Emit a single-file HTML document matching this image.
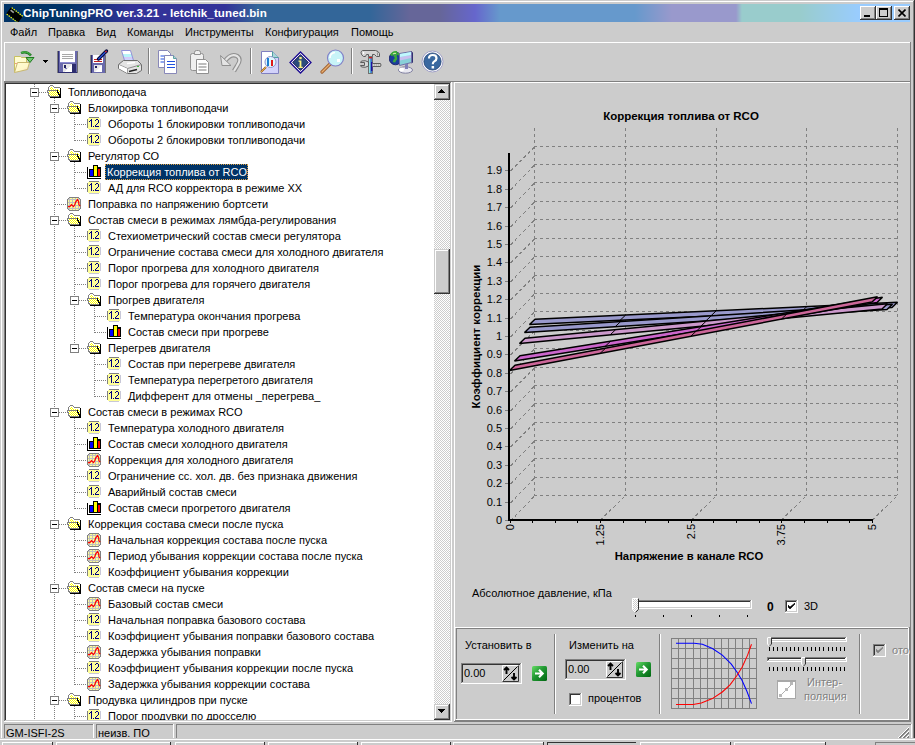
<!DOCTYPE html>
<html><head><meta charset="utf-8">
<style>
html,body{margin:0;padding:0;}
body{width:915px;height:745px;overflow:hidden;position:relative;background:#cccccc;font-family:"Liberation Sans",sans-serif;font-size:11px;color:#000;}
.a{position:absolute;}
.ic{position:absolute;}
.t{position:absolute;white-space:nowrap;line-height:16px;height:16px;}
.hl{position:absolute;height:1px;}
.vl{position:absolute;width:1px;}
.dh{position:absolute;height:1px;background:repeating-linear-gradient(90deg,#808080 0 1px,transparent 1px 2px);}
.dv{position:absolute;width:1px;background:repeating-linear-gradient(180deg,#808080 0 1px,transparent 1px 2px);}
</style></head><body>

<div class="a" style="left:1px;top:1px;width:913px;height:1px;background:#fff;"></div>
<div class="a" style="left:1px;top:1px;width:1px;height:737px;background:#fff;"></div>
<div class="a" style="left:913px;top:1px;width:1px;height:737px;background:#808080;"></div>
<div class="a" style="left:914px;top:0px;width:1px;height:738px;background:#333333;"></div>
<div class="a" style="left:4px;top:4px;width:906px;height:18px;background:linear-gradient(90deg,#003366 0px,#003366 62px,#333399 126px,#333399 221px,#336699 254px,#336699 366px,#666699 406px,#666699 436px,#6666cc 471px,#6699cc 496px,#6699cc 631px,#9999cc 668px,#9999cc 732px,#99cccc 738px,#99cccc 796px,#99ccff 856px,#99ccff 906px);"></div>
<svg class="a" style="left:4px;top:4px" width="20" height="18" viewBox="0 0 20 18">
<g transform="rotate(38 10.5 11)"><rect x="3" y="7.5" width="15" height="7" fill="#000"/>
<rect x="4.5" y="8.8" width="4" height="1.6" fill="#a0a0a0"/>
<path d="M4.5 6.3v1.2M7 6.3v1.2M9.5 6.3v1.2M12 6.3v1.2M14.5 6.3v1.2M17 6.3v1.2M4.5 14.5v1.2M7 14.5v1.2M9.5 14.5v1.2M12 14.5v1.2M14.5 14.5v1.2M17 14.5v1.2" stroke="#ffff00" stroke-width="1.4"/></g>
</svg>
<div class="t" style="left:23px;top:5px;color:#fff;font-weight:bold;font-size:11.6px;letter-spacing:0.09px;">ChipTuningPRO ver.3.21 - letchik_tuned.bin</div>
<div class="a" style="left:860px;top:6px;width:16px;height:1px;background:#fff;"></div>
<div class="a" style="left:860px;top:6px;width:1px;height:14px;background:#fff;"></div>
<div class="a" style="left:860px;top:19px;width:16px;height:1px;background:#333333;"></div>
<div class="a" style="left:875px;top:6px;width:1px;height:14px;background:#333333;"></div>
<div class="a" style="left:861px;top:18px;width:14px;height:1px;background:#808080;"></div>
<div class="a" style="left:874px;top:7px;width:1px;height:12px;background:#808080;"></div>
<div class="a" style="left:861px;top:7px;width:14px;height:12px;background:#cccccc;"></div>
<div class="a" style="left:860px;top:6px;width:16px;height:1px;background:#fff;"></div>
<div class="a" style="left:860px;top:6px;width:1px;height:14px;background:#fff;"></div>
<div class="a" style="left:861px;top:18px;width:14px;height:1px;background:#808080;"></div>
<div class="a" style="left:874px;top:7px;width:1px;height:12px;background:#808080;"></div>
<div class="a" style="left:860px;top:19px;width:16px;height:1px;background:#333333;"></div>
<div class="a" style="left:875px;top:6px;width:1px;height:14px;background:#333333;"></div>
<div class="a" style="left:864px;top:15px;width:6px;height:2px;background:#000;"></div>
<div class="a" style="left:876px;top:6px;width:16px;height:1px;background:#fff;"></div>
<div class="a" style="left:876px;top:6px;width:1px;height:14px;background:#fff;"></div>
<div class="a" style="left:876px;top:19px;width:16px;height:1px;background:#333333;"></div>
<div class="a" style="left:891px;top:6px;width:1px;height:14px;background:#333333;"></div>
<div class="a" style="left:877px;top:18px;width:14px;height:1px;background:#808080;"></div>
<div class="a" style="left:890px;top:7px;width:1px;height:12px;background:#808080;"></div>
<div class="a" style="left:877px;top:7px;width:14px;height:12px;background:#cccccc;"></div>
<div class="a" style="left:876px;top:6px;width:16px;height:1px;background:#fff;"></div>
<div class="a" style="left:876px;top:6px;width:1px;height:14px;background:#fff;"></div>
<div class="a" style="left:877px;top:18px;width:14px;height:1px;background:#808080;"></div>
<div class="a" style="left:890px;top:7px;width:1px;height:12px;background:#808080;"></div>
<div class="a" style="left:876px;top:19px;width:16px;height:1px;background:#333333;"></div>
<div class="a" style="left:891px;top:6px;width:1px;height:14px;background:#333333;"></div>
<div class="a" style="left:879px;top:8px;width:9px;height:9px;background:#000;"></div>
<div class="a" style="left:880px;top:10px;width:7px;height:6px;background:#cccccc;"></div>
<div class="a" style="left:894px;top:6px;width:16px;height:1px;background:#fff;"></div>
<div class="a" style="left:894px;top:6px;width:1px;height:14px;background:#fff;"></div>
<div class="a" style="left:894px;top:19px;width:16px;height:1px;background:#333333;"></div>
<div class="a" style="left:909px;top:6px;width:1px;height:14px;background:#333333;"></div>
<div class="a" style="left:895px;top:18px;width:14px;height:1px;background:#808080;"></div>
<div class="a" style="left:908px;top:7px;width:1px;height:12px;background:#808080;"></div>
<div class="a" style="left:895px;top:7px;width:14px;height:12px;background:#cccccc;"></div>
<div class="a" style="left:894px;top:6px;width:16px;height:1px;background:#fff;"></div>
<div class="a" style="left:894px;top:6px;width:1px;height:14px;background:#fff;"></div>
<div class="a" style="left:895px;top:18px;width:14px;height:1px;background:#808080;"></div>
<div class="a" style="left:908px;top:7px;width:1px;height:12px;background:#808080;"></div>
<div class="a" style="left:894px;top:19px;width:16px;height:1px;background:#333333;"></div>
<div class="a" style="left:909px;top:6px;width:1px;height:14px;background:#333333;"></div>
<svg class="a" style="left:898px;top:9px" width="8" height="8" viewBox="0 0 8 8"><path d="M0.5 0.5L7.5 7.5M7.5 0.5L0.5 7.5" stroke="#000" stroke-width="1.6"/></svg>
<div class="t" style="left:10px;top:24px;">Файл</div>
<div class="t" style="left:48px;top:24px;">Правка</div>
<div class="t" style="left:96px;top:24px;">Вид</div>
<div class="t" style="left:127px;top:24px;">Команды</div>
<div class="t" style="left:185px;top:24px;">Инструменты</div>
<div class="t" style="left:265px;top:24px;">Конфигурация</div>
<div class="t" style="left:351px;top:24px;">Помощь</div>
<div class="a" style="left:4px;top:42px;width:907px;height:1px;background:#fff;"></div>
<div class="a" style="left:4px;top:42px;width:1px;height:39px;background:#fff;"></div>
<div class="a" style="left:4px;top:81px;width:907px;height:1px;background:#808080;"></div>
<div class="a" style="left:910px;top:42px;width:1px;height:40px;background:#808080;"></div>
<div class="a" style="left:148px;top:48px;width:1px;height:26px;background:#808080;"></div>
<div class="a" style="left:149px;top:48px;width:1px;height:26px;background:#fff;"></div>
<div class="a" style="left:250px;top:48px;width:1px;height:26px;background:#808080;"></div>
<div class="a" style="left:251px;top:48px;width:1px;height:26px;background:#fff;"></div>
<div class="a" style="left:351px;top:48px;width:1px;height:26px;background:#808080;"></div>
<div class="a" style="left:352px;top:48px;width:1px;height:26px;background:#fff;"></div>
<svg class="a" style="left:12px;top:49px" width="24" height="26" viewBox="0 0 24 26">
<defs><linearGradient id="fo" x1="0" y1="0" x2="1" y2="1"><stop offset="0" stop-color="#fffcd8"/><stop offset="0.6" stop-color="#fff8c8"/><stop offset="1" stop-color="#f8c0c8"/></linearGradient></defs>
<path d="M2.5 23.5V7.5H8.5L9.5 8.5H14.5V13.5" fill="#fffcd0" stroke="#c8c060" stroke-width="1"/>
<path d="M2.5 23.5L5.5 13.5H17.5L15.5 20.5Z" fill="url(#fo)" stroke="#c8b870" stroke-width="1"/>
<path d="M3 14.5H5" stroke="#f0a080" stroke-width="1"/>
<path d="M9 4q6-2.5 10 2.5" stroke="#207820" stroke-width="2.4" fill="none"/>
<path d="M9.5 3.5q5.5-1.8 9 2.5" stroke="#50c050" stroke-width="1" fill="none"/>
<path d="M14 8.5L22 8.5L18 13.5Z" fill="#70c870" stroke="#207820" stroke-width="1"/>
</svg>
<svg class="a" style="left:43px;top:60px" width="7" height="5" viewBox="0 0 7 5" shape-rendering="crispEdges"><rect x="0" y="0" width="5" height="1" fill="#000"/><rect x="1" y="1" width="3" height="1" fill="#000"/><rect x="2" y="2" width="1" height="1" fill="#000"/></svg>
<svg class="a" style="left:56px;top:50px" width="23" height="24" viewBox="0 0 23 24" shape-rendering="crispEdges">
<rect x="1" y="1" width="21" height="22" fill="#6a6aac"/>
<rect x="1" y="1" width="1" height="22" fill="#808080"/>
<rect x="2" y="1" width="1" height="22" fill="#2e2e70"/>
<rect x="21" y="2" width="1" height="21" fill="#707070"/>
<rect x="3" y="22" width="18" height="1" fill="#2e2e70"/>
<rect x="4" y="1" width="15" height="11" fill="#fff"/>
<rect x="6" y="4" width="11" height="1" fill="#a8a8a8"/>
<rect x="6" y="6" width="11" height="1" fill="#a8a8a8"/>
<rect x="6" y="8" width="11" height="1" fill="#a8a8a8"/>
<rect x="4" y="12" width="15" height="1" fill="#8c8cd0"/>
<rect x="16" y="14" width="4" height="8" fill="#2e2e6e"/>
<rect x="7" y="14" width="9" height="8" fill="#e8e8e8"/>
<path d="M8 22L16 14V22Z" fill="#ffffff"/>
<rect x="8" y="15" width="2" height="3" fill="#202060"/>
<rect x="9" y="18" width="2" height="1" fill="#8080c0"/>
</svg>
<svg class="a" style="left:89px;top:49px" width="20" height="25" viewBox="0 0 20 25">
<rect x="1" y="6" width="16" height="18" fill="#6a6aac"/>
<rect x="1" y="6" width="1" height="18" fill="#808080"/><rect x="2" y="6" width="1" height="18" fill="#2e2e70"/>
<rect x="16" y="7" width="1" height="17" fill="#707070"/>
<rect x="4" y="6" width="10" height="8" fill="#fff"/>
<path d="M5 10.5h8M5 12.5h8" stroke="#c02020" stroke-width="1"/>
<rect x="5" y="16" width="8" height="7" fill="#e8e8e8"/>
<path d="M6 23L13 16V23Z" fill="#fff"/>
<rect x="6" y="17" width="2" height="2" fill="#202060"/>
<path d="M9.5 10l8-8" stroke="#000030" stroke-width="3.2" stroke-linecap="round"/>
<path d="M9.8 9.7l7.5-7.5" stroke="#2850d0" stroke-width="1.5" stroke-linecap="round"/>
<path d="M16.3 3.2l1.2-1.2" stroke="#d02020" stroke-width="1.6"/>
</svg>
<svg class="a" style="left:117px;top:49px" width="26" height="26" viewBox="0 0 26 26">
<defs><linearGradient id="pp" x1="0" y1="0" x2="0" y2="1"><stop offset="0" stop-color="#fff"/><stop offset="0.35" stop-color="#fff"/><stop offset="0.4" stop-color="#b8f4f8"/><stop offset="0.6" stop-color="#b8f4f8"/><stop offset="0.65" stop-color="#d8c8f8"/><stop offset="1" stop-color="#c8d8ff"/></linearGradient></defs>
<path d="M4.5 1.5H13.5L16.5 11.5H7.5Z" fill="url(#pp)" stroke="#9090d8" stroke-width="1"/>
<path d="M1.5 15.5L6.5 11.5H20.5L24.5 15.5V21.5L19.5 24.5H10.5L1.5 19.5Z" fill="#e4e4e4" stroke="#6c6c6c" stroke-width="1"/>
<path d="M1.5 15.5L10.5 19.5L24.5 15.5" stroke="#8c8c8c" stroke-width="1" fill="none"/>
<path d="M2 16L10 19.5V24L2 19.5Z" fill="#fff"/>
<path d="M10 14.5L18 13.5" stroke="#fff" stroke-width="1.6"/>
<path d="M10.5 19.5V24.5" stroke="#a0a0a0" stroke-width="1"/>
<path d="M12 22.5L20 20.5" stroke="#202020" stroke-width="1.6"/>
<rect x="20" y="17" width="2" height="1" fill="#40c040"/>
</svg>
<svg class="a" style="left:157px;top:50px" width="23" height="25" viewBox="0 0 23 25">
<path d="M1.5 0.5h9l3 3v14h-12z" fill="#fff" stroke="#8888b8" stroke-width="1"/>
<path d="M3.5 6h7M3.5 9h7M3.5 12h7" stroke="#2050e0" stroke-width="1.2"/>
<path d="M7.5 5.5h9l3 3v15h-12z" fill="#fff" stroke="#8888b8" stroke-width="1"/>
<path d="M16.5 5.5v3h3" fill="#a8d8d8" stroke="#60a0a0" stroke-width="1"/>
<path d="M10 11.5h8M10 14.5h8M10 17.5h8" stroke="#2050e0" stroke-width="1.2"/>
</svg>
<svg class="a" style="left:189px;top:49px" width="23" height="26" viewBox="0 0 23 26">
<rect x="1.5" y="4.5" width="13" height="17" rx="2" fill="#f0f0f0" stroke="#909090" stroke-width="1"/>
<path d="M5.5 5.5v-2q0-2 2-2h2q2 0 2 2v2z" fill="#f0f0f0" stroke="#909090" stroke-width="1"/>
<path d="M7.5 10.5h9l3 3v11h-12z" fill="#fff" stroke="#909090" stroke-width="1"/>
<path d="M9.5 15h8M9.5 18h8M9.5 21h8" stroke="#a8a8a8" stroke-width="1.4"/>
</svg>
<svg class="a" style="left:219px;top:52px" width="24" height="22" viewBox="0 0 24 22">
<path d="M6 9q6-8 12-5q5 3 0 10l-3 5" stroke="#909090" stroke-width="4.4" fill="none"/>
<path d="M6 9q6-8 12-5q5 3 0 10l-3 5" stroke="#e4e4e4" stroke-width="2.2" fill="none"/>
<path d="M1.5 3.5l1.5 10h9z" fill="#e4e4e4" stroke="#909090" stroke-width="1"/>
</svg>
<svg class="a" style="left:259px;top:50px" width="22" height="25" viewBox="0 0 22 25">
<defs><linearGradient id="pv" x1="0" y1="0" x2="1" y2="1"><stop offset="0" stop-color="#fff"/><stop offset="0.45" stop-color="#fff"/><stop offset="0.55" stop-color="#d4d4fc"/><stop offset="1" stop-color="#d0d0f8"/></linearGradient></defs>
<path d="M2.5 1.5h11l6 6v16h-17z" fill="url(#pv)" stroke="#8080c0" stroke-width="1"/>
<path d="M13.5 1.5v6h6" fill="#a8d8d8" stroke="#50a0a0" stroke-width="1"/>
<circle cx="11.5" cy="12" r="5.5" fill="#e0f8ff" stroke="#9090c8" stroke-width="1"/>
<rect x="8" y="8" width="2" height="8" fill="#2080d0"/><rect x="12" y="10" width="2" height="6" fill="#e01818"/>
<path d="M2 22l5-5" stroke="#a06030" stroke-width="2.2"/>
<path d="M2 22l5-5" stroke="#e8c040" stroke-width="0.9"/>
</svg>
<svg class="a" style="left:289px;top:51px" width="23" height="23" viewBox="0 0 23 23">
<path d="M11.5 1l10.5 10.5-10.5 10.5-10.5-10.5z" fill="#fff" stroke="#180890" stroke-width="1.3"/>
<path d="M11.5 3.6l7.9 7.9-7.9 7.9-7.9-7.9z" fill="#2c4c7c" stroke="#100050" stroke-width="0.8"/>
<rect x="10.3" y="6" width="2.4" height="2.2" fill="#f8f080"/>
<path d="M9.5 9.6h2.9v6.2h1.4v1.2h-4.3v-1.2h1.1v-5h-1.1z" fill="#f8f080"/>
</svg>
<svg class="a" style="left:320px;top:49px" width="26" height="25" viewBox="0 0 26 25">
<path d="M2 23l8-8" stroke="#a06030" stroke-width="3.2" stroke-linecap="round"/>
<path d="M2 23l8-8" stroke="#e8b070" stroke-width="1.3" stroke-linecap="round"/>
<circle cx="15.5" cy="9" r="8" fill="#c8f4f8" stroke="#8080c8" stroke-width="1.2"/>
<path d="M10 9q0-5 5-5.5" stroke="#fff" stroke-width="1.6" fill="none"/>
<rect x="17" y="10" width="3" height="3" fill="#fff"/>
</svg>
<svg class="a" style="left:359px;top:49px" width="24" height="26" viewBox="0 0 24 26">
<path d="M3.5 1.5H16.5Q19.5 2 20.5 4.5V7.5H17.5L15.5 5.5H13.5V7.5H9.5V5.5H7.5L6.5 7.5H4.5Q2 6 2 3.5Q2.3 2 3.5 1.5Z" fill="#d4d4d4" stroke="#5c5c5c" stroke-width="1"/>
<path d="M4.5 3v2" stroke="#fff" stroke-width="1.4"/>
<path d="M18.5 3.5v3" stroke="#909090" stroke-width="1"/>
<rect x="9.5" y="7.5" width="4" height="17" fill="#3a78c8" stroke="#707070" stroke-width="1"/>
<rect x="10" y="8" width="1.3" height="16" fill="#90e0e8"/>
<rect x="12" y="13" width="1.5" height="9" fill="#2010a0"/>
<rect x="10" y="8" width="3" height="1.4" fill="#d02020"/>
<path d="M13.5 14.5h8q1 1.5 0 3h-8" fill="#d0d0d0" stroke="#5c5c5c" stroke-width="1"/>
<path d="M15 16h5" stroke="#a0a0a0" stroke-width="1" stroke-dasharray="1 1"/>
<path d="M9.5 13q-3-2-7-1l-1 1.5h4v3h-4l1 1.5q4 1 7-1z" fill="#d8d8d8" stroke="#5c5c5c" stroke-width="1"/>
</svg>
<svg class="a" style="left:389px;top:50px" width="26" height="25" viewBox="0 0 26 25">
<circle cx="6.5" cy="8.5" r="6.3" fill="#1a3c9c" stroke="#101860" stroke-width="0.8"/>
<path d="M2 5.5q2-3.5 5-3.2q1 2-1 3.5q1.5 1.5 1 3q-1.5 1-2 3.5" stroke="#3aa83a" stroke-width="2.6" fill="none"/>
<path d="M8.5 3.5q3 1 3.3 4" stroke="#3aa83a" stroke-width="2" fill="none"/>
<path d="M4 4q1.5-1 3-0.5" stroke="#c8f0a0" stroke-width="1.3" fill="none"/>
<path d="M10.5 3.5L22.5 1.5V12.5L10.5 15.5Z" fill="#88d0d8" stroke="#7070a8" stroke-width="1"/>
<path d="M11 7L22 5V8L11 10.5Z" fill="#c8c0f0"/>
<path d="M11 4L22 2V5L11 7Z" fill="#c0f8ff"/>
<path d="M22.5 1.5L23.5 2.5V12.5L22.5 13" stroke="#303070" stroke-width="1" fill="none"/>
<ellipse cx="16.5" cy="20" rx="7" ry="3.2" fill="#e8e8f0" stroke="#8080a0" stroke-width="1"/>
<ellipse cx="12.5" cy="19.5" rx="2.5" ry="2" fill="#fff"/>
<rect x="16" y="14" width="3" height="5" fill="#8080b8"/>
</svg>
<svg class="a" style="left:421px;top:50px" width="24" height="24" viewBox="0 0 24 24">
<circle cx="11.5" cy="11.5" r="10.5" fill="#fff" stroke="#a0a0c8" stroke-width="1"/>
<circle cx="11.5" cy="11.5" r="8.6" fill="#3a68a0" stroke="#203c70" stroke-width="0.8"/>
<path d="M8 8.5q0-3.5 3.7-3.5q3.8 0 3.8 3.2q0 2-2.2 3.2q-1.5 0.8-1.5 2.8" stroke="#fff" stroke-width="2.2" fill="none"/>
<rect x="10.6" y="16" width="2.5" height="2.5" fill="#fff"/>
</svg>
<div class="a" style="left:4px;top:82px;width:448px;height:640px;background:#fff;"></div>
<div class="a" style="left:4px;top:82px;width:447px;height:1px;background:#808080;"></div>
<div class="a" style="left:4px;top:82px;width:1px;height:639px;background:#808080;"></div>
<div class="a" style="left:5px;top:83px;width:445px;height:1px;background:#333333;"></div>
<div class="a" style="left:5px;top:83px;width:1px;height:637px;background:#333333;"></div>
<div class="a" style="left:4px;top:721px;width:448px;height:1px;background:#fff;"></div>
<div class="a" style="left:451px;top:82px;width:1px;height:640px;background:#fff;"></div>
<div class="a" style="left:5px;top:720px;width:446px;height:1px;background:#cccccc;"></div>
<div class="a" style="left:450px;top:83px;width:1px;height:638px;background:#cccccc;"></div>
<div class="a" style="left:6px;top:84px;width:428px;height:636px;overflow:hidden;">
<div class="dv" style="left:28px;top:0px;height:636px;"></div>
<div class="dv" style="left:48px;top:14px;height:636px;"></div>
<div class="dv" style="left:68px;top:30px;height:27px;"></div>
<div class="dv" style="left:68px;top:78px;height:27px;"></div>
<div class="dv" style="left:68px;top:142px;height:123px;"></div>
<div class="dv" style="left:88px;top:222px;height:27px;"></div>
<div class="dv" style="left:88px;top:270px;height:43px;"></div>
<div class="dv" style="left:68px;top:334px;height:91px;"></div>
<div class="dv" style="left:68px;top:446px;height:43px;"></div>
<div class="dv" style="left:68px;top:510px;height:91px;"></div>
<div class="dv" style="left:68px;top:622px;height:15px;"></div>
<div class="dh" style="left:33px;top:8px;width:7px;"></div>
<div class="a" style="left:24px;top:4px;width:9px;height:9px;background:#808080;"></div>
<div class="a" style="left:25px;top:5px;width:7px;height:7px;background:#fff;"></div>
<div class="a" style="left:26px;top:8px;width:5px;height:1px;background:#000;"></div>
<svg class="ic" style="left:40px;top:0px;" width="16" height="16" viewBox="0 0 16 16" shape-rendering="crispEdges"><rect x="4" y="1" width="3" height="1" fill="#808080"/><rect x="3" y="2" width="1" height="1" fill="#808080"/><rect x="4" y="2" width="3" height="1" fill="#fff"/><rect x="7" y="2" width="1" height="1" fill="#808080"/><rect x="2" y="3" width="1" height="1" fill="#808080"/><rect x="3" y="3" width="2" height="1" fill="#fff"/><rect x="5" y="3" width="1" height="1" fill="#ffff00"/><rect x="6" y="3" width="2" height="1" fill="#fff"/><rect x="8" y="3" width="6" height="1" fill="#808080"/><rect x="2" y="4" width="1" height="1" fill="#808080"/><rect x="3" y="4" width="1" height="1" fill="#fff"/><rect x="4" y="4" width="1" height="1" fill="#ffff00"/><rect x="5" y="4" width="1" height="1" fill="#fff"/><rect x="6" y="4" width="1" height="1" fill="#ffff00"/><rect x="7" y="4" width="7" height="1" fill="#fff"/><rect x="14" y="4" width="1" height="1" fill="#000"/><rect x="2" y="5" width="1" height="1" fill="#808080"/><rect x="3" y="5" width="2" height="1" fill="#fff"/><rect x="5" y="5" width="1" height="1" fill="#ffff00"/><rect x="6" y="5" width="1" height="1" fill="#fff"/><rect x="7" y="5" width="1" height="1" fill="#ffff00"/><rect x="8" y="5" width="1" height="1" fill="#fff"/><rect x="9" y="5" width="1" height="1" fill="#ffff00"/><rect x="10" y="5" width="1" height="1" fill="#fff"/><rect x="11" y="5" width="1" height="1" fill="#ffff00"/><rect x="12" y="5" width="2" height="1" fill="#fff"/><rect x="14" y="5" width="1" height="1" fill="#000"/><rect x="1" y="6" width="10" height="1" fill="#808080"/><rect x="11" y="6" width="1" height="1" fill="#000"/><rect x="12" y="6" width="1" height="1" fill="#ffff00"/><rect x="13" y="6" width="1" height="1" fill="#fff"/><rect x="14" y="6" width="1" height="1" fill="#000"/><rect x="1" y="7" width="1" height="1" fill="#808080"/><rect x="2" y="7" width="1" height="1" fill="#fff"/><rect x="3" y="7" width="1" height="1" fill="#ffff00"/><rect x="4" y="7" width="1" height="1" fill="#fff"/><rect x="5" y="7" width="1" height="1" fill="#ffff00"/><rect x="6" y="7" width="1" height="1" fill="#fff"/><rect x="7" y="7" width="1" height="1" fill="#ffff00"/><rect x="8" y="7" width="1" height="1" fill="#fff"/><rect x="9" y="7" width="1" height="1" fill="#ffff00"/><rect x="10" y="7" width="1" height="1" fill="#fff"/><rect x="11" y="7" width="1" height="1" fill="#000"/><rect x="12" y="7" width="1" height="1" fill="#fff"/><rect x="13" y="7" width="1" height="1" fill="#ffff00"/><rect x="14" y="7" width="1" height="1" fill="#000"/><rect x="1" y="8" width="2" height="1" fill="#808080"/><rect x="3" y="8" width="1" height="1" fill="#fff"/><rect x="4" y="8" width="1" height="1" fill="#ffff00"/><rect x="5" y="8" width="1" height="1" fill="#fff"/><rect x="6" y="8" width="1" height="1" fill="#ffff00"/><rect x="7" y="8" width="1" height="1" fill="#fff"/><rect x="8" y="8" width="1" height="1" fill="#ffff00"/><rect x="9" y="8" width="1" height="1" fill="#fff"/><rect x="10" y="8" width="1" height="1" fill="#ffff00"/><rect x="11" y="8" width="2" height="1" fill="#000"/><rect x="13" y="8" width="1" height="1" fill="#fff"/><rect x="14" y="8" width="1" height="1" fill="#000"/><rect x="2" y="9" width="1" height="1" fill="#808080"/><rect x="3" y="9" width="1" height="1" fill="#ffff00"/><rect x="4" y="9" width="1" height="1" fill="#fff"/><rect x="5" y="9" width="1" height="1" fill="#ffff00"/><rect x="6" y="9" width="1" height="1" fill="#fff"/><rect x="7" y="9" width="1" height="1" fill="#ffff00"/><rect x="8" y="9" width="1" height="1" fill="#fff"/><rect x="9" y="9" width="1" height="1" fill="#ffff00"/><rect x="10" y="9" width="1" height="1" fill="#fff"/><rect x="11" y="9" width="1" height="1" fill="#ffff00"/><rect x="12" y="9" width="1" height="1" fill="#000"/><rect x="13" y="9" width="1" height="1" fill="#ffff00"/><rect x="14" y="9" width="1" height="1" fill="#000"/><rect x="2" y="10" width="1" height="1" fill="#808080"/><rect x="3" y="10" width="1" height="1" fill="#fff"/><rect x="4" y="10" width="1" height="1" fill="#ffff00"/><rect x="5" y="10" width="1" height="1" fill="#fff"/><rect x="6" y="10" width="1" height="1" fill="#ffff00"/><rect x="7" y="10" width="1" height="1" fill="#fff"/><rect x="8" y="10" width="1" height="1" fill="#ffff00"/><rect x="9" y="10" width="1" height="1" fill="#fff"/><rect x="10" y="10" width="1" height="1" fill="#ffff00"/><rect x="11" y="10" width="1" height="1" fill="#fff"/><rect x="12" y="10" width="3" height="1" fill="#000"/><rect x="2" y="11" width="2" height="1" fill="#808080"/><rect x="4" y="11" width="1" height="1" fill="#fff"/><rect x="5" y="11" width="1" height="1" fill="#ffff00"/><rect x="6" y="11" width="1" height="1" fill="#fff"/><rect x="7" y="11" width="1" height="1" fill="#ffff00"/><rect x="8" y="11" width="1" height="1" fill="#fff"/><rect x="9" y="11" width="1" height="1" fill="#ffff00"/><rect x="10" y="11" width="1" height="1" fill="#fff"/><rect x="11" y="11" width="1" height="1" fill="#ffff00"/><rect x="12" y="11" width="1" height="1" fill="#fff"/><rect x="13" y="11" width="2" height="1" fill="#000"/><rect x="3" y="12" width="10" height="1" fill="#808080"/><rect x="13" y="12" width="2" height="1" fill="#000"/><rect x="4" y="13" width="11" height="1" fill="#000"/></svg>
<div class="t" style="left:62px;top:0px;">Топливоподача</div>
<div class="dh" style="left:53px;top:24px;width:7px;"></div>
<div class="a" style="left:44px;top:20px;width:9px;height:9px;background:#808080;"></div>
<div class="a" style="left:45px;top:21px;width:7px;height:7px;background:#fff;"></div>
<div class="a" style="left:46px;top:24px;width:5px;height:1px;background:#000;"></div>
<svg class="ic" style="left:60px;top:16px;" width="16" height="16" viewBox="0 0 16 16" shape-rendering="crispEdges"><rect x="4" y="1" width="3" height="1" fill="#808080"/><rect x="3" y="2" width="1" height="1" fill="#808080"/><rect x="4" y="2" width="3" height="1" fill="#fff"/><rect x="7" y="2" width="1" height="1" fill="#808080"/><rect x="2" y="3" width="1" height="1" fill="#808080"/><rect x="3" y="3" width="2" height="1" fill="#fff"/><rect x="5" y="3" width="1" height="1" fill="#ffff00"/><rect x="6" y="3" width="2" height="1" fill="#fff"/><rect x="8" y="3" width="6" height="1" fill="#808080"/><rect x="2" y="4" width="1" height="1" fill="#808080"/><rect x="3" y="4" width="1" height="1" fill="#fff"/><rect x="4" y="4" width="1" height="1" fill="#ffff00"/><rect x="5" y="4" width="1" height="1" fill="#fff"/><rect x="6" y="4" width="1" height="1" fill="#ffff00"/><rect x="7" y="4" width="7" height="1" fill="#fff"/><rect x="14" y="4" width="1" height="1" fill="#000"/><rect x="2" y="5" width="1" height="1" fill="#808080"/><rect x="3" y="5" width="2" height="1" fill="#fff"/><rect x="5" y="5" width="1" height="1" fill="#ffff00"/><rect x="6" y="5" width="1" height="1" fill="#fff"/><rect x="7" y="5" width="1" height="1" fill="#ffff00"/><rect x="8" y="5" width="1" height="1" fill="#fff"/><rect x="9" y="5" width="1" height="1" fill="#ffff00"/><rect x="10" y="5" width="1" height="1" fill="#fff"/><rect x="11" y="5" width="1" height="1" fill="#ffff00"/><rect x="12" y="5" width="2" height="1" fill="#fff"/><rect x="14" y="5" width="1" height="1" fill="#000"/><rect x="1" y="6" width="10" height="1" fill="#808080"/><rect x="11" y="6" width="1" height="1" fill="#000"/><rect x="12" y="6" width="1" height="1" fill="#ffff00"/><rect x="13" y="6" width="1" height="1" fill="#fff"/><rect x="14" y="6" width="1" height="1" fill="#000"/><rect x="1" y="7" width="1" height="1" fill="#808080"/><rect x="2" y="7" width="1" height="1" fill="#fff"/><rect x="3" y="7" width="1" height="1" fill="#ffff00"/><rect x="4" y="7" width="1" height="1" fill="#fff"/><rect x="5" y="7" width="1" height="1" fill="#ffff00"/><rect x="6" y="7" width="1" height="1" fill="#fff"/><rect x="7" y="7" width="1" height="1" fill="#ffff00"/><rect x="8" y="7" width="1" height="1" fill="#fff"/><rect x="9" y="7" width="1" height="1" fill="#ffff00"/><rect x="10" y="7" width="1" height="1" fill="#fff"/><rect x="11" y="7" width="1" height="1" fill="#000"/><rect x="12" y="7" width="1" height="1" fill="#fff"/><rect x="13" y="7" width="1" height="1" fill="#ffff00"/><rect x="14" y="7" width="1" height="1" fill="#000"/><rect x="1" y="8" width="2" height="1" fill="#808080"/><rect x="3" y="8" width="1" height="1" fill="#fff"/><rect x="4" y="8" width="1" height="1" fill="#ffff00"/><rect x="5" y="8" width="1" height="1" fill="#fff"/><rect x="6" y="8" width="1" height="1" fill="#ffff00"/><rect x="7" y="8" width="1" height="1" fill="#fff"/><rect x="8" y="8" width="1" height="1" fill="#ffff00"/><rect x="9" y="8" width="1" height="1" fill="#fff"/><rect x="10" y="8" width="1" height="1" fill="#ffff00"/><rect x="11" y="8" width="2" height="1" fill="#000"/><rect x="13" y="8" width="1" height="1" fill="#fff"/><rect x="14" y="8" width="1" height="1" fill="#000"/><rect x="2" y="9" width="1" height="1" fill="#808080"/><rect x="3" y="9" width="1" height="1" fill="#ffff00"/><rect x="4" y="9" width="1" height="1" fill="#fff"/><rect x="5" y="9" width="1" height="1" fill="#ffff00"/><rect x="6" y="9" width="1" height="1" fill="#fff"/><rect x="7" y="9" width="1" height="1" fill="#ffff00"/><rect x="8" y="9" width="1" height="1" fill="#fff"/><rect x="9" y="9" width="1" height="1" fill="#ffff00"/><rect x="10" y="9" width="1" height="1" fill="#fff"/><rect x="11" y="9" width="1" height="1" fill="#ffff00"/><rect x="12" y="9" width="1" height="1" fill="#000"/><rect x="13" y="9" width="1" height="1" fill="#ffff00"/><rect x="14" y="9" width="1" height="1" fill="#000"/><rect x="2" y="10" width="1" height="1" fill="#808080"/><rect x="3" y="10" width="1" height="1" fill="#fff"/><rect x="4" y="10" width="1" height="1" fill="#ffff00"/><rect x="5" y="10" width="1" height="1" fill="#fff"/><rect x="6" y="10" width="1" height="1" fill="#ffff00"/><rect x="7" y="10" width="1" height="1" fill="#fff"/><rect x="8" y="10" width="1" height="1" fill="#ffff00"/><rect x="9" y="10" width="1" height="1" fill="#fff"/><rect x="10" y="10" width="1" height="1" fill="#ffff00"/><rect x="11" y="10" width="1" height="1" fill="#fff"/><rect x="12" y="10" width="3" height="1" fill="#000"/><rect x="2" y="11" width="2" height="1" fill="#808080"/><rect x="4" y="11" width="1" height="1" fill="#fff"/><rect x="5" y="11" width="1" height="1" fill="#ffff00"/><rect x="6" y="11" width="1" height="1" fill="#fff"/><rect x="7" y="11" width="1" height="1" fill="#ffff00"/><rect x="8" y="11" width="1" height="1" fill="#fff"/><rect x="9" y="11" width="1" height="1" fill="#ffff00"/><rect x="10" y="11" width="1" height="1" fill="#fff"/><rect x="11" y="11" width="1" height="1" fill="#ffff00"/><rect x="12" y="11" width="1" height="1" fill="#fff"/><rect x="13" y="11" width="2" height="1" fill="#000"/><rect x="3" y="12" width="10" height="1" fill="#808080"/><rect x="13" y="12" width="2" height="1" fill="#000"/><rect x="4" y="13" width="11" height="1" fill="#000"/></svg>
<div class="t" style="left:82px;top:16px;">Блокировка топливоподачи</div>
<div class="dh" style="left:69px;top:40px;width:11px;"></div>
<svg class="ic" style="left:80px;top:32px;" width="16" height="16" viewBox="0 0 16 16" shape-rendering="crispEdges"><rect x="3" y="1" width="10" height="1" fill="#808080"/><rect x="2" y="2" width="12" height="1" fill="#ffff99"/><rect x="1" y="3" width="1" height="1" fill="#808080"/><rect x="2" y="3" width="3" height="1" fill="#ffff99"/><rect x="5" y="3" width="1" height="1" fill="#000080"/><rect x="6" y="3" width="4" height="1" fill="#ffff99"/><rect x="10" y="3" width="2" height="1" fill="#000080"/><rect x="12" y="3" width="2" height="1" fill="#ffff99"/><rect x="14" y="3" width="1" height="1" fill="#c8c8d8"/><rect x="1" y="4" width="1" height="1" fill="#808080"/><rect x="2" y="4" width="2" height="1" fill="#ffff99"/><rect x="4" y="4" width="2" height="1" fill="#000080"/><rect x="6" y="4" width="3" height="1" fill="#ffff99"/><rect x="9" y="4" width="1" height="1" fill="#000080"/><rect x="10" y="4" width="2" height="1" fill="#ffff99"/><rect x="12" y="4" width="1" height="1" fill="#000080"/><rect x="13" y="4" width="1" height="1" fill="#ffff99"/><rect x="14" y="4" width="1" height="1" fill="#c8c8d8"/><rect x="1" y="5" width="1" height="1" fill="#808080"/><rect x="2" y="5" width="1" height="1" fill="#ffff99"/><rect x="3" y="5" width="1" height="1" fill="#000080"/><rect x="4" y="5" width="1" height="1" fill="#ffff99"/><rect x="5" y="5" width="1" height="1" fill="#000080"/><rect x="6" y="5" width="6" height="1" fill="#ffff99"/><rect x="12" y="5" width="1" height="1" fill="#000080"/><rect x="13" y="5" width="1" height="1" fill="#ffff99"/><rect x="14" y="5" width="1" height="1" fill="#c8c8d8"/><rect x="1" y="6" width="1" height="1" fill="#808080"/><rect x="2" y="6" width="3" height="1" fill="#ffff99"/><rect x="5" y="6" width="1" height="1" fill="#000080"/><rect x="6" y="6" width="6" height="1" fill="#ffff99"/><rect x="12" y="6" width="1" height="1" fill="#000080"/><rect x="13" y="6" width="1" height="1" fill="#ffff99"/><rect x="14" y="6" width="1" height="1" fill="#c8c8d8"/><rect x="1" y="7" width="1" height="1" fill="#808080"/><rect x="2" y="7" width="3" height="1" fill="#ffff99"/><rect x="5" y="7" width="1" height="1" fill="#000080"/><rect x="6" y="7" width="5" height="1" fill="#ffff99"/><rect x="11" y="7" width="1" height="1" fill="#000080"/><rect x="12" y="7" width="2" height="1" fill="#ffff99"/><rect x="14" y="7" width="1" height="1" fill="#c8c8d8"/><rect x="1" y="8" width="1" height="1" fill="#808080"/><rect x="2" y="8" width="3" height="1" fill="#ffff99"/><rect x="5" y="8" width="1" height="1" fill="#000080"/><rect x="6" y="8" width="4" height="1" fill="#ffff99"/><rect x="10" y="8" width="1" height="1" fill="#000080"/><rect x="11" y="8" width="3" height="1" fill="#ffff99"/><rect x="14" y="8" width="1" height="1" fill="#c8c8d8"/><rect x="1" y="9" width="1" height="1" fill="#808080"/><rect x="2" y="9" width="3" height="1" fill="#ffff99"/><rect x="5" y="9" width="1" height="1" fill="#000080"/><rect x="6" y="9" width="3" height="1" fill="#ffff99"/><rect x="9" y="9" width="1" height="1" fill="#000080"/><rect x="10" y="9" width="4" height="1" fill="#ffff99"/><rect x="14" y="9" width="1" height="1" fill="#c8c8d8"/><rect x="1" y="10" width="1" height="1" fill="#808080"/><rect x="2" y="10" width="3" height="1" fill="#ffff99"/><rect x="5" y="10" width="1" height="1" fill="#000080"/><rect x="6" y="10" width="1" height="1" fill="#ffff99"/><rect x="7" y="10" width="1" height="1" fill="#000080"/><rect x="8" y="10" width="1" height="1" fill="#ffff99"/><rect x="9" y="10" width="4" height="1" fill="#000080"/><rect x="13" y="10" width="1" height="1" fill="#ffff99"/><rect x="14" y="10" width="1" height="1" fill="#c8c8d8"/><rect x="1" y="11" width="1" height="1" fill="#808080"/><rect x="2" y="11" width="12" height="1" fill="#ffff99"/><rect x="2" y="12" width="12" height="1" fill="#ffff99"/><rect x="3" y="13" width="10" height="1" fill="#c8c8d8"/></svg>
<div class="t" style="left:102px;top:32px;">Обороты 1 блокировки топливоподачи</div>
<div class="dh" style="left:69px;top:56px;width:11px;"></div>
<svg class="ic" style="left:80px;top:48px;" width="16" height="16" viewBox="0 0 16 16" shape-rendering="crispEdges"><rect x="3" y="1" width="10" height="1" fill="#808080"/><rect x="2" y="2" width="12" height="1" fill="#ffff99"/><rect x="1" y="3" width="1" height="1" fill="#808080"/><rect x="2" y="3" width="3" height="1" fill="#ffff99"/><rect x="5" y="3" width="1" height="1" fill="#000080"/><rect x="6" y="3" width="4" height="1" fill="#ffff99"/><rect x="10" y="3" width="2" height="1" fill="#000080"/><rect x="12" y="3" width="2" height="1" fill="#ffff99"/><rect x="14" y="3" width="1" height="1" fill="#c8c8d8"/><rect x="1" y="4" width="1" height="1" fill="#808080"/><rect x="2" y="4" width="2" height="1" fill="#ffff99"/><rect x="4" y="4" width="2" height="1" fill="#000080"/><rect x="6" y="4" width="3" height="1" fill="#ffff99"/><rect x="9" y="4" width="1" height="1" fill="#000080"/><rect x="10" y="4" width="2" height="1" fill="#ffff99"/><rect x="12" y="4" width="1" height="1" fill="#000080"/><rect x="13" y="4" width="1" height="1" fill="#ffff99"/><rect x="14" y="4" width="1" height="1" fill="#c8c8d8"/><rect x="1" y="5" width="1" height="1" fill="#808080"/><rect x="2" y="5" width="1" height="1" fill="#ffff99"/><rect x="3" y="5" width="1" height="1" fill="#000080"/><rect x="4" y="5" width="1" height="1" fill="#ffff99"/><rect x="5" y="5" width="1" height="1" fill="#000080"/><rect x="6" y="5" width="6" height="1" fill="#ffff99"/><rect x="12" y="5" width="1" height="1" fill="#000080"/><rect x="13" y="5" width="1" height="1" fill="#ffff99"/><rect x="14" y="5" width="1" height="1" fill="#c8c8d8"/><rect x="1" y="6" width="1" height="1" fill="#808080"/><rect x="2" y="6" width="3" height="1" fill="#ffff99"/><rect x="5" y="6" width="1" height="1" fill="#000080"/><rect x="6" y="6" width="6" height="1" fill="#ffff99"/><rect x="12" y="6" width="1" height="1" fill="#000080"/><rect x="13" y="6" width="1" height="1" fill="#ffff99"/><rect x="14" y="6" width="1" height="1" fill="#c8c8d8"/><rect x="1" y="7" width="1" height="1" fill="#808080"/><rect x="2" y="7" width="3" height="1" fill="#ffff99"/><rect x="5" y="7" width="1" height="1" fill="#000080"/><rect x="6" y="7" width="5" height="1" fill="#ffff99"/><rect x="11" y="7" width="1" height="1" fill="#000080"/><rect x="12" y="7" width="2" height="1" fill="#ffff99"/><rect x="14" y="7" width="1" height="1" fill="#c8c8d8"/><rect x="1" y="8" width="1" height="1" fill="#808080"/><rect x="2" y="8" width="3" height="1" fill="#ffff99"/><rect x="5" y="8" width="1" height="1" fill="#000080"/><rect x="6" y="8" width="4" height="1" fill="#ffff99"/><rect x="10" y="8" width="1" height="1" fill="#000080"/><rect x="11" y="8" width="3" height="1" fill="#ffff99"/><rect x="14" y="8" width="1" height="1" fill="#c8c8d8"/><rect x="1" y="9" width="1" height="1" fill="#808080"/><rect x="2" y="9" width="3" height="1" fill="#ffff99"/><rect x="5" y="9" width="1" height="1" fill="#000080"/><rect x="6" y="9" width="3" height="1" fill="#ffff99"/><rect x="9" y="9" width="1" height="1" fill="#000080"/><rect x="10" y="9" width="4" height="1" fill="#ffff99"/><rect x="14" y="9" width="1" height="1" fill="#c8c8d8"/><rect x="1" y="10" width="1" height="1" fill="#808080"/><rect x="2" y="10" width="3" height="1" fill="#ffff99"/><rect x="5" y="10" width="1" height="1" fill="#000080"/><rect x="6" y="10" width="1" height="1" fill="#ffff99"/><rect x="7" y="10" width="1" height="1" fill="#000080"/><rect x="8" y="10" width="1" height="1" fill="#ffff99"/><rect x="9" y="10" width="4" height="1" fill="#000080"/><rect x="13" y="10" width="1" height="1" fill="#ffff99"/><rect x="14" y="10" width="1" height="1" fill="#c8c8d8"/><rect x="1" y="11" width="1" height="1" fill="#808080"/><rect x="2" y="11" width="12" height="1" fill="#ffff99"/><rect x="2" y="12" width="12" height="1" fill="#ffff99"/><rect x="3" y="13" width="10" height="1" fill="#c8c8d8"/></svg>
<div class="t" style="left:102px;top:48px;">Обороты 2 блокировки топливоподачи</div>
<div class="dh" style="left:53px;top:72px;width:7px;"></div>
<div class="a" style="left:44px;top:68px;width:9px;height:9px;background:#808080;"></div>
<div class="a" style="left:45px;top:69px;width:7px;height:7px;background:#fff;"></div>
<div class="a" style="left:46px;top:72px;width:5px;height:1px;background:#000;"></div>
<svg class="ic" style="left:60px;top:64px;" width="16" height="16" viewBox="0 0 16 16" shape-rendering="crispEdges"><rect x="4" y="1" width="3" height="1" fill="#808080"/><rect x="3" y="2" width="1" height="1" fill="#808080"/><rect x="4" y="2" width="3" height="1" fill="#fff"/><rect x="7" y="2" width="1" height="1" fill="#808080"/><rect x="2" y="3" width="1" height="1" fill="#808080"/><rect x="3" y="3" width="2" height="1" fill="#fff"/><rect x="5" y="3" width="1" height="1" fill="#ffff00"/><rect x="6" y="3" width="2" height="1" fill="#fff"/><rect x="8" y="3" width="6" height="1" fill="#808080"/><rect x="2" y="4" width="1" height="1" fill="#808080"/><rect x="3" y="4" width="1" height="1" fill="#fff"/><rect x="4" y="4" width="1" height="1" fill="#ffff00"/><rect x="5" y="4" width="1" height="1" fill="#fff"/><rect x="6" y="4" width="1" height="1" fill="#ffff00"/><rect x="7" y="4" width="7" height="1" fill="#fff"/><rect x="14" y="4" width="1" height="1" fill="#000"/><rect x="2" y="5" width="1" height="1" fill="#808080"/><rect x="3" y="5" width="2" height="1" fill="#fff"/><rect x="5" y="5" width="1" height="1" fill="#ffff00"/><rect x="6" y="5" width="1" height="1" fill="#fff"/><rect x="7" y="5" width="1" height="1" fill="#ffff00"/><rect x="8" y="5" width="1" height="1" fill="#fff"/><rect x="9" y="5" width="1" height="1" fill="#ffff00"/><rect x="10" y="5" width="1" height="1" fill="#fff"/><rect x="11" y="5" width="1" height="1" fill="#ffff00"/><rect x="12" y="5" width="2" height="1" fill="#fff"/><rect x="14" y="5" width="1" height="1" fill="#000"/><rect x="1" y="6" width="10" height="1" fill="#808080"/><rect x="11" y="6" width="1" height="1" fill="#000"/><rect x="12" y="6" width="1" height="1" fill="#ffff00"/><rect x="13" y="6" width="1" height="1" fill="#fff"/><rect x="14" y="6" width="1" height="1" fill="#000"/><rect x="1" y="7" width="1" height="1" fill="#808080"/><rect x="2" y="7" width="1" height="1" fill="#fff"/><rect x="3" y="7" width="1" height="1" fill="#ffff00"/><rect x="4" y="7" width="1" height="1" fill="#fff"/><rect x="5" y="7" width="1" height="1" fill="#ffff00"/><rect x="6" y="7" width="1" height="1" fill="#fff"/><rect x="7" y="7" width="1" height="1" fill="#ffff00"/><rect x="8" y="7" width="1" height="1" fill="#fff"/><rect x="9" y="7" width="1" height="1" fill="#ffff00"/><rect x="10" y="7" width="1" height="1" fill="#fff"/><rect x="11" y="7" width="1" height="1" fill="#000"/><rect x="12" y="7" width="1" height="1" fill="#fff"/><rect x="13" y="7" width="1" height="1" fill="#ffff00"/><rect x="14" y="7" width="1" height="1" fill="#000"/><rect x="1" y="8" width="2" height="1" fill="#808080"/><rect x="3" y="8" width="1" height="1" fill="#fff"/><rect x="4" y="8" width="1" height="1" fill="#ffff00"/><rect x="5" y="8" width="1" height="1" fill="#fff"/><rect x="6" y="8" width="1" height="1" fill="#ffff00"/><rect x="7" y="8" width="1" height="1" fill="#fff"/><rect x="8" y="8" width="1" height="1" fill="#ffff00"/><rect x="9" y="8" width="1" height="1" fill="#fff"/><rect x="10" y="8" width="1" height="1" fill="#ffff00"/><rect x="11" y="8" width="2" height="1" fill="#000"/><rect x="13" y="8" width="1" height="1" fill="#fff"/><rect x="14" y="8" width="1" height="1" fill="#000"/><rect x="2" y="9" width="1" height="1" fill="#808080"/><rect x="3" y="9" width="1" height="1" fill="#ffff00"/><rect x="4" y="9" width="1" height="1" fill="#fff"/><rect x="5" y="9" width="1" height="1" fill="#ffff00"/><rect x="6" y="9" width="1" height="1" fill="#fff"/><rect x="7" y="9" width="1" height="1" fill="#ffff00"/><rect x="8" y="9" width="1" height="1" fill="#fff"/><rect x="9" y="9" width="1" height="1" fill="#ffff00"/><rect x="10" y="9" width="1" height="1" fill="#fff"/><rect x="11" y="9" width="1" height="1" fill="#ffff00"/><rect x="12" y="9" width="1" height="1" fill="#000"/><rect x="13" y="9" width="1" height="1" fill="#ffff00"/><rect x="14" y="9" width="1" height="1" fill="#000"/><rect x="2" y="10" width="1" height="1" fill="#808080"/><rect x="3" y="10" width="1" height="1" fill="#fff"/><rect x="4" y="10" width="1" height="1" fill="#ffff00"/><rect x="5" y="10" width="1" height="1" fill="#fff"/><rect x="6" y="10" width="1" height="1" fill="#ffff00"/><rect x="7" y="10" width="1" height="1" fill="#fff"/><rect x="8" y="10" width="1" height="1" fill="#ffff00"/><rect x="9" y="10" width="1" height="1" fill="#fff"/><rect x="10" y="10" width="1" height="1" fill="#ffff00"/><rect x="11" y="10" width="1" height="1" fill="#fff"/><rect x="12" y="10" width="3" height="1" fill="#000"/><rect x="2" y="11" width="2" height="1" fill="#808080"/><rect x="4" y="11" width="1" height="1" fill="#fff"/><rect x="5" y="11" width="1" height="1" fill="#ffff00"/><rect x="6" y="11" width="1" height="1" fill="#fff"/><rect x="7" y="11" width="1" height="1" fill="#ffff00"/><rect x="8" y="11" width="1" height="1" fill="#fff"/><rect x="9" y="11" width="1" height="1" fill="#ffff00"/><rect x="10" y="11" width="1" height="1" fill="#fff"/><rect x="11" y="11" width="1" height="1" fill="#ffff00"/><rect x="12" y="11" width="1" height="1" fill="#fff"/><rect x="13" y="11" width="2" height="1" fill="#000"/><rect x="3" y="12" width="10" height="1" fill="#808080"/><rect x="13" y="12" width="2" height="1" fill="#000"/><rect x="4" y="13" width="11" height="1" fill="#000"/></svg>
<div class="t" style="left:82px;top:64px;">Регулятор СО</div>
<div class="dh" style="left:69px;top:88px;width:11px;"></div>
<svg class="ic" style="left:80px;top:80px;" width="16" height="16" viewBox="0 0 16 16" shape-rendering="crispEdges"><rect x="7" y="1" width="5" height="1" fill="#000"/><rect x="2" y="2" width="1" height="1" fill="#fff"/><rect x="7" y="2" width="1" height="1" fill="#000"/><rect x="8" y="2" width="3" height="1" fill="#ffff00"/><rect x="11" y="2" width="1" height="1" fill="#000"/><rect x="1" y="3" width="1" height="1" fill="#000"/><rect x="2" y="3" width="1" height="1" fill="#fff"/><rect x="7" y="3" width="1" height="1" fill="#000"/><rect x="8" y="3" width="3" height="1" fill="#ffff00"/><rect x="11" y="3" width="4" height="1" fill="#000"/><rect x="1" y="4" width="1" height="1" fill="#000"/><rect x="2" y="4" width="1" height="1" fill="#fff"/><rect x="7" y="4" width="1" height="1" fill="#000"/><rect x="8" y="4" width="3" height="1" fill="#ffff00"/><rect x="11" y="4" width="4" height="1" fill="#000"/><rect x="1" y="5" width="1" height="1" fill="#000"/><rect x="2" y="5" width="1" height="1" fill="#fff"/><rect x="3" y="5" width="5" height="1" fill="#000"/><rect x="8" y="5" width="3" height="1" fill="#ffff00"/><rect x="11" y="5" width="1" height="1" fill="#000"/><rect x="12" y="5" width="2" height="1" fill="#ff0000"/><rect x="14" y="5" width="1" height="1" fill="#000"/><rect x="1" y="6" width="1" height="1" fill="#000"/><rect x="2" y="6" width="1" height="1" fill="#fff"/><rect x="3" y="6" width="1" height="1" fill="#000"/><rect x="4" y="6" width="3" height="1" fill="#0000ff"/><rect x="7" y="6" width="1" height="1" fill="#000"/><rect x="8" y="6" width="3" height="1" fill="#ffff00"/><rect x="11" y="6" width="1" height="1" fill="#000"/><rect x="12" y="6" width="2" height="1" fill="#ff0000"/><rect x="14" y="6" width="1" height="1" fill="#000"/><rect x="1" y="7" width="1" height="1" fill="#000"/><rect x="2" y="7" width="1" height="1" fill="#fff"/><rect x="3" y="7" width="1" height="1" fill="#000"/><rect x="4" y="7" width="3" height="1" fill="#0000ff"/><rect x="7" y="7" width="1" height="1" fill="#000"/><rect x="8" y="7" width="3" height="1" fill="#ffff00"/><rect x="11" y="7" width="1" height="1" fill="#000"/><rect x="12" y="7" width="2" height="1" fill="#ff0000"/><rect x="14" y="7" width="1" height="1" fill="#000"/><rect x="1" y="8" width="1" height="1" fill="#000"/><rect x="2" y="8" width="1" height="1" fill="#fff"/><rect x="3" y="8" width="1" height="1" fill="#000"/><rect x="4" y="8" width="3" height="1" fill="#0000ff"/><rect x="7" y="8" width="1" height="1" fill="#000"/><rect x="8" y="8" width="3" height="1" fill="#ffff00"/><rect x="11" y="8" width="1" height="1" fill="#000"/><rect x="12" y="8" width="2" height="1" fill="#ff0000"/><rect x="14" y="8" width="1" height="1" fill="#000"/><rect x="1" y="9" width="1" height="1" fill="#000"/><rect x="2" y="9" width="1" height="1" fill="#fff"/><rect x="3" y="9" width="1" height="1" fill="#000"/><rect x="4" y="9" width="3" height="1" fill="#0000ff"/><rect x="7" y="9" width="1" height="1" fill="#000"/><rect x="8" y="9" width="3" height="1" fill="#ffff00"/><rect x="11" y="9" width="1" height="1" fill="#000"/><rect x="12" y="9" width="2" height="1" fill="#ff0000"/><rect x="14" y="9" width="1" height="1" fill="#000"/><rect x="1" y="10" width="1" height="1" fill="#000"/><rect x="2" y="10" width="1" height="1" fill="#fff"/><rect x="3" y="10" width="1" height="1" fill="#000"/><rect x="4" y="10" width="3" height="1" fill="#0000ff"/><rect x="7" y="10" width="1" height="1" fill="#000"/><rect x="8" y="10" width="3" height="1" fill="#ffff00"/><rect x="11" y="10" width="1" height="1" fill="#000"/><rect x="12" y="10" width="2" height="1" fill="#ff0000"/><rect x="14" y="10" width="1" height="1" fill="#000"/><rect x="1" y="11" width="1" height="1" fill="#000"/><rect x="2" y="11" width="1" height="1" fill="#fff"/><rect x="3" y="11" width="1" height="1" fill="#000"/><rect x="4" y="11" width="3" height="1" fill="#0000ff"/><rect x="7" y="11" width="1" height="1" fill="#000"/><rect x="8" y="11" width="3" height="1" fill="#ffff00"/><rect x="11" y="11" width="1" height="1" fill="#000"/><rect x="12" y="11" width="2" height="1" fill="#ff0000"/><rect x="14" y="11" width="1" height="1" fill="#000"/><rect x="1" y="12" width="1" height="1" fill="#000"/><rect x="2" y="12" width="1" height="1" fill="#fff"/><rect x="3" y="12" width="12" height="1" fill="#000"/><rect x="1" y="13" width="1" height="1" fill="#000"/><rect x="2" y="13" width="12" height="1" fill="#fff"/><rect x="1" y="14" width="14" height="1" fill="#000"/></svg>
<div class="a" style="left:99px;top:80px;width:143px;height:16px;background:#003366;"></div>
<div class="a" style="left:99px;top:80px;width:141px;height:14px;border:1px dotted #e0a040;"></div>
<div class="t" style="left:101px;top:80px;color:#fff">Коррекция топлива от RCO</div>
<div class="dh" style="left:69px;top:104px;width:11px;"></div>
<svg class="ic" style="left:80px;top:96px;" width="16" height="16" viewBox="0 0 16 16" shape-rendering="crispEdges"><rect x="3" y="1" width="10" height="1" fill="#808080"/><rect x="2" y="2" width="12" height="1" fill="#ffff99"/><rect x="1" y="3" width="1" height="1" fill="#808080"/><rect x="2" y="3" width="3" height="1" fill="#ffff99"/><rect x="5" y="3" width="1" height="1" fill="#000080"/><rect x="6" y="3" width="4" height="1" fill="#ffff99"/><rect x="10" y="3" width="2" height="1" fill="#000080"/><rect x="12" y="3" width="2" height="1" fill="#ffff99"/><rect x="14" y="3" width="1" height="1" fill="#c8c8d8"/><rect x="1" y="4" width="1" height="1" fill="#808080"/><rect x="2" y="4" width="2" height="1" fill="#ffff99"/><rect x="4" y="4" width="2" height="1" fill="#000080"/><rect x="6" y="4" width="3" height="1" fill="#ffff99"/><rect x="9" y="4" width="1" height="1" fill="#000080"/><rect x="10" y="4" width="2" height="1" fill="#ffff99"/><rect x="12" y="4" width="1" height="1" fill="#000080"/><rect x="13" y="4" width="1" height="1" fill="#ffff99"/><rect x="14" y="4" width="1" height="1" fill="#c8c8d8"/><rect x="1" y="5" width="1" height="1" fill="#808080"/><rect x="2" y="5" width="1" height="1" fill="#ffff99"/><rect x="3" y="5" width="1" height="1" fill="#000080"/><rect x="4" y="5" width="1" height="1" fill="#ffff99"/><rect x="5" y="5" width="1" height="1" fill="#000080"/><rect x="6" y="5" width="6" height="1" fill="#ffff99"/><rect x="12" y="5" width="1" height="1" fill="#000080"/><rect x="13" y="5" width="1" height="1" fill="#ffff99"/><rect x="14" y="5" width="1" height="1" fill="#c8c8d8"/><rect x="1" y="6" width="1" height="1" fill="#808080"/><rect x="2" y="6" width="3" height="1" fill="#ffff99"/><rect x="5" y="6" width="1" height="1" fill="#000080"/><rect x="6" y="6" width="6" height="1" fill="#ffff99"/><rect x="12" y="6" width="1" height="1" fill="#000080"/><rect x="13" y="6" width="1" height="1" fill="#ffff99"/><rect x="14" y="6" width="1" height="1" fill="#c8c8d8"/><rect x="1" y="7" width="1" height="1" fill="#808080"/><rect x="2" y="7" width="3" height="1" fill="#ffff99"/><rect x="5" y="7" width="1" height="1" fill="#000080"/><rect x="6" y="7" width="5" height="1" fill="#ffff99"/><rect x="11" y="7" width="1" height="1" fill="#000080"/><rect x="12" y="7" width="2" height="1" fill="#ffff99"/><rect x="14" y="7" width="1" height="1" fill="#c8c8d8"/><rect x="1" y="8" width="1" height="1" fill="#808080"/><rect x="2" y="8" width="3" height="1" fill="#ffff99"/><rect x="5" y="8" width="1" height="1" fill="#000080"/><rect x="6" y="8" width="4" height="1" fill="#ffff99"/><rect x="10" y="8" width="1" height="1" fill="#000080"/><rect x="11" y="8" width="3" height="1" fill="#ffff99"/><rect x="14" y="8" width="1" height="1" fill="#c8c8d8"/><rect x="1" y="9" width="1" height="1" fill="#808080"/><rect x="2" y="9" width="3" height="1" fill="#ffff99"/><rect x="5" y="9" width="1" height="1" fill="#000080"/><rect x="6" y="9" width="3" height="1" fill="#ffff99"/><rect x="9" y="9" width="1" height="1" fill="#000080"/><rect x="10" y="9" width="4" height="1" fill="#ffff99"/><rect x="14" y="9" width="1" height="1" fill="#c8c8d8"/><rect x="1" y="10" width="1" height="1" fill="#808080"/><rect x="2" y="10" width="3" height="1" fill="#ffff99"/><rect x="5" y="10" width="1" height="1" fill="#000080"/><rect x="6" y="10" width="1" height="1" fill="#ffff99"/><rect x="7" y="10" width="1" height="1" fill="#000080"/><rect x="8" y="10" width="1" height="1" fill="#ffff99"/><rect x="9" y="10" width="4" height="1" fill="#000080"/><rect x="13" y="10" width="1" height="1" fill="#ffff99"/><rect x="14" y="10" width="1" height="1" fill="#c8c8d8"/><rect x="1" y="11" width="1" height="1" fill="#808080"/><rect x="2" y="11" width="12" height="1" fill="#ffff99"/><rect x="2" y="12" width="12" height="1" fill="#ffff99"/><rect x="3" y="13" width="10" height="1" fill="#c8c8d8"/></svg>
<div class="t" style="left:102px;top:96px;">АД для RCO корректора в режиме XX</div>
<div class="dh" style="left:49px;top:120px;width:11px;"></div>
<svg class="ic" style="left:60px;top:112px;" width="16" height="16" viewBox="0 0 16 16" shape-rendering="crispEdges"><rect x="3" y="1" width="10" height="1" fill="#808080"/><rect x="2" y="2" width="1" height="1" fill="#808080"/><rect x="3" y="2" width="1" height="1" fill="#c0c0c0"/><rect x="4" y="2" width="2" height="1" fill="#ffff99"/><rect x="6" y="2" width="1" height="1" fill="#c0c0c0"/><rect x="7" y="2" width="2" height="1" fill="#ffff99"/><rect x="9" y="2" width="1" height="1" fill="#c0c0c0"/><rect x="10" y="2" width="2" height="1" fill="#ffff99"/><rect x="12" y="2" width="1" height="1" fill="#c0c0c0"/><rect x="13" y="2" width="1" height="1" fill="#808080"/><rect x="1" y="3" width="1" height="1" fill="#808080"/><rect x="2" y="3" width="12" height="1" fill="#c0c0c0"/><rect x="14" y="3" width="1" height="1" fill="#808080"/><rect x="1" y="4" width="1" height="1" fill="#808080"/><rect x="2" y="4" width="1" height="1" fill="#ffff99"/><rect x="3" y="4" width="1" height="1" fill="#c0c0c0"/><rect x="4" y="4" width="2" height="1" fill="#ffff99"/><rect x="6" y="4" width="1" height="1" fill="#c0c0c0"/><rect x="7" y="4" width="2" height="1" fill="#ffff99"/><rect x="9" y="4" width="1" height="1" fill="#c0c0c0"/><rect x="10" y="4" width="2" height="1" fill="#ffff99"/><rect x="12" y="4" width="1" height="1" fill="#c0c0c0"/><rect x="13" y="4" width="1" height="1" fill="#ffff99"/><rect x="14" y="4" width="1" height="1" fill="#808080"/><rect x="1" y="5" width="1" height="1" fill="#808080"/><rect x="2" y="5" width="1" height="1" fill="#ffff99"/><rect x="3" y="5" width="1" height="1" fill="#c0c0c0"/><rect x="4" y="5" width="2" height="1" fill="#ffff99"/><rect x="6" y="5" width="1" height="1" fill="#c0c0c0"/><rect x="7" y="5" width="2" height="1" fill="#ffff99"/><rect x="9" y="5" width="1" height="1" fill="#c0c0c0"/><rect x="10" y="5" width="2" height="1" fill="#ffff99"/><rect x="12" y="5" width="1" height="1" fill="#c0c0c0"/><rect x="13" y="5" width="1" height="1" fill="#ffff99"/><rect x="14" y="5" width="1" height="1" fill="#808080"/><rect x="1" y="6" width="1" height="1" fill="#808080"/><rect x="2" y="6" width="12" height="1" fill="#c0c0c0"/><rect x="14" y="6" width="1" height="1" fill="#808080"/><rect x="1" y="7" width="1" height="1" fill="#808080"/><rect x="2" y="7" width="1" height="1" fill="#ffff99"/><rect x="3" y="7" width="1" height="1" fill="#c0c0c0"/><rect x="4" y="7" width="2" height="1" fill="#ffff99"/><rect x="6" y="7" width="1" height="1" fill="#c0c0c0"/><rect x="7" y="7" width="2" height="1" fill="#ffff99"/><rect x="9" y="7" width="1" height="1" fill="#c0c0c0"/><rect x="10" y="7" width="2" height="1" fill="#ffff99"/><rect x="12" y="7" width="1" height="1" fill="#c0c0c0"/><rect x="13" y="7" width="1" height="1" fill="#ffff99"/><rect x="14" y="7" width="1" height="1" fill="#808080"/><rect x="1" y="8" width="1" height="1" fill="#808080"/><rect x="2" y="8" width="1" height="1" fill="#ffff99"/><rect x="3" y="8" width="1" height="1" fill="#c0c0c0"/><rect x="4" y="8" width="2" height="1" fill="#ffff99"/><rect x="6" y="8" width="1" height="1" fill="#c0c0c0"/><rect x="7" y="8" width="2" height="1" fill="#ffff99"/><rect x="9" y="8" width="1" height="1" fill="#c0c0c0"/><rect x="10" y="8" width="2" height="1" fill="#ffff99"/><rect x="12" y="8" width="1" height="1" fill="#c0c0c0"/><rect x="13" y="8" width="1" height="1" fill="#ffff99"/><rect x="14" y="8" width="1" height="1" fill="#808080"/><rect x="1" y="9" width="1" height="1" fill="#808080"/><rect x="2" y="9" width="12" height="1" fill="#c0c0c0"/><rect x="14" y="9" width="1" height="1" fill="#808080"/><rect x="1" y="10" width="1" height="1" fill="#808080"/><rect x="2" y="10" width="1" height="1" fill="#ffff99"/><rect x="3" y="10" width="1" height="1" fill="#c0c0c0"/><rect x="4" y="10" width="2" height="1" fill="#ffff99"/><rect x="6" y="10" width="1" height="1" fill="#c0c0c0"/><rect x="7" y="10" width="2" height="1" fill="#ffff99"/><rect x="9" y="10" width="1" height="1" fill="#c0c0c0"/><rect x="10" y="10" width="2" height="1" fill="#ffff99"/><rect x="12" y="10" width="1" height="1" fill="#c0c0c0"/><rect x="13" y="10" width="1" height="1" fill="#ffff99"/><rect x="14" y="10" width="1" height="1" fill="#808080"/><rect x="1" y="11" width="1" height="1" fill="#808080"/><rect x="2" y="11" width="1" height="1" fill="#ffff99"/><rect x="3" y="11" width="1" height="1" fill="#c0c0c0"/><rect x="4" y="11" width="2" height="1" fill="#ffff99"/><rect x="6" y="11" width="1" height="1" fill="#c0c0c0"/><rect x="7" y="11" width="2" height="1" fill="#ffff99"/><rect x="9" y="11" width="1" height="1" fill="#c0c0c0"/><rect x="10" y="11" width="2" height="1" fill="#ffff99"/><rect x="12" y="11" width="1" height="1" fill="#c0c0c0"/><rect x="13" y="11" width="1" height="1" fill="#ffff99"/><rect x="14" y="11" width="1" height="1" fill="#808080"/><rect x="1" y="12" width="1" height="1" fill="#808080"/><rect x="2" y="12" width="12" height="1" fill="#c0c0c0"/><rect x="14" y="12" width="1" height="1" fill="#808080"/><rect x="2" y="13" width="1" height="1" fill="#808080"/><rect x="3" y="13" width="1" height="1" fill="#c0c0c0"/><rect x="4" y="13" width="2" height="1" fill="#ffff99"/><rect x="6" y="13" width="1" height="1" fill="#c0c0c0"/><rect x="7" y="13" width="2" height="1" fill="#ffff99"/><rect x="9" y="13" width="1" height="1" fill="#c0c0c0"/><rect x="10" y="13" width="2" height="1" fill="#ffff99"/><rect x="12" y="13" width="1" height="1" fill="#c0c0c0"/><rect x="13" y="13" width="1" height="1" fill="#808080"/><rect x="3" y="14" width="10" height="1" fill="#808080"/><polyline points="2,10.5 3.8,10.5 5.5,8.6 7.5,10.6 8.6,9 9.8,5.8 11.5,3.6 12.6,5.5 13,8.8 14.2,10.2" stroke="#ff0000" stroke-width="1.25" fill="none" shape-rendering="auto"/></svg>
<div class="t" style="left:82px;top:112px;">Поправка по напряжению бортсети</div>
<div class="dh" style="left:53px;top:136px;width:7px;"></div>
<div class="a" style="left:44px;top:132px;width:9px;height:9px;background:#808080;"></div>
<div class="a" style="left:45px;top:133px;width:7px;height:7px;background:#fff;"></div>
<div class="a" style="left:46px;top:136px;width:5px;height:1px;background:#000;"></div>
<svg class="ic" style="left:60px;top:128px;" width="16" height="16" viewBox="0 0 16 16" shape-rendering="crispEdges"><rect x="4" y="1" width="3" height="1" fill="#808080"/><rect x="3" y="2" width="1" height="1" fill="#808080"/><rect x="4" y="2" width="3" height="1" fill="#fff"/><rect x="7" y="2" width="1" height="1" fill="#808080"/><rect x="2" y="3" width="1" height="1" fill="#808080"/><rect x="3" y="3" width="2" height="1" fill="#fff"/><rect x="5" y="3" width="1" height="1" fill="#ffff00"/><rect x="6" y="3" width="2" height="1" fill="#fff"/><rect x="8" y="3" width="6" height="1" fill="#808080"/><rect x="2" y="4" width="1" height="1" fill="#808080"/><rect x="3" y="4" width="1" height="1" fill="#fff"/><rect x="4" y="4" width="1" height="1" fill="#ffff00"/><rect x="5" y="4" width="1" height="1" fill="#fff"/><rect x="6" y="4" width="1" height="1" fill="#ffff00"/><rect x="7" y="4" width="7" height="1" fill="#fff"/><rect x="14" y="4" width="1" height="1" fill="#000"/><rect x="2" y="5" width="1" height="1" fill="#808080"/><rect x="3" y="5" width="2" height="1" fill="#fff"/><rect x="5" y="5" width="1" height="1" fill="#ffff00"/><rect x="6" y="5" width="1" height="1" fill="#fff"/><rect x="7" y="5" width="1" height="1" fill="#ffff00"/><rect x="8" y="5" width="1" height="1" fill="#fff"/><rect x="9" y="5" width="1" height="1" fill="#ffff00"/><rect x="10" y="5" width="1" height="1" fill="#fff"/><rect x="11" y="5" width="1" height="1" fill="#ffff00"/><rect x="12" y="5" width="2" height="1" fill="#fff"/><rect x="14" y="5" width="1" height="1" fill="#000"/><rect x="1" y="6" width="10" height="1" fill="#808080"/><rect x="11" y="6" width="1" height="1" fill="#000"/><rect x="12" y="6" width="1" height="1" fill="#ffff00"/><rect x="13" y="6" width="1" height="1" fill="#fff"/><rect x="14" y="6" width="1" height="1" fill="#000"/><rect x="1" y="7" width="1" height="1" fill="#808080"/><rect x="2" y="7" width="1" height="1" fill="#fff"/><rect x="3" y="7" width="1" height="1" fill="#ffff00"/><rect x="4" y="7" width="1" height="1" fill="#fff"/><rect x="5" y="7" width="1" height="1" fill="#ffff00"/><rect x="6" y="7" width="1" height="1" fill="#fff"/><rect x="7" y="7" width="1" height="1" fill="#ffff00"/><rect x="8" y="7" width="1" height="1" fill="#fff"/><rect x="9" y="7" width="1" height="1" fill="#ffff00"/><rect x="10" y="7" width="1" height="1" fill="#fff"/><rect x="11" y="7" width="1" height="1" fill="#000"/><rect x="12" y="7" width="1" height="1" fill="#fff"/><rect x="13" y="7" width="1" height="1" fill="#ffff00"/><rect x="14" y="7" width="1" height="1" fill="#000"/><rect x="1" y="8" width="2" height="1" fill="#808080"/><rect x="3" y="8" width="1" height="1" fill="#fff"/><rect x="4" y="8" width="1" height="1" fill="#ffff00"/><rect x="5" y="8" width="1" height="1" fill="#fff"/><rect x="6" y="8" width="1" height="1" fill="#ffff00"/><rect x="7" y="8" width="1" height="1" fill="#fff"/><rect x="8" y="8" width="1" height="1" fill="#ffff00"/><rect x="9" y="8" width="1" height="1" fill="#fff"/><rect x="10" y="8" width="1" height="1" fill="#ffff00"/><rect x="11" y="8" width="2" height="1" fill="#000"/><rect x="13" y="8" width="1" height="1" fill="#fff"/><rect x="14" y="8" width="1" height="1" fill="#000"/><rect x="2" y="9" width="1" height="1" fill="#808080"/><rect x="3" y="9" width="1" height="1" fill="#ffff00"/><rect x="4" y="9" width="1" height="1" fill="#fff"/><rect x="5" y="9" width="1" height="1" fill="#ffff00"/><rect x="6" y="9" width="1" height="1" fill="#fff"/><rect x="7" y="9" width="1" height="1" fill="#ffff00"/><rect x="8" y="9" width="1" height="1" fill="#fff"/><rect x="9" y="9" width="1" height="1" fill="#ffff00"/><rect x="10" y="9" width="1" height="1" fill="#fff"/><rect x="11" y="9" width="1" height="1" fill="#ffff00"/><rect x="12" y="9" width="1" height="1" fill="#000"/><rect x="13" y="9" width="1" height="1" fill="#ffff00"/><rect x="14" y="9" width="1" height="1" fill="#000"/><rect x="2" y="10" width="1" height="1" fill="#808080"/><rect x="3" y="10" width="1" height="1" fill="#fff"/><rect x="4" y="10" width="1" height="1" fill="#ffff00"/><rect x="5" y="10" width="1" height="1" fill="#fff"/><rect x="6" y="10" width="1" height="1" fill="#ffff00"/><rect x="7" y="10" width="1" height="1" fill="#fff"/><rect x="8" y="10" width="1" height="1" fill="#ffff00"/><rect x="9" y="10" width="1" height="1" fill="#fff"/><rect x="10" y="10" width="1" height="1" fill="#ffff00"/><rect x="11" y="10" width="1" height="1" fill="#fff"/><rect x="12" y="10" width="3" height="1" fill="#000"/><rect x="2" y="11" width="2" height="1" fill="#808080"/><rect x="4" y="11" width="1" height="1" fill="#fff"/><rect x="5" y="11" width="1" height="1" fill="#ffff00"/><rect x="6" y="11" width="1" height="1" fill="#fff"/><rect x="7" y="11" width="1" height="1" fill="#ffff00"/><rect x="8" y="11" width="1" height="1" fill="#fff"/><rect x="9" y="11" width="1" height="1" fill="#ffff00"/><rect x="10" y="11" width="1" height="1" fill="#fff"/><rect x="11" y="11" width="1" height="1" fill="#ffff00"/><rect x="12" y="11" width="1" height="1" fill="#fff"/><rect x="13" y="11" width="2" height="1" fill="#000"/><rect x="3" y="12" width="10" height="1" fill="#808080"/><rect x="13" y="12" width="2" height="1" fill="#000"/><rect x="4" y="13" width="11" height="1" fill="#000"/></svg>
<div class="t" style="left:82px;top:128px;">Состав смеси в режимах лямбда-регулирования</div>
<div class="dh" style="left:69px;top:152px;width:11px;"></div>
<svg class="ic" style="left:80px;top:144px;" width="16" height="16" viewBox="0 0 16 16" shape-rendering="crispEdges"><rect x="3" y="1" width="10" height="1" fill="#808080"/><rect x="2" y="2" width="12" height="1" fill="#ffff99"/><rect x="1" y="3" width="1" height="1" fill="#808080"/><rect x="2" y="3" width="3" height="1" fill="#ffff99"/><rect x="5" y="3" width="1" height="1" fill="#000080"/><rect x="6" y="3" width="4" height="1" fill="#ffff99"/><rect x="10" y="3" width="2" height="1" fill="#000080"/><rect x="12" y="3" width="2" height="1" fill="#ffff99"/><rect x="14" y="3" width="1" height="1" fill="#c8c8d8"/><rect x="1" y="4" width="1" height="1" fill="#808080"/><rect x="2" y="4" width="2" height="1" fill="#ffff99"/><rect x="4" y="4" width="2" height="1" fill="#000080"/><rect x="6" y="4" width="3" height="1" fill="#ffff99"/><rect x="9" y="4" width="1" height="1" fill="#000080"/><rect x="10" y="4" width="2" height="1" fill="#ffff99"/><rect x="12" y="4" width="1" height="1" fill="#000080"/><rect x="13" y="4" width="1" height="1" fill="#ffff99"/><rect x="14" y="4" width="1" height="1" fill="#c8c8d8"/><rect x="1" y="5" width="1" height="1" fill="#808080"/><rect x="2" y="5" width="1" height="1" fill="#ffff99"/><rect x="3" y="5" width="1" height="1" fill="#000080"/><rect x="4" y="5" width="1" height="1" fill="#ffff99"/><rect x="5" y="5" width="1" height="1" fill="#000080"/><rect x="6" y="5" width="6" height="1" fill="#ffff99"/><rect x="12" y="5" width="1" height="1" fill="#000080"/><rect x="13" y="5" width="1" height="1" fill="#ffff99"/><rect x="14" y="5" width="1" height="1" fill="#c8c8d8"/><rect x="1" y="6" width="1" height="1" fill="#808080"/><rect x="2" y="6" width="3" height="1" fill="#ffff99"/><rect x="5" y="6" width="1" height="1" fill="#000080"/><rect x="6" y="6" width="6" height="1" fill="#ffff99"/><rect x="12" y="6" width="1" height="1" fill="#000080"/><rect x="13" y="6" width="1" height="1" fill="#ffff99"/><rect x="14" y="6" width="1" height="1" fill="#c8c8d8"/><rect x="1" y="7" width="1" height="1" fill="#808080"/><rect x="2" y="7" width="3" height="1" fill="#ffff99"/><rect x="5" y="7" width="1" height="1" fill="#000080"/><rect x="6" y="7" width="5" height="1" fill="#ffff99"/><rect x="11" y="7" width="1" height="1" fill="#000080"/><rect x="12" y="7" width="2" height="1" fill="#ffff99"/><rect x="14" y="7" width="1" height="1" fill="#c8c8d8"/><rect x="1" y="8" width="1" height="1" fill="#808080"/><rect x="2" y="8" width="3" height="1" fill="#ffff99"/><rect x="5" y="8" width="1" height="1" fill="#000080"/><rect x="6" y="8" width="4" height="1" fill="#ffff99"/><rect x="10" y="8" width="1" height="1" fill="#000080"/><rect x="11" y="8" width="3" height="1" fill="#ffff99"/><rect x="14" y="8" width="1" height="1" fill="#c8c8d8"/><rect x="1" y="9" width="1" height="1" fill="#808080"/><rect x="2" y="9" width="3" height="1" fill="#ffff99"/><rect x="5" y="9" width="1" height="1" fill="#000080"/><rect x="6" y="9" width="3" height="1" fill="#ffff99"/><rect x="9" y="9" width="1" height="1" fill="#000080"/><rect x="10" y="9" width="4" height="1" fill="#ffff99"/><rect x="14" y="9" width="1" height="1" fill="#c8c8d8"/><rect x="1" y="10" width="1" height="1" fill="#808080"/><rect x="2" y="10" width="3" height="1" fill="#ffff99"/><rect x="5" y="10" width="1" height="1" fill="#000080"/><rect x="6" y="10" width="1" height="1" fill="#ffff99"/><rect x="7" y="10" width="1" height="1" fill="#000080"/><rect x="8" y="10" width="1" height="1" fill="#ffff99"/><rect x="9" y="10" width="4" height="1" fill="#000080"/><rect x="13" y="10" width="1" height="1" fill="#ffff99"/><rect x="14" y="10" width="1" height="1" fill="#c8c8d8"/><rect x="1" y="11" width="1" height="1" fill="#808080"/><rect x="2" y="11" width="12" height="1" fill="#ffff99"/><rect x="2" y="12" width="12" height="1" fill="#ffff99"/><rect x="3" y="13" width="10" height="1" fill="#c8c8d8"/></svg>
<div class="t" style="left:102px;top:144px;">Стехиометрический состав смеси регулятора</div>
<div class="dh" style="left:69px;top:168px;width:11px;"></div>
<svg class="ic" style="left:80px;top:160px;" width="16" height="16" viewBox="0 0 16 16" shape-rendering="crispEdges"><rect x="3" y="1" width="10" height="1" fill="#808080"/><rect x="2" y="2" width="12" height="1" fill="#ffff99"/><rect x="1" y="3" width="1" height="1" fill="#808080"/><rect x="2" y="3" width="3" height="1" fill="#ffff99"/><rect x="5" y="3" width="1" height="1" fill="#000080"/><rect x="6" y="3" width="4" height="1" fill="#ffff99"/><rect x="10" y="3" width="2" height="1" fill="#000080"/><rect x="12" y="3" width="2" height="1" fill="#ffff99"/><rect x="14" y="3" width="1" height="1" fill="#c8c8d8"/><rect x="1" y="4" width="1" height="1" fill="#808080"/><rect x="2" y="4" width="2" height="1" fill="#ffff99"/><rect x="4" y="4" width="2" height="1" fill="#000080"/><rect x="6" y="4" width="3" height="1" fill="#ffff99"/><rect x="9" y="4" width="1" height="1" fill="#000080"/><rect x="10" y="4" width="2" height="1" fill="#ffff99"/><rect x="12" y="4" width="1" height="1" fill="#000080"/><rect x="13" y="4" width="1" height="1" fill="#ffff99"/><rect x="14" y="4" width="1" height="1" fill="#c8c8d8"/><rect x="1" y="5" width="1" height="1" fill="#808080"/><rect x="2" y="5" width="1" height="1" fill="#ffff99"/><rect x="3" y="5" width="1" height="1" fill="#000080"/><rect x="4" y="5" width="1" height="1" fill="#ffff99"/><rect x="5" y="5" width="1" height="1" fill="#000080"/><rect x="6" y="5" width="6" height="1" fill="#ffff99"/><rect x="12" y="5" width="1" height="1" fill="#000080"/><rect x="13" y="5" width="1" height="1" fill="#ffff99"/><rect x="14" y="5" width="1" height="1" fill="#c8c8d8"/><rect x="1" y="6" width="1" height="1" fill="#808080"/><rect x="2" y="6" width="3" height="1" fill="#ffff99"/><rect x="5" y="6" width="1" height="1" fill="#000080"/><rect x="6" y="6" width="6" height="1" fill="#ffff99"/><rect x="12" y="6" width="1" height="1" fill="#000080"/><rect x="13" y="6" width="1" height="1" fill="#ffff99"/><rect x="14" y="6" width="1" height="1" fill="#c8c8d8"/><rect x="1" y="7" width="1" height="1" fill="#808080"/><rect x="2" y="7" width="3" height="1" fill="#ffff99"/><rect x="5" y="7" width="1" height="1" fill="#000080"/><rect x="6" y="7" width="5" height="1" fill="#ffff99"/><rect x="11" y="7" width="1" height="1" fill="#000080"/><rect x="12" y="7" width="2" height="1" fill="#ffff99"/><rect x="14" y="7" width="1" height="1" fill="#c8c8d8"/><rect x="1" y="8" width="1" height="1" fill="#808080"/><rect x="2" y="8" width="3" height="1" fill="#ffff99"/><rect x="5" y="8" width="1" height="1" fill="#000080"/><rect x="6" y="8" width="4" height="1" fill="#ffff99"/><rect x="10" y="8" width="1" height="1" fill="#000080"/><rect x="11" y="8" width="3" height="1" fill="#ffff99"/><rect x="14" y="8" width="1" height="1" fill="#c8c8d8"/><rect x="1" y="9" width="1" height="1" fill="#808080"/><rect x="2" y="9" width="3" height="1" fill="#ffff99"/><rect x="5" y="9" width="1" height="1" fill="#000080"/><rect x="6" y="9" width="3" height="1" fill="#ffff99"/><rect x="9" y="9" width="1" height="1" fill="#000080"/><rect x="10" y="9" width="4" height="1" fill="#ffff99"/><rect x="14" y="9" width="1" height="1" fill="#c8c8d8"/><rect x="1" y="10" width="1" height="1" fill="#808080"/><rect x="2" y="10" width="3" height="1" fill="#ffff99"/><rect x="5" y="10" width="1" height="1" fill="#000080"/><rect x="6" y="10" width="1" height="1" fill="#ffff99"/><rect x="7" y="10" width="1" height="1" fill="#000080"/><rect x="8" y="10" width="1" height="1" fill="#ffff99"/><rect x="9" y="10" width="4" height="1" fill="#000080"/><rect x="13" y="10" width="1" height="1" fill="#ffff99"/><rect x="14" y="10" width="1" height="1" fill="#c8c8d8"/><rect x="1" y="11" width="1" height="1" fill="#808080"/><rect x="2" y="11" width="12" height="1" fill="#ffff99"/><rect x="2" y="12" width="12" height="1" fill="#ffff99"/><rect x="3" y="13" width="10" height="1" fill="#c8c8d8"/></svg>
<div class="t" style="left:102px;top:160px;">Ограничение состава смеси для холодного двигателя</div>
<div class="dh" style="left:69px;top:184px;width:11px;"></div>
<svg class="ic" style="left:80px;top:176px;" width="16" height="16" viewBox="0 0 16 16" shape-rendering="crispEdges"><rect x="3" y="1" width="10" height="1" fill="#808080"/><rect x="2" y="2" width="12" height="1" fill="#ffff99"/><rect x="1" y="3" width="1" height="1" fill="#808080"/><rect x="2" y="3" width="3" height="1" fill="#ffff99"/><rect x="5" y="3" width="1" height="1" fill="#000080"/><rect x="6" y="3" width="4" height="1" fill="#ffff99"/><rect x="10" y="3" width="2" height="1" fill="#000080"/><rect x="12" y="3" width="2" height="1" fill="#ffff99"/><rect x="14" y="3" width="1" height="1" fill="#c8c8d8"/><rect x="1" y="4" width="1" height="1" fill="#808080"/><rect x="2" y="4" width="2" height="1" fill="#ffff99"/><rect x="4" y="4" width="2" height="1" fill="#000080"/><rect x="6" y="4" width="3" height="1" fill="#ffff99"/><rect x="9" y="4" width="1" height="1" fill="#000080"/><rect x="10" y="4" width="2" height="1" fill="#ffff99"/><rect x="12" y="4" width="1" height="1" fill="#000080"/><rect x="13" y="4" width="1" height="1" fill="#ffff99"/><rect x="14" y="4" width="1" height="1" fill="#c8c8d8"/><rect x="1" y="5" width="1" height="1" fill="#808080"/><rect x="2" y="5" width="1" height="1" fill="#ffff99"/><rect x="3" y="5" width="1" height="1" fill="#000080"/><rect x="4" y="5" width="1" height="1" fill="#ffff99"/><rect x="5" y="5" width="1" height="1" fill="#000080"/><rect x="6" y="5" width="6" height="1" fill="#ffff99"/><rect x="12" y="5" width="1" height="1" fill="#000080"/><rect x="13" y="5" width="1" height="1" fill="#ffff99"/><rect x="14" y="5" width="1" height="1" fill="#c8c8d8"/><rect x="1" y="6" width="1" height="1" fill="#808080"/><rect x="2" y="6" width="3" height="1" fill="#ffff99"/><rect x="5" y="6" width="1" height="1" fill="#000080"/><rect x="6" y="6" width="6" height="1" fill="#ffff99"/><rect x="12" y="6" width="1" height="1" fill="#000080"/><rect x="13" y="6" width="1" height="1" fill="#ffff99"/><rect x="14" y="6" width="1" height="1" fill="#c8c8d8"/><rect x="1" y="7" width="1" height="1" fill="#808080"/><rect x="2" y="7" width="3" height="1" fill="#ffff99"/><rect x="5" y="7" width="1" height="1" fill="#000080"/><rect x="6" y="7" width="5" height="1" fill="#ffff99"/><rect x="11" y="7" width="1" height="1" fill="#000080"/><rect x="12" y="7" width="2" height="1" fill="#ffff99"/><rect x="14" y="7" width="1" height="1" fill="#c8c8d8"/><rect x="1" y="8" width="1" height="1" fill="#808080"/><rect x="2" y="8" width="3" height="1" fill="#ffff99"/><rect x="5" y="8" width="1" height="1" fill="#000080"/><rect x="6" y="8" width="4" height="1" fill="#ffff99"/><rect x="10" y="8" width="1" height="1" fill="#000080"/><rect x="11" y="8" width="3" height="1" fill="#ffff99"/><rect x="14" y="8" width="1" height="1" fill="#c8c8d8"/><rect x="1" y="9" width="1" height="1" fill="#808080"/><rect x="2" y="9" width="3" height="1" fill="#ffff99"/><rect x="5" y="9" width="1" height="1" fill="#000080"/><rect x="6" y="9" width="3" height="1" fill="#ffff99"/><rect x="9" y="9" width="1" height="1" fill="#000080"/><rect x="10" y="9" width="4" height="1" fill="#ffff99"/><rect x="14" y="9" width="1" height="1" fill="#c8c8d8"/><rect x="1" y="10" width="1" height="1" fill="#808080"/><rect x="2" y="10" width="3" height="1" fill="#ffff99"/><rect x="5" y="10" width="1" height="1" fill="#000080"/><rect x="6" y="10" width="1" height="1" fill="#ffff99"/><rect x="7" y="10" width="1" height="1" fill="#000080"/><rect x="8" y="10" width="1" height="1" fill="#ffff99"/><rect x="9" y="10" width="4" height="1" fill="#000080"/><rect x="13" y="10" width="1" height="1" fill="#ffff99"/><rect x="14" y="10" width="1" height="1" fill="#c8c8d8"/><rect x="1" y="11" width="1" height="1" fill="#808080"/><rect x="2" y="11" width="12" height="1" fill="#ffff99"/><rect x="2" y="12" width="12" height="1" fill="#ffff99"/><rect x="3" y="13" width="10" height="1" fill="#c8c8d8"/></svg>
<div class="t" style="left:102px;top:176px;">Порог прогрева для холодного двигателя</div>
<div class="dh" style="left:69px;top:200px;width:11px;"></div>
<svg class="ic" style="left:80px;top:192px;" width="16" height="16" viewBox="0 0 16 16" shape-rendering="crispEdges"><rect x="3" y="1" width="10" height="1" fill="#808080"/><rect x="2" y="2" width="12" height="1" fill="#ffff99"/><rect x="1" y="3" width="1" height="1" fill="#808080"/><rect x="2" y="3" width="3" height="1" fill="#ffff99"/><rect x="5" y="3" width="1" height="1" fill="#000080"/><rect x="6" y="3" width="4" height="1" fill="#ffff99"/><rect x="10" y="3" width="2" height="1" fill="#000080"/><rect x="12" y="3" width="2" height="1" fill="#ffff99"/><rect x="14" y="3" width="1" height="1" fill="#c8c8d8"/><rect x="1" y="4" width="1" height="1" fill="#808080"/><rect x="2" y="4" width="2" height="1" fill="#ffff99"/><rect x="4" y="4" width="2" height="1" fill="#000080"/><rect x="6" y="4" width="3" height="1" fill="#ffff99"/><rect x="9" y="4" width="1" height="1" fill="#000080"/><rect x="10" y="4" width="2" height="1" fill="#ffff99"/><rect x="12" y="4" width="1" height="1" fill="#000080"/><rect x="13" y="4" width="1" height="1" fill="#ffff99"/><rect x="14" y="4" width="1" height="1" fill="#c8c8d8"/><rect x="1" y="5" width="1" height="1" fill="#808080"/><rect x="2" y="5" width="1" height="1" fill="#ffff99"/><rect x="3" y="5" width="1" height="1" fill="#000080"/><rect x="4" y="5" width="1" height="1" fill="#ffff99"/><rect x="5" y="5" width="1" height="1" fill="#000080"/><rect x="6" y="5" width="6" height="1" fill="#ffff99"/><rect x="12" y="5" width="1" height="1" fill="#000080"/><rect x="13" y="5" width="1" height="1" fill="#ffff99"/><rect x="14" y="5" width="1" height="1" fill="#c8c8d8"/><rect x="1" y="6" width="1" height="1" fill="#808080"/><rect x="2" y="6" width="3" height="1" fill="#ffff99"/><rect x="5" y="6" width="1" height="1" fill="#000080"/><rect x="6" y="6" width="6" height="1" fill="#ffff99"/><rect x="12" y="6" width="1" height="1" fill="#000080"/><rect x="13" y="6" width="1" height="1" fill="#ffff99"/><rect x="14" y="6" width="1" height="1" fill="#c8c8d8"/><rect x="1" y="7" width="1" height="1" fill="#808080"/><rect x="2" y="7" width="3" height="1" fill="#ffff99"/><rect x="5" y="7" width="1" height="1" fill="#000080"/><rect x="6" y="7" width="5" height="1" fill="#ffff99"/><rect x="11" y="7" width="1" height="1" fill="#000080"/><rect x="12" y="7" width="2" height="1" fill="#ffff99"/><rect x="14" y="7" width="1" height="1" fill="#c8c8d8"/><rect x="1" y="8" width="1" height="1" fill="#808080"/><rect x="2" y="8" width="3" height="1" fill="#ffff99"/><rect x="5" y="8" width="1" height="1" fill="#000080"/><rect x="6" y="8" width="4" height="1" fill="#ffff99"/><rect x="10" y="8" width="1" height="1" fill="#000080"/><rect x="11" y="8" width="3" height="1" fill="#ffff99"/><rect x="14" y="8" width="1" height="1" fill="#c8c8d8"/><rect x="1" y="9" width="1" height="1" fill="#808080"/><rect x="2" y="9" width="3" height="1" fill="#ffff99"/><rect x="5" y="9" width="1" height="1" fill="#000080"/><rect x="6" y="9" width="3" height="1" fill="#ffff99"/><rect x="9" y="9" width="1" height="1" fill="#000080"/><rect x="10" y="9" width="4" height="1" fill="#ffff99"/><rect x="14" y="9" width="1" height="1" fill="#c8c8d8"/><rect x="1" y="10" width="1" height="1" fill="#808080"/><rect x="2" y="10" width="3" height="1" fill="#ffff99"/><rect x="5" y="10" width="1" height="1" fill="#000080"/><rect x="6" y="10" width="1" height="1" fill="#ffff99"/><rect x="7" y="10" width="1" height="1" fill="#000080"/><rect x="8" y="10" width="1" height="1" fill="#ffff99"/><rect x="9" y="10" width="4" height="1" fill="#000080"/><rect x="13" y="10" width="1" height="1" fill="#ffff99"/><rect x="14" y="10" width="1" height="1" fill="#c8c8d8"/><rect x="1" y="11" width="1" height="1" fill="#808080"/><rect x="2" y="11" width="12" height="1" fill="#ffff99"/><rect x="2" y="12" width="12" height="1" fill="#ffff99"/><rect x="3" y="13" width="10" height="1" fill="#c8c8d8"/></svg>
<div class="t" style="left:102px;top:192px;">Порог прогрева для горячего двигателя</div>
<div class="dh" style="left:73px;top:216px;width:7px;"></div>
<div class="a" style="left:64px;top:212px;width:9px;height:9px;background:#808080;"></div>
<div class="a" style="left:65px;top:213px;width:7px;height:7px;background:#fff;"></div>
<div class="a" style="left:66px;top:216px;width:5px;height:1px;background:#000;"></div>
<svg class="ic" style="left:80px;top:208px;" width="16" height="16" viewBox="0 0 16 16" shape-rendering="crispEdges"><rect x="4" y="1" width="3" height="1" fill="#808080"/><rect x="3" y="2" width="1" height="1" fill="#808080"/><rect x="4" y="2" width="3" height="1" fill="#fff"/><rect x="7" y="2" width="1" height="1" fill="#808080"/><rect x="2" y="3" width="1" height="1" fill="#808080"/><rect x="3" y="3" width="2" height="1" fill="#fff"/><rect x="5" y="3" width="1" height="1" fill="#ffff00"/><rect x="6" y="3" width="2" height="1" fill="#fff"/><rect x="8" y="3" width="6" height="1" fill="#808080"/><rect x="2" y="4" width="1" height="1" fill="#808080"/><rect x="3" y="4" width="1" height="1" fill="#fff"/><rect x="4" y="4" width="1" height="1" fill="#ffff00"/><rect x="5" y="4" width="1" height="1" fill="#fff"/><rect x="6" y="4" width="1" height="1" fill="#ffff00"/><rect x="7" y="4" width="7" height="1" fill="#fff"/><rect x="14" y="4" width="1" height="1" fill="#000"/><rect x="2" y="5" width="1" height="1" fill="#808080"/><rect x="3" y="5" width="2" height="1" fill="#fff"/><rect x="5" y="5" width="1" height="1" fill="#ffff00"/><rect x="6" y="5" width="1" height="1" fill="#fff"/><rect x="7" y="5" width="1" height="1" fill="#ffff00"/><rect x="8" y="5" width="1" height="1" fill="#fff"/><rect x="9" y="5" width="1" height="1" fill="#ffff00"/><rect x="10" y="5" width="1" height="1" fill="#fff"/><rect x="11" y="5" width="1" height="1" fill="#ffff00"/><rect x="12" y="5" width="2" height="1" fill="#fff"/><rect x="14" y="5" width="1" height="1" fill="#000"/><rect x="1" y="6" width="10" height="1" fill="#808080"/><rect x="11" y="6" width="1" height="1" fill="#000"/><rect x="12" y="6" width="1" height="1" fill="#ffff00"/><rect x="13" y="6" width="1" height="1" fill="#fff"/><rect x="14" y="6" width="1" height="1" fill="#000"/><rect x="1" y="7" width="1" height="1" fill="#808080"/><rect x="2" y="7" width="1" height="1" fill="#fff"/><rect x="3" y="7" width="1" height="1" fill="#ffff00"/><rect x="4" y="7" width="1" height="1" fill="#fff"/><rect x="5" y="7" width="1" height="1" fill="#ffff00"/><rect x="6" y="7" width="1" height="1" fill="#fff"/><rect x="7" y="7" width="1" height="1" fill="#ffff00"/><rect x="8" y="7" width="1" height="1" fill="#fff"/><rect x="9" y="7" width="1" height="1" fill="#ffff00"/><rect x="10" y="7" width="1" height="1" fill="#fff"/><rect x="11" y="7" width="1" height="1" fill="#000"/><rect x="12" y="7" width="1" height="1" fill="#fff"/><rect x="13" y="7" width="1" height="1" fill="#ffff00"/><rect x="14" y="7" width="1" height="1" fill="#000"/><rect x="1" y="8" width="2" height="1" fill="#808080"/><rect x="3" y="8" width="1" height="1" fill="#fff"/><rect x="4" y="8" width="1" height="1" fill="#ffff00"/><rect x="5" y="8" width="1" height="1" fill="#fff"/><rect x="6" y="8" width="1" height="1" fill="#ffff00"/><rect x="7" y="8" width="1" height="1" fill="#fff"/><rect x="8" y="8" width="1" height="1" fill="#ffff00"/><rect x="9" y="8" width="1" height="1" fill="#fff"/><rect x="10" y="8" width="1" height="1" fill="#ffff00"/><rect x="11" y="8" width="2" height="1" fill="#000"/><rect x="13" y="8" width="1" height="1" fill="#fff"/><rect x="14" y="8" width="1" height="1" fill="#000"/><rect x="2" y="9" width="1" height="1" fill="#808080"/><rect x="3" y="9" width="1" height="1" fill="#ffff00"/><rect x="4" y="9" width="1" height="1" fill="#fff"/><rect x="5" y="9" width="1" height="1" fill="#ffff00"/><rect x="6" y="9" width="1" height="1" fill="#fff"/><rect x="7" y="9" width="1" height="1" fill="#ffff00"/><rect x="8" y="9" width="1" height="1" fill="#fff"/><rect x="9" y="9" width="1" height="1" fill="#ffff00"/><rect x="10" y="9" width="1" height="1" fill="#fff"/><rect x="11" y="9" width="1" height="1" fill="#ffff00"/><rect x="12" y="9" width="1" height="1" fill="#000"/><rect x="13" y="9" width="1" height="1" fill="#ffff00"/><rect x="14" y="9" width="1" height="1" fill="#000"/><rect x="2" y="10" width="1" height="1" fill="#808080"/><rect x="3" y="10" width="1" height="1" fill="#fff"/><rect x="4" y="10" width="1" height="1" fill="#ffff00"/><rect x="5" y="10" width="1" height="1" fill="#fff"/><rect x="6" y="10" width="1" height="1" fill="#ffff00"/><rect x="7" y="10" width="1" height="1" fill="#fff"/><rect x="8" y="10" width="1" height="1" fill="#ffff00"/><rect x="9" y="10" width="1" height="1" fill="#fff"/><rect x="10" y="10" width="1" height="1" fill="#ffff00"/><rect x="11" y="10" width="1" height="1" fill="#fff"/><rect x="12" y="10" width="3" height="1" fill="#000"/><rect x="2" y="11" width="2" height="1" fill="#808080"/><rect x="4" y="11" width="1" height="1" fill="#fff"/><rect x="5" y="11" width="1" height="1" fill="#ffff00"/><rect x="6" y="11" width="1" height="1" fill="#fff"/><rect x="7" y="11" width="1" height="1" fill="#ffff00"/><rect x="8" y="11" width="1" height="1" fill="#fff"/><rect x="9" y="11" width="1" height="1" fill="#ffff00"/><rect x="10" y="11" width="1" height="1" fill="#fff"/><rect x="11" y="11" width="1" height="1" fill="#ffff00"/><rect x="12" y="11" width="1" height="1" fill="#fff"/><rect x="13" y="11" width="2" height="1" fill="#000"/><rect x="3" y="12" width="10" height="1" fill="#808080"/><rect x="13" y="12" width="2" height="1" fill="#000"/><rect x="4" y="13" width="11" height="1" fill="#000"/></svg>
<div class="t" style="left:102px;top:208px;">Прогрев двигателя</div>
<div class="dh" style="left:89px;top:232px;width:11px;"></div>
<svg class="ic" style="left:100px;top:224px;" width="16" height="16" viewBox="0 0 16 16" shape-rendering="crispEdges"><rect x="3" y="1" width="10" height="1" fill="#808080"/><rect x="2" y="2" width="12" height="1" fill="#ffff99"/><rect x="1" y="3" width="1" height="1" fill="#808080"/><rect x="2" y="3" width="3" height="1" fill="#ffff99"/><rect x="5" y="3" width="1" height="1" fill="#000080"/><rect x="6" y="3" width="4" height="1" fill="#ffff99"/><rect x="10" y="3" width="2" height="1" fill="#000080"/><rect x="12" y="3" width="2" height="1" fill="#ffff99"/><rect x="14" y="3" width="1" height="1" fill="#c8c8d8"/><rect x="1" y="4" width="1" height="1" fill="#808080"/><rect x="2" y="4" width="2" height="1" fill="#ffff99"/><rect x="4" y="4" width="2" height="1" fill="#000080"/><rect x="6" y="4" width="3" height="1" fill="#ffff99"/><rect x="9" y="4" width="1" height="1" fill="#000080"/><rect x="10" y="4" width="2" height="1" fill="#ffff99"/><rect x="12" y="4" width="1" height="1" fill="#000080"/><rect x="13" y="4" width="1" height="1" fill="#ffff99"/><rect x="14" y="4" width="1" height="1" fill="#c8c8d8"/><rect x="1" y="5" width="1" height="1" fill="#808080"/><rect x="2" y="5" width="1" height="1" fill="#ffff99"/><rect x="3" y="5" width="1" height="1" fill="#000080"/><rect x="4" y="5" width="1" height="1" fill="#ffff99"/><rect x="5" y="5" width="1" height="1" fill="#000080"/><rect x="6" y="5" width="6" height="1" fill="#ffff99"/><rect x="12" y="5" width="1" height="1" fill="#000080"/><rect x="13" y="5" width="1" height="1" fill="#ffff99"/><rect x="14" y="5" width="1" height="1" fill="#c8c8d8"/><rect x="1" y="6" width="1" height="1" fill="#808080"/><rect x="2" y="6" width="3" height="1" fill="#ffff99"/><rect x="5" y="6" width="1" height="1" fill="#000080"/><rect x="6" y="6" width="6" height="1" fill="#ffff99"/><rect x="12" y="6" width="1" height="1" fill="#000080"/><rect x="13" y="6" width="1" height="1" fill="#ffff99"/><rect x="14" y="6" width="1" height="1" fill="#c8c8d8"/><rect x="1" y="7" width="1" height="1" fill="#808080"/><rect x="2" y="7" width="3" height="1" fill="#ffff99"/><rect x="5" y="7" width="1" height="1" fill="#000080"/><rect x="6" y="7" width="5" height="1" fill="#ffff99"/><rect x="11" y="7" width="1" height="1" fill="#000080"/><rect x="12" y="7" width="2" height="1" fill="#ffff99"/><rect x="14" y="7" width="1" height="1" fill="#c8c8d8"/><rect x="1" y="8" width="1" height="1" fill="#808080"/><rect x="2" y="8" width="3" height="1" fill="#ffff99"/><rect x="5" y="8" width="1" height="1" fill="#000080"/><rect x="6" y="8" width="4" height="1" fill="#ffff99"/><rect x="10" y="8" width="1" height="1" fill="#000080"/><rect x="11" y="8" width="3" height="1" fill="#ffff99"/><rect x="14" y="8" width="1" height="1" fill="#c8c8d8"/><rect x="1" y="9" width="1" height="1" fill="#808080"/><rect x="2" y="9" width="3" height="1" fill="#ffff99"/><rect x="5" y="9" width="1" height="1" fill="#000080"/><rect x="6" y="9" width="3" height="1" fill="#ffff99"/><rect x="9" y="9" width="1" height="1" fill="#000080"/><rect x="10" y="9" width="4" height="1" fill="#ffff99"/><rect x="14" y="9" width="1" height="1" fill="#c8c8d8"/><rect x="1" y="10" width="1" height="1" fill="#808080"/><rect x="2" y="10" width="3" height="1" fill="#ffff99"/><rect x="5" y="10" width="1" height="1" fill="#000080"/><rect x="6" y="10" width="1" height="1" fill="#ffff99"/><rect x="7" y="10" width="1" height="1" fill="#000080"/><rect x="8" y="10" width="1" height="1" fill="#ffff99"/><rect x="9" y="10" width="4" height="1" fill="#000080"/><rect x="13" y="10" width="1" height="1" fill="#ffff99"/><rect x="14" y="10" width="1" height="1" fill="#c8c8d8"/><rect x="1" y="11" width="1" height="1" fill="#808080"/><rect x="2" y="11" width="12" height="1" fill="#ffff99"/><rect x="2" y="12" width="12" height="1" fill="#ffff99"/><rect x="3" y="13" width="10" height="1" fill="#c8c8d8"/></svg>
<div class="t" style="left:122px;top:224px;">Температура окончания прогрева</div>
<div class="dh" style="left:89px;top:248px;width:11px;"></div>
<svg class="ic" style="left:100px;top:240px;" width="16" height="16" viewBox="0 0 16 16" shape-rendering="crispEdges"><rect x="7" y="1" width="5" height="1" fill="#000"/><rect x="2" y="2" width="1" height="1" fill="#fff"/><rect x="7" y="2" width="1" height="1" fill="#000"/><rect x="8" y="2" width="3" height="1" fill="#ffff00"/><rect x="11" y="2" width="1" height="1" fill="#000"/><rect x="1" y="3" width="1" height="1" fill="#000"/><rect x="2" y="3" width="1" height="1" fill="#fff"/><rect x="7" y="3" width="1" height="1" fill="#000"/><rect x="8" y="3" width="3" height="1" fill="#ffff00"/><rect x="11" y="3" width="4" height="1" fill="#000"/><rect x="1" y="4" width="1" height="1" fill="#000"/><rect x="2" y="4" width="1" height="1" fill="#fff"/><rect x="7" y="4" width="1" height="1" fill="#000"/><rect x="8" y="4" width="3" height="1" fill="#ffff00"/><rect x="11" y="4" width="4" height="1" fill="#000"/><rect x="1" y="5" width="1" height="1" fill="#000"/><rect x="2" y="5" width="1" height="1" fill="#fff"/><rect x="3" y="5" width="5" height="1" fill="#000"/><rect x="8" y="5" width="3" height="1" fill="#ffff00"/><rect x="11" y="5" width="1" height="1" fill="#000"/><rect x="12" y="5" width="2" height="1" fill="#ff0000"/><rect x="14" y="5" width="1" height="1" fill="#000"/><rect x="1" y="6" width="1" height="1" fill="#000"/><rect x="2" y="6" width="1" height="1" fill="#fff"/><rect x="3" y="6" width="1" height="1" fill="#000"/><rect x="4" y="6" width="3" height="1" fill="#0000ff"/><rect x="7" y="6" width="1" height="1" fill="#000"/><rect x="8" y="6" width="3" height="1" fill="#ffff00"/><rect x="11" y="6" width="1" height="1" fill="#000"/><rect x="12" y="6" width="2" height="1" fill="#ff0000"/><rect x="14" y="6" width="1" height="1" fill="#000"/><rect x="1" y="7" width="1" height="1" fill="#000"/><rect x="2" y="7" width="1" height="1" fill="#fff"/><rect x="3" y="7" width="1" height="1" fill="#000"/><rect x="4" y="7" width="3" height="1" fill="#0000ff"/><rect x="7" y="7" width="1" height="1" fill="#000"/><rect x="8" y="7" width="3" height="1" fill="#ffff00"/><rect x="11" y="7" width="1" height="1" fill="#000"/><rect x="12" y="7" width="2" height="1" fill="#ff0000"/><rect x="14" y="7" width="1" height="1" fill="#000"/><rect x="1" y="8" width="1" height="1" fill="#000"/><rect x="2" y="8" width="1" height="1" fill="#fff"/><rect x="3" y="8" width="1" height="1" fill="#000"/><rect x="4" y="8" width="3" height="1" fill="#0000ff"/><rect x="7" y="8" width="1" height="1" fill="#000"/><rect x="8" y="8" width="3" height="1" fill="#ffff00"/><rect x="11" y="8" width="1" height="1" fill="#000"/><rect x="12" y="8" width="2" height="1" fill="#ff0000"/><rect x="14" y="8" width="1" height="1" fill="#000"/><rect x="1" y="9" width="1" height="1" fill="#000"/><rect x="2" y="9" width="1" height="1" fill="#fff"/><rect x="3" y="9" width="1" height="1" fill="#000"/><rect x="4" y="9" width="3" height="1" fill="#0000ff"/><rect x="7" y="9" width="1" height="1" fill="#000"/><rect x="8" y="9" width="3" height="1" fill="#ffff00"/><rect x="11" y="9" width="1" height="1" fill="#000"/><rect x="12" y="9" width="2" height="1" fill="#ff0000"/><rect x="14" y="9" width="1" height="1" fill="#000"/><rect x="1" y="10" width="1" height="1" fill="#000"/><rect x="2" y="10" width="1" height="1" fill="#fff"/><rect x="3" y="10" width="1" height="1" fill="#000"/><rect x="4" y="10" width="3" height="1" fill="#0000ff"/><rect x="7" y="10" width="1" height="1" fill="#000"/><rect x="8" y="10" width="3" height="1" fill="#ffff00"/><rect x="11" y="10" width="1" height="1" fill="#000"/><rect x="12" y="10" width="2" height="1" fill="#ff0000"/><rect x="14" y="10" width="1" height="1" fill="#000"/><rect x="1" y="11" width="1" height="1" fill="#000"/><rect x="2" y="11" width="1" height="1" fill="#fff"/><rect x="3" y="11" width="1" height="1" fill="#000"/><rect x="4" y="11" width="3" height="1" fill="#0000ff"/><rect x="7" y="11" width="1" height="1" fill="#000"/><rect x="8" y="11" width="3" height="1" fill="#ffff00"/><rect x="11" y="11" width="1" height="1" fill="#000"/><rect x="12" y="11" width="2" height="1" fill="#ff0000"/><rect x="14" y="11" width="1" height="1" fill="#000"/><rect x="1" y="12" width="1" height="1" fill="#000"/><rect x="2" y="12" width="1" height="1" fill="#fff"/><rect x="3" y="12" width="12" height="1" fill="#000"/><rect x="1" y="13" width="1" height="1" fill="#000"/><rect x="2" y="13" width="12" height="1" fill="#fff"/><rect x="1" y="14" width="14" height="1" fill="#000"/></svg>
<div class="t" style="left:122px;top:240px;">Состав смеси при прогреве</div>
<div class="dh" style="left:73px;top:264px;width:7px;"></div>
<div class="a" style="left:64px;top:260px;width:9px;height:9px;background:#808080;"></div>
<div class="a" style="left:65px;top:261px;width:7px;height:7px;background:#fff;"></div>
<div class="a" style="left:66px;top:264px;width:5px;height:1px;background:#000;"></div>
<svg class="ic" style="left:80px;top:256px;" width="16" height="16" viewBox="0 0 16 16" shape-rendering="crispEdges"><rect x="4" y="1" width="3" height="1" fill="#808080"/><rect x="3" y="2" width="1" height="1" fill="#808080"/><rect x="4" y="2" width="3" height="1" fill="#fff"/><rect x="7" y="2" width="1" height="1" fill="#808080"/><rect x="2" y="3" width="1" height="1" fill="#808080"/><rect x="3" y="3" width="2" height="1" fill="#fff"/><rect x="5" y="3" width="1" height="1" fill="#ffff00"/><rect x="6" y="3" width="2" height="1" fill="#fff"/><rect x="8" y="3" width="6" height="1" fill="#808080"/><rect x="2" y="4" width="1" height="1" fill="#808080"/><rect x="3" y="4" width="1" height="1" fill="#fff"/><rect x="4" y="4" width="1" height="1" fill="#ffff00"/><rect x="5" y="4" width="1" height="1" fill="#fff"/><rect x="6" y="4" width="1" height="1" fill="#ffff00"/><rect x="7" y="4" width="7" height="1" fill="#fff"/><rect x="14" y="4" width="1" height="1" fill="#000"/><rect x="2" y="5" width="1" height="1" fill="#808080"/><rect x="3" y="5" width="2" height="1" fill="#fff"/><rect x="5" y="5" width="1" height="1" fill="#ffff00"/><rect x="6" y="5" width="1" height="1" fill="#fff"/><rect x="7" y="5" width="1" height="1" fill="#ffff00"/><rect x="8" y="5" width="1" height="1" fill="#fff"/><rect x="9" y="5" width="1" height="1" fill="#ffff00"/><rect x="10" y="5" width="1" height="1" fill="#fff"/><rect x="11" y="5" width="1" height="1" fill="#ffff00"/><rect x="12" y="5" width="2" height="1" fill="#fff"/><rect x="14" y="5" width="1" height="1" fill="#000"/><rect x="1" y="6" width="10" height="1" fill="#808080"/><rect x="11" y="6" width="1" height="1" fill="#000"/><rect x="12" y="6" width="1" height="1" fill="#ffff00"/><rect x="13" y="6" width="1" height="1" fill="#fff"/><rect x="14" y="6" width="1" height="1" fill="#000"/><rect x="1" y="7" width="1" height="1" fill="#808080"/><rect x="2" y="7" width="1" height="1" fill="#fff"/><rect x="3" y="7" width="1" height="1" fill="#ffff00"/><rect x="4" y="7" width="1" height="1" fill="#fff"/><rect x="5" y="7" width="1" height="1" fill="#ffff00"/><rect x="6" y="7" width="1" height="1" fill="#fff"/><rect x="7" y="7" width="1" height="1" fill="#ffff00"/><rect x="8" y="7" width="1" height="1" fill="#fff"/><rect x="9" y="7" width="1" height="1" fill="#ffff00"/><rect x="10" y="7" width="1" height="1" fill="#fff"/><rect x="11" y="7" width="1" height="1" fill="#000"/><rect x="12" y="7" width="1" height="1" fill="#fff"/><rect x="13" y="7" width="1" height="1" fill="#ffff00"/><rect x="14" y="7" width="1" height="1" fill="#000"/><rect x="1" y="8" width="2" height="1" fill="#808080"/><rect x="3" y="8" width="1" height="1" fill="#fff"/><rect x="4" y="8" width="1" height="1" fill="#ffff00"/><rect x="5" y="8" width="1" height="1" fill="#fff"/><rect x="6" y="8" width="1" height="1" fill="#ffff00"/><rect x="7" y="8" width="1" height="1" fill="#fff"/><rect x="8" y="8" width="1" height="1" fill="#ffff00"/><rect x="9" y="8" width="1" height="1" fill="#fff"/><rect x="10" y="8" width="1" height="1" fill="#ffff00"/><rect x="11" y="8" width="2" height="1" fill="#000"/><rect x="13" y="8" width="1" height="1" fill="#fff"/><rect x="14" y="8" width="1" height="1" fill="#000"/><rect x="2" y="9" width="1" height="1" fill="#808080"/><rect x="3" y="9" width="1" height="1" fill="#ffff00"/><rect x="4" y="9" width="1" height="1" fill="#fff"/><rect x="5" y="9" width="1" height="1" fill="#ffff00"/><rect x="6" y="9" width="1" height="1" fill="#fff"/><rect x="7" y="9" width="1" height="1" fill="#ffff00"/><rect x="8" y="9" width="1" height="1" fill="#fff"/><rect x="9" y="9" width="1" height="1" fill="#ffff00"/><rect x="10" y="9" width="1" height="1" fill="#fff"/><rect x="11" y="9" width="1" height="1" fill="#ffff00"/><rect x="12" y="9" width="1" height="1" fill="#000"/><rect x="13" y="9" width="1" height="1" fill="#ffff00"/><rect x="14" y="9" width="1" height="1" fill="#000"/><rect x="2" y="10" width="1" height="1" fill="#808080"/><rect x="3" y="10" width="1" height="1" fill="#fff"/><rect x="4" y="10" width="1" height="1" fill="#ffff00"/><rect x="5" y="10" width="1" height="1" fill="#fff"/><rect x="6" y="10" width="1" height="1" fill="#ffff00"/><rect x="7" y="10" width="1" height="1" fill="#fff"/><rect x="8" y="10" width="1" height="1" fill="#ffff00"/><rect x="9" y="10" width="1" height="1" fill="#fff"/><rect x="10" y="10" width="1" height="1" fill="#ffff00"/><rect x="11" y="10" width="1" height="1" fill="#fff"/><rect x="12" y="10" width="3" height="1" fill="#000"/><rect x="2" y="11" width="2" height="1" fill="#808080"/><rect x="4" y="11" width="1" height="1" fill="#fff"/><rect x="5" y="11" width="1" height="1" fill="#ffff00"/><rect x="6" y="11" width="1" height="1" fill="#fff"/><rect x="7" y="11" width="1" height="1" fill="#ffff00"/><rect x="8" y="11" width="1" height="1" fill="#fff"/><rect x="9" y="11" width="1" height="1" fill="#ffff00"/><rect x="10" y="11" width="1" height="1" fill="#fff"/><rect x="11" y="11" width="1" height="1" fill="#ffff00"/><rect x="12" y="11" width="1" height="1" fill="#fff"/><rect x="13" y="11" width="2" height="1" fill="#000"/><rect x="3" y="12" width="10" height="1" fill="#808080"/><rect x="13" y="12" width="2" height="1" fill="#000"/><rect x="4" y="13" width="11" height="1" fill="#000"/></svg>
<div class="t" style="left:102px;top:256px;">Перегрев двигателя</div>
<div class="dh" style="left:89px;top:280px;width:11px;"></div>
<svg class="ic" style="left:100px;top:272px;" width="16" height="16" viewBox="0 0 16 16" shape-rendering="crispEdges"><rect x="3" y="1" width="10" height="1" fill="#808080"/><rect x="2" y="2" width="12" height="1" fill="#ffff99"/><rect x="1" y="3" width="1" height="1" fill="#808080"/><rect x="2" y="3" width="3" height="1" fill="#ffff99"/><rect x="5" y="3" width="1" height="1" fill="#000080"/><rect x="6" y="3" width="4" height="1" fill="#ffff99"/><rect x="10" y="3" width="2" height="1" fill="#000080"/><rect x="12" y="3" width="2" height="1" fill="#ffff99"/><rect x="14" y="3" width="1" height="1" fill="#c8c8d8"/><rect x="1" y="4" width="1" height="1" fill="#808080"/><rect x="2" y="4" width="2" height="1" fill="#ffff99"/><rect x="4" y="4" width="2" height="1" fill="#000080"/><rect x="6" y="4" width="3" height="1" fill="#ffff99"/><rect x="9" y="4" width="1" height="1" fill="#000080"/><rect x="10" y="4" width="2" height="1" fill="#ffff99"/><rect x="12" y="4" width="1" height="1" fill="#000080"/><rect x="13" y="4" width="1" height="1" fill="#ffff99"/><rect x="14" y="4" width="1" height="1" fill="#c8c8d8"/><rect x="1" y="5" width="1" height="1" fill="#808080"/><rect x="2" y="5" width="1" height="1" fill="#ffff99"/><rect x="3" y="5" width="1" height="1" fill="#000080"/><rect x="4" y="5" width="1" height="1" fill="#ffff99"/><rect x="5" y="5" width="1" height="1" fill="#000080"/><rect x="6" y="5" width="6" height="1" fill="#ffff99"/><rect x="12" y="5" width="1" height="1" fill="#000080"/><rect x="13" y="5" width="1" height="1" fill="#ffff99"/><rect x="14" y="5" width="1" height="1" fill="#c8c8d8"/><rect x="1" y="6" width="1" height="1" fill="#808080"/><rect x="2" y="6" width="3" height="1" fill="#ffff99"/><rect x="5" y="6" width="1" height="1" fill="#000080"/><rect x="6" y="6" width="6" height="1" fill="#ffff99"/><rect x="12" y="6" width="1" height="1" fill="#000080"/><rect x="13" y="6" width="1" height="1" fill="#ffff99"/><rect x="14" y="6" width="1" height="1" fill="#c8c8d8"/><rect x="1" y="7" width="1" height="1" fill="#808080"/><rect x="2" y="7" width="3" height="1" fill="#ffff99"/><rect x="5" y="7" width="1" height="1" fill="#000080"/><rect x="6" y="7" width="5" height="1" fill="#ffff99"/><rect x="11" y="7" width="1" height="1" fill="#000080"/><rect x="12" y="7" width="2" height="1" fill="#ffff99"/><rect x="14" y="7" width="1" height="1" fill="#c8c8d8"/><rect x="1" y="8" width="1" height="1" fill="#808080"/><rect x="2" y="8" width="3" height="1" fill="#ffff99"/><rect x="5" y="8" width="1" height="1" fill="#000080"/><rect x="6" y="8" width="4" height="1" fill="#ffff99"/><rect x="10" y="8" width="1" height="1" fill="#000080"/><rect x="11" y="8" width="3" height="1" fill="#ffff99"/><rect x="14" y="8" width="1" height="1" fill="#c8c8d8"/><rect x="1" y="9" width="1" height="1" fill="#808080"/><rect x="2" y="9" width="3" height="1" fill="#ffff99"/><rect x="5" y="9" width="1" height="1" fill="#000080"/><rect x="6" y="9" width="3" height="1" fill="#ffff99"/><rect x="9" y="9" width="1" height="1" fill="#000080"/><rect x="10" y="9" width="4" height="1" fill="#ffff99"/><rect x="14" y="9" width="1" height="1" fill="#c8c8d8"/><rect x="1" y="10" width="1" height="1" fill="#808080"/><rect x="2" y="10" width="3" height="1" fill="#ffff99"/><rect x="5" y="10" width="1" height="1" fill="#000080"/><rect x="6" y="10" width="1" height="1" fill="#ffff99"/><rect x="7" y="10" width="1" height="1" fill="#000080"/><rect x="8" y="10" width="1" height="1" fill="#ffff99"/><rect x="9" y="10" width="4" height="1" fill="#000080"/><rect x="13" y="10" width="1" height="1" fill="#ffff99"/><rect x="14" y="10" width="1" height="1" fill="#c8c8d8"/><rect x="1" y="11" width="1" height="1" fill="#808080"/><rect x="2" y="11" width="12" height="1" fill="#ffff99"/><rect x="2" y="12" width="12" height="1" fill="#ffff99"/><rect x="3" y="13" width="10" height="1" fill="#c8c8d8"/></svg>
<div class="t" style="left:122px;top:272px;">Состав при перегреве двигателя</div>
<div class="dh" style="left:89px;top:296px;width:11px;"></div>
<svg class="ic" style="left:100px;top:288px;" width="16" height="16" viewBox="0 0 16 16" shape-rendering="crispEdges"><rect x="3" y="1" width="10" height="1" fill="#808080"/><rect x="2" y="2" width="12" height="1" fill="#ffff99"/><rect x="1" y="3" width="1" height="1" fill="#808080"/><rect x="2" y="3" width="3" height="1" fill="#ffff99"/><rect x="5" y="3" width="1" height="1" fill="#000080"/><rect x="6" y="3" width="4" height="1" fill="#ffff99"/><rect x="10" y="3" width="2" height="1" fill="#000080"/><rect x="12" y="3" width="2" height="1" fill="#ffff99"/><rect x="14" y="3" width="1" height="1" fill="#c8c8d8"/><rect x="1" y="4" width="1" height="1" fill="#808080"/><rect x="2" y="4" width="2" height="1" fill="#ffff99"/><rect x="4" y="4" width="2" height="1" fill="#000080"/><rect x="6" y="4" width="3" height="1" fill="#ffff99"/><rect x="9" y="4" width="1" height="1" fill="#000080"/><rect x="10" y="4" width="2" height="1" fill="#ffff99"/><rect x="12" y="4" width="1" height="1" fill="#000080"/><rect x="13" y="4" width="1" height="1" fill="#ffff99"/><rect x="14" y="4" width="1" height="1" fill="#c8c8d8"/><rect x="1" y="5" width="1" height="1" fill="#808080"/><rect x="2" y="5" width="1" height="1" fill="#ffff99"/><rect x="3" y="5" width="1" height="1" fill="#000080"/><rect x="4" y="5" width="1" height="1" fill="#ffff99"/><rect x="5" y="5" width="1" height="1" fill="#000080"/><rect x="6" y="5" width="6" height="1" fill="#ffff99"/><rect x="12" y="5" width="1" height="1" fill="#000080"/><rect x="13" y="5" width="1" height="1" fill="#ffff99"/><rect x="14" y="5" width="1" height="1" fill="#c8c8d8"/><rect x="1" y="6" width="1" height="1" fill="#808080"/><rect x="2" y="6" width="3" height="1" fill="#ffff99"/><rect x="5" y="6" width="1" height="1" fill="#000080"/><rect x="6" y="6" width="6" height="1" fill="#ffff99"/><rect x="12" y="6" width="1" height="1" fill="#000080"/><rect x="13" y="6" width="1" height="1" fill="#ffff99"/><rect x="14" y="6" width="1" height="1" fill="#c8c8d8"/><rect x="1" y="7" width="1" height="1" fill="#808080"/><rect x="2" y="7" width="3" height="1" fill="#ffff99"/><rect x="5" y="7" width="1" height="1" fill="#000080"/><rect x="6" y="7" width="5" height="1" fill="#ffff99"/><rect x="11" y="7" width="1" height="1" fill="#000080"/><rect x="12" y="7" width="2" height="1" fill="#ffff99"/><rect x="14" y="7" width="1" height="1" fill="#c8c8d8"/><rect x="1" y="8" width="1" height="1" fill="#808080"/><rect x="2" y="8" width="3" height="1" fill="#ffff99"/><rect x="5" y="8" width="1" height="1" fill="#000080"/><rect x="6" y="8" width="4" height="1" fill="#ffff99"/><rect x="10" y="8" width="1" height="1" fill="#000080"/><rect x="11" y="8" width="3" height="1" fill="#ffff99"/><rect x="14" y="8" width="1" height="1" fill="#c8c8d8"/><rect x="1" y="9" width="1" height="1" fill="#808080"/><rect x="2" y="9" width="3" height="1" fill="#ffff99"/><rect x="5" y="9" width="1" height="1" fill="#000080"/><rect x="6" y="9" width="3" height="1" fill="#ffff99"/><rect x="9" y="9" width="1" height="1" fill="#000080"/><rect x="10" y="9" width="4" height="1" fill="#ffff99"/><rect x="14" y="9" width="1" height="1" fill="#c8c8d8"/><rect x="1" y="10" width="1" height="1" fill="#808080"/><rect x="2" y="10" width="3" height="1" fill="#ffff99"/><rect x="5" y="10" width="1" height="1" fill="#000080"/><rect x="6" y="10" width="1" height="1" fill="#ffff99"/><rect x="7" y="10" width="1" height="1" fill="#000080"/><rect x="8" y="10" width="1" height="1" fill="#ffff99"/><rect x="9" y="10" width="4" height="1" fill="#000080"/><rect x="13" y="10" width="1" height="1" fill="#ffff99"/><rect x="14" y="10" width="1" height="1" fill="#c8c8d8"/><rect x="1" y="11" width="1" height="1" fill="#808080"/><rect x="2" y="11" width="12" height="1" fill="#ffff99"/><rect x="2" y="12" width="12" height="1" fill="#ffff99"/><rect x="3" y="13" width="10" height="1" fill="#c8c8d8"/></svg>
<div class="t" style="left:122px;top:288px;">Температура перегретого двигателя</div>
<div class="dh" style="left:89px;top:312px;width:11px;"></div>
<svg class="ic" style="left:100px;top:304px;" width="16" height="16" viewBox="0 0 16 16" shape-rendering="crispEdges"><rect x="3" y="1" width="10" height="1" fill="#808080"/><rect x="2" y="2" width="12" height="1" fill="#ffff99"/><rect x="1" y="3" width="1" height="1" fill="#808080"/><rect x="2" y="3" width="3" height="1" fill="#ffff99"/><rect x="5" y="3" width="1" height="1" fill="#000080"/><rect x="6" y="3" width="4" height="1" fill="#ffff99"/><rect x="10" y="3" width="2" height="1" fill="#000080"/><rect x="12" y="3" width="2" height="1" fill="#ffff99"/><rect x="14" y="3" width="1" height="1" fill="#c8c8d8"/><rect x="1" y="4" width="1" height="1" fill="#808080"/><rect x="2" y="4" width="2" height="1" fill="#ffff99"/><rect x="4" y="4" width="2" height="1" fill="#000080"/><rect x="6" y="4" width="3" height="1" fill="#ffff99"/><rect x="9" y="4" width="1" height="1" fill="#000080"/><rect x="10" y="4" width="2" height="1" fill="#ffff99"/><rect x="12" y="4" width="1" height="1" fill="#000080"/><rect x="13" y="4" width="1" height="1" fill="#ffff99"/><rect x="14" y="4" width="1" height="1" fill="#c8c8d8"/><rect x="1" y="5" width="1" height="1" fill="#808080"/><rect x="2" y="5" width="1" height="1" fill="#ffff99"/><rect x="3" y="5" width="1" height="1" fill="#000080"/><rect x="4" y="5" width="1" height="1" fill="#ffff99"/><rect x="5" y="5" width="1" height="1" fill="#000080"/><rect x="6" y="5" width="6" height="1" fill="#ffff99"/><rect x="12" y="5" width="1" height="1" fill="#000080"/><rect x="13" y="5" width="1" height="1" fill="#ffff99"/><rect x="14" y="5" width="1" height="1" fill="#c8c8d8"/><rect x="1" y="6" width="1" height="1" fill="#808080"/><rect x="2" y="6" width="3" height="1" fill="#ffff99"/><rect x="5" y="6" width="1" height="1" fill="#000080"/><rect x="6" y="6" width="6" height="1" fill="#ffff99"/><rect x="12" y="6" width="1" height="1" fill="#000080"/><rect x="13" y="6" width="1" height="1" fill="#ffff99"/><rect x="14" y="6" width="1" height="1" fill="#c8c8d8"/><rect x="1" y="7" width="1" height="1" fill="#808080"/><rect x="2" y="7" width="3" height="1" fill="#ffff99"/><rect x="5" y="7" width="1" height="1" fill="#000080"/><rect x="6" y="7" width="5" height="1" fill="#ffff99"/><rect x="11" y="7" width="1" height="1" fill="#000080"/><rect x="12" y="7" width="2" height="1" fill="#ffff99"/><rect x="14" y="7" width="1" height="1" fill="#c8c8d8"/><rect x="1" y="8" width="1" height="1" fill="#808080"/><rect x="2" y="8" width="3" height="1" fill="#ffff99"/><rect x="5" y="8" width="1" height="1" fill="#000080"/><rect x="6" y="8" width="4" height="1" fill="#ffff99"/><rect x="10" y="8" width="1" height="1" fill="#000080"/><rect x="11" y="8" width="3" height="1" fill="#ffff99"/><rect x="14" y="8" width="1" height="1" fill="#c8c8d8"/><rect x="1" y="9" width="1" height="1" fill="#808080"/><rect x="2" y="9" width="3" height="1" fill="#ffff99"/><rect x="5" y="9" width="1" height="1" fill="#000080"/><rect x="6" y="9" width="3" height="1" fill="#ffff99"/><rect x="9" y="9" width="1" height="1" fill="#000080"/><rect x="10" y="9" width="4" height="1" fill="#ffff99"/><rect x="14" y="9" width="1" height="1" fill="#c8c8d8"/><rect x="1" y="10" width="1" height="1" fill="#808080"/><rect x="2" y="10" width="3" height="1" fill="#ffff99"/><rect x="5" y="10" width="1" height="1" fill="#000080"/><rect x="6" y="10" width="1" height="1" fill="#ffff99"/><rect x="7" y="10" width="1" height="1" fill="#000080"/><rect x="8" y="10" width="1" height="1" fill="#ffff99"/><rect x="9" y="10" width="4" height="1" fill="#000080"/><rect x="13" y="10" width="1" height="1" fill="#ffff99"/><rect x="14" y="10" width="1" height="1" fill="#c8c8d8"/><rect x="1" y="11" width="1" height="1" fill="#808080"/><rect x="2" y="11" width="12" height="1" fill="#ffff99"/><rect x="2" y="12" width="12" height="1" fill="#ffff99"/><rect x="3" y="13" width="10" height="1" fill="#c8c8d8"/></svg>
<div class="t" style="left:122px;top:304px;">Дифферент для отмены _перегрева_</div>
<div class="dh" style="left:53px;top:328px;width:7px;"></div>
<div class="a" style="left:44px;top:324px;width:9px;height:9px;background:#808080;"></div>
<div class="a" style="left:45px;top:325px;width:7px;height:7px;background:#fff;"></div>
<div class="a" style="left:46px;top:328px;width:5px;height:1px;background:#000;"></div>
<svg class="ic" style="left:60px;top:320px;" width="16" height="16" viewBox="0 0 16 16" shape-rendering="crispEdges"><rect x="4" y="1" width="3" height="1" fill="#808080"/><rect x="3" y="2" width="1" height="1" fill="#808080"/><rect x="4" y="2" width="3" height="1" fill="#fff"/><rect x="7" y="2" width="1" height="1" fill="#808080"/><rect x="2" y="3" width="1" height="1" fill="#808080"/><rect x="3" y="3" width="2" height="1" fill="#fff"/><rect x="5" y="3" width="1" height="1" fill="#ffff00"/><rect x="6" y="3" width="2" height="1" fill="#fff"/><rect x="8" y="3" width="6" height="1" fill="#808080"/><rect x="2" y="4" width="1" height="1" fill="#808080"/><rect x="3" y="4" width="1" height="1" fill="#fff"/><rect x="4" y="4" width="1" height="1" fill="#ffff00"/><rect x="5" y="4" width="1" height="1" fill="#fff"/><rect x="6" y="4" width="1" height="1" fill="#ffff00"/><rect x="7" y="4" width="7" height="1" fill="#fff"/><rect x="14" y="4" width="1" height="1" fill="#000"/><rect x="2" y="5" width="1" height="1" fill="#808080"/><rect x="3" y="5" width="2" height="1" fill="#fff"/><rect x="5" y="5" width="1" height="1" fill="#ffff00"/><rect x="6" y="5" width="1" height="1" fill="#fff"/><rect x="7" y="5" width="1" height="1" fill="#ffff00"/><rect x="8" y="5" width="1" height="1" fill="#fff"/><rect x="9" y="5" width="1" height="1" fill="#ffff00"/><rect x="10" y="5" width="1" height="1" fill="#fff"/><rect x="11" y="5" width="1" height="1" fill="#ffff00"/><rect x="12" y="5" width="2" height="1" fill="#fff"/><rect x="14" y="5" width="1" height="1" fill="#000"/><rect x="1" y="6" width="10" height="1" fill="#808080"/><rect x="11" y="6" width="1" height="1" fill="#000"/><rect x="12" y="6" width="1" height="1" fill="#ffff00"/><rect x="13" y="6" width="1" height="1" fill="#fff"/><rect x="14" y="6" width="1" height="1" fill="#000"/><rect x="1" y="7" width="1" height="1" fill="#808080"/><rect x="2" y="7" width="1" height="1" fill="#fff"/><rect x="3" y="7" width="1" height="1" fill="#ffff00"/><rect x="4" y="7" width="1" height="1" fill="#fff"/><rect x="5" y="7" width="1" height="1" fill="#ffff00"/><rect x="6" y="7" width="1" height="1" fill="#fff"/><rect x="7" y="7" width="1" height="1" fill="#ffff00"/><rect x="8" y="7" width="1" height="1" fill="#fff"/><rect x="9" y="7" width="1" height="1" fill="#ffff00"/><rect x="10" y="7" width="1" height="1" fill="#fff"/><rect x="11" y="7" width="1" height="1" fill="#000"/><rect x="12" y="7" width="1" height="1" fill="#fff"/><rect x="13" y="7" width="1" height="1" fill="#ffff00"/><rect x="14" y="7" width="1" height="1" fill="#000"/><rect x="1" y="8" width="2" height="1" fill="#808080"/><rect x="3" y="8" width="1" height="1" fill="#fff"/><rect x="4" y="8" width="1" height="1" fill="#ffff00"/><rect x="5" y="8" width="1" height="1" fill="#fff"/><rect x="6" y="8" width="1" height="1" fill="#ffff00"/><rect x="7" y="8" width="1" height="1" fill="#fff"/><rect x="8" y="8" width="1" height="1" fill="#ffff00"/><rect x="9" y="8" width="1" height="1" fill="#fff"/><rect x="10" y="8" width="1" height="1" fill="#ffff00"/><rect x="11" y="8" width="2" height="1" fill="#000"/><rect x="13" y="8" width="1" height="1" fill="#fff"/><rect x="14" y="8" width="1" height="1" fill="#000"/><rect x="2" y="9" width="1" height="1" fill="#808080"/><rect x="3" y="9" width="1" height="1" fill="#ffff00"/><rect x="4" y="9" width="1" height="1" fill="#fff"/><rect x="5" y="9" width="1" height="1" fill="#ffff00"/><rect x="6" y="9" width="1" height="1" fill="#fff"/><rect x="7" y="9" width="1" height="1" fill="#ffff00"/><rect x="8" y="9" width="1" height="1" fill="#fff"/><rect x="9" y="9" width="1" height="1" fill="#ffff00"/><rect x="10" y="9" width="1" height="1" fill="#fff"/><rect x="11" y="9" width="1" height="1" fill="#ffff00"/><rect x="12" y="9" width="1" height="1" fill="#000"/><rect x="13" y="9" width="1" height="1" fill="#ffff00"/><rect x="14" y="9" width="1" height="1" fill="#000"/><rect x="2" y="10" width="1" height="1" fill="#808080"/><rect x="3" y="10" width="1" height="1" fill="#fff"/><rect x="4" y="10" width="1" height="1" fill="#ffff00"/><rect x="5" y="10" width="1" height="1" fill="#fff"/><rect x="6" y="10" width="1" height="1" fill="#ffff00"/><rect x="7" y="10" width="1" height="1" fill="#fff"/><rect x="8" y="10" width="1" height="1" fill="#ffff00"/><rect x="9" y="10" width="1" height="1" fill="#fff"/><rect x="10" y="10" width="1" height="1" fill="#ffff00"/><rect x="11" y="10" width="1" height="1" fill="#fff"/><rect x="12" y="10" width="3" height="1" fill="#000"/><rect x="2" y="11" width="2" height="1" fill="#808080"/><rect x="4" y="11" width="1" height="1" fill="#fff"/><rect x="5" y="11" width="1" height="1" fill="#ffff00"/><rect x="6" y="11" width="1" height="1" fill="#fff"/><rect x="7" y="11" width="1" height="1" fill="#ffff00"/><rect x="8" y="11" width="1" height="1" fill="#fff"/><rect x="9" y="11" width="1" height="1" fill="#ffff00"/><rect x="10" y="11" width="1" height="1" fill="#fff"/><rect x="11" y="11" width="1" height="1" fill="#ffff00"/><rect x="12" y="11" width="1" height="1" fill="#fff"/><rect x="13" y="11" width="2" height="1" fill="#000"/><rect x="3" y="12" width="10" height="1" fill="#808080"/><rect x="13" y="12" width="2" height="1" fill="#000"/><rect x="4" y="13" width="11" height="1" fill="#000"/></svg>
<div class="t" style="left:82px;top:320px;">Состав смеси в режимах RCO</div>
<div class="dh" style="left:69px;top:344px;width:11px;"></div>
<svg class="ic" style="left:80px;top:336px;" width="16" height="16" viewBox="0 0 16 16" shape-rendering="crispEdges"><rect x="3" y="1" width="10" height="1" fill="#808080"/><rect x="2" y="2" width="12" height="1" fill="#ffff99"/><rect x="1" y="3" width="1" height="1" fill="#808080"/><rect x="2" y="3" width="3" height="1" fill="#ffff99"/><rect x="5" y="3" width="1" height="1" fill="#000080"/><rect x="6" y="3" width="4" height="1" fill="#ffff99"/><rect x="10" y="3" width="2" height="1" fill="#000080"/><rect x="12" y="3" width="2" height="1" fill="#ffff99"/><rect x="14" y="3" width="1" height="1" fill="#c8c8d8"/><rect x="1" y="4" width="1" height="1" fill="#808080"/><rect x="2" y="4" width="2" height="1" fill="#ffff99"/><rect x="4" y="4" width="2" height="1" fill="#000080"/><rect x="6" y="4" width="3" height="1" fill="#ffff99"/><rect x="9" y="4" width="1" height="1" fill="#000080"/><rect x="10" y="4" width="2" height="1" fill="#ffff99"/><rect x="12" y="4" width="1" height="1" fill="#000080"/><rect x="13" y="4" width="1" height="1" fill="#ffff99"/><rect x="14" y="4" width="1" height="1" fill="#c8c8d8"/><rect x="1" y="5" width="1" height="1" fill="#808080"/><rect x="2" y="5" width="1" height="1" fill="#ffff99"/><rect x="3" y="5" width="1" height="1" fill="#000080"/><rect x="4" y="5" width="1" height="1" fill="#ffff99"/><rect x="5" y="5" width="1" height="1" fill="#000080"/><rect x="6" y="5" width="6" height="1" fill="#ffff99"/><rect x="12" y="5" width="1" height="1" fill="#000080"/><rect x="13" y="5" width="1" height="1" fill="#ffff99"/><rect x="14" y="5" width="1" height="1" fill="#c8c8d8"/><rect x="1" y="6" width="1" height="1" fill="#808080"/><rect x="2" y="6" width="3" height="1" fill="#ffff99"/><rect x="5" y="6" width="1" height="1" fill="#000080"/><rect x="6" y="6" width="6" height="1" fill="#ffff99"/><rect x="12" y="6" width="1" height="1" fill="#000080"/><rect x="13" y="6" width="1" height="1" fill="#ffff99"/><rect x="14" y="6" width="1" height="1" fill="#c8c8d8"/><rect x="1" y="7" width="1" height="1" fill="#808080"/><rect x="2" y="7" width="3" height="1" fill="#ffff99"/><rect x="5" y="7" width="1" height="1" fill="#000080"/><rect x="6" y="7" width="5" height="1" fill="#ffff99"/><rect x="11" y="7" width="1" height="1" fill="#000080"/><rect x="12" y="7" width="2" height="1" fill="#ffff99"/><rect x="14" y="7" width="1" height="1" fill="#c8c8d8"/><rect x="1" y="8" width="1" height="1" fill="#808080"/><rect x="2" y="8" width="3" height="1" fill="#ffff99"/><rect x="5" y="8" width="1" height="1" fill="#000080"/><rect x="6" y="8" width="4" height="1" fill="#ffff99"/><rect x="10" y="8" width="1" height="1" fill="#000080"/><rect x="11" y="8" width="3" height="1" fill="#ffff99"/><rect x="14" y="8" width="1" height="1" fill="#c8c8d8"/><rect x="1" y="9" width="1" height="1" fill="#808080"/><rect x="2" y="9" width="3" height="1" fill="#ffff99"/><rect x="5" y="9" width="1" height="1" fill="#000080"/><rect x="6" y="9" width="3" height="1" fill="#ffff99"/><rect x="9" y="9" width="1" height="1" fill="#000080"/><rect x="10" y="9" width="4" height="1" fill="#ffff99"/><rect x="14" y="9" width="1" height="1" fill="#c8c8d8"/><rect x="1" y="10" width="1" height="1" fill="#808080"/><rect x="2" y="10" width="3" height="1" fill="#ffff99"/><rect x="5" y="10" width="1" height="1" fill="#000080"/><rect x="6" y="10" width="1" height="1" fill="#ffff99"/><rect x="7" y="10" width="1" height="1" fill="#000080"/><rect x="8" y="10" width="1" height="1" fill="#ffff99"/><rect x="9" y="10" width="4" height="1" fill="#000080"/><rect x="13" y="10" width="1" height="1" fill="#ffff99"/><rect x="14" y="10" width="1" height="1" fill="#c8c8d8"/><rect x="1" y="11" width="1" height="1" fill="#808080"/><rect x="2" y="11" width="12" height="1" fill="#ffff99"/><rect x="2" y="12" width="12" height="1" fill="#ffff99"/><rect x="3" y="13" width="10" height="1" fill="#c8c8d8"/></svg>
<div class="t" style="left:102px;top:336px;">Температура холодного двигателя</div>
<div class="dh" style="left:69px;top:360px;width:11px;"></div>
<svg class="ic" style="left:80px;top:352px;" width="16" height="16" viewBox="0 0 16 16" shape-rendering="crispEdges"><rect x="7" y="1" width="5" height="1" fill="#000"/><rect x="2" y="2" width="1" height="1" fill="#fff"/><rect x="7" y="2" width="1" height="1" fill="#000"/><rect x="8" y="2" width="3" height="1" fill="#ffff00"/><rect x="11" y="2" width="1" height="1" fill="#000"/><rect x="1" y="3" width="1" height="1" fill="#000"/><rect x="2" y="3" width="1" height="1" fill="#fff"/><rect x="7" y="3" width="1" height="1" fill="#000"/><rect x="8" y="3" width="3" height="1" fill="#ffff00"/><rect x="11" y="3" width="4" height="1" fill="#000"/><rect x="1" y="4" width="1" height="1" fill="#000"/><rect x="2" y="4" width="1" height="1" fill="#fff"/><rect x="7" y="4" width="1" height="1" fill="#000"/><rect x="8" y="4" width="3" height="1" fill="#ffff00"/><rect x="11" y="4" width="4" height="1" fill="#000"/><rect x="1" y="5" width="1" height="1" fill="#000"/><rect x="2" y="5" width="1" height="1" fill="#fff"/><rect x="3" y="5" width="5" height="1" fill="#000"/><rect x="8" y="5" width="3" height="1" fill="#ffff00"/><rect x="11" y="5" width="1" height="1" fill="#000"/><rect x="12" y="5" width="2" height="1" fill="#ff0000"/><rect x="14" y="5" width="1" height="1" fill="#000"/><rect x="1" y="6" width="1" height="1" fill="#000"/><rect x="2" y="6" width="1" height="1" fill="#fff"/><rect x="3" y="6" width="1" height="1" fill="#000"/><rect x="4" y="6" width="3" height="1" fill="#0000ff"/><rect x="7" y="6" width="1" height="1" fill="#000"/><rect x="8" y="6" width="3" height="1" fill="#ffff00"/><rect x="11" y="6" width="1" height="1" fill="#000"/><rect x="12" y="6" width="2" height="1" fill="#ff0000"/><rect x="14" y="6" width="1" height="1" fill="#000"/><rect x="1" y="7" width="1" height="1" fill="#000"/><rect x="2" y="7" width="1" height="1" fill="#fff"/><rect x="3" y="7" width="1" height="1" fill="#000"/><rect x="4" y="7" width="3" height="1" fill="#0000ff"/><rect x="7" y="7" width="1" height="1" fill="#000"/><rect x="8" y="7" width="3" height="1" fill="#ffff00"/><rect x="11" y="7" width="1" height="1" fill="#000"/><rect x="12" y="7" width="2" height="1" fill="#ff0000"/><rect x="14" y="7" width="1" height="1" fill="#000"/><rect x="1" y="8" width="1" height="1" fill="#000"/><rect x="2" y="8" width="1" height="1" fill="#fff"/><rect x="3" y="8" width="1" height="1" fill="#000"/><rect x="4" y="8" width="3" height="1" fill="#0000ff"/><rect x="7" y="8" width="1" height="1" fill="#000"/><rect x="8" y="8" width="3" height="1" fill="#ffff00"/><rect x="11" y="8" width="1" height="1" fill="#000"/><rect x="12" y="8" width="2" height="1" fill="#ff0000"/><rect x="14" y="8" width="1" height="1" fill="#000"/><rect x="1" y="9" width="1" height="1" fill="#000"/><rect x="2" y="9" width="1" height="1" fill="#fff"/><rect x="3" y="9" width="1" height="1" fill="#000"/><rect x="4" y="9" width="3" height="1" fill="#0000ff"/><rect x="7" y="9" width="1" height="1" fill="#000"/><rect x="8" y="9" width="3" height="1" fill="#ffff00"/><rect x="11" y="9" width="1" height="1" fill="#000"/><rect x="12" y="9" width="2" height="1" fill="#ff0000"/><rect x="14" y="9" width="1" height="1" fill="#000"/><rect x="1" y="10" width="1" height="1" fill="#000"/><rect x="2" y="10" width="1" height="1" fill="#fff"/><rect x="3" y="10" width="1" height="1" fill="#000"/><rect x="4" y="10" width="3" height="1" fill="#0000ff"/><rect x="7" y="10" width="1" height="1" fill="#000"/><rect x="8" y="10" width="3" height="1" fill="#ffff00"/><rect x="11" y="10" width="1" height="1" fill="#000"/><rect x="12" y="10" width="2" height="1" fill="#ff0000"/><rect x="14" y="10" width="1" height="1" fill="#000"/><rect x="1" y="11" width="1" height="1" fill="#000"/><rect x="2" y="11" width="1" height="1" fill="#fff"/><rect x="3" y="11" width="1" height="1" fill="#000"/><rect x="4" y="11" width="3" height="1" fill="#0000ff"/><rect x="7" y="11" width="1" height="1" fill="#000"/><rect x="8" y="11" width="3" height="1" fill="#ffff00"/><rect x="11" y="11" width="1" height="1" fill="#000"/><rect x="12" y="11" width="2" height="1" fill="#ff0000"/><rect x="14" y="11" width="1" height="1" fill="#000"/><rect x="1" y="12" width="1" height="1" fill="#000"/><rect x="2" y="12" width="1" height="1" fill="#fff"/><rect x="3" y="12" width="12" height="1" fill="#000"/><rect x="1" y="13" width="1" height="1" fill="#000"/><rect x="2" y="13" width="12" height="1" fill="#fff"/><rect x="1" y="14" width="14" height="1" fill="#000"/></svg>
<div class="t" style="left:102px;top:352px;">Состав смеси холодного двигателя</div>
<div class="dh" style="left:69px;top:376px;width:11px;"></div>
<svg class="ic" style="left:80px;top:368px;" width="16" height="16" viewBox="0 0 16 16" shape-rendering="crispEdges"><rect x="3" y="1" width="10" height="1" fill="#808080"/><rect x="2" y="2" width="1" height="1" fill="#808080"/><rect x="3" y="2" width="1" height="1" fill="#c0c0c0"/><rect x="4" y="2" width="2" height="1" fill="#ffff99"/><rect x="6" y="2" width="1" height="1" fill="#c0c0c0"/><rect x="7" y="2" width="2" height="1" fill="#ffff99"/><rect x="9" y="2" width="1" height="1" fill="#c0c0c0"/><rect x="10" y="2" width="2" height="1" fill="#ffff99"/><rect x="12" y="2" width="1" height="1" fill="#c0c0c0"/><rect x="13" y="2" width="1" height="1" fill="#808080"/><rect x="1" y="3" width="1" height="1" fill="#808080"/><rect x="2" y="3" width="12" height="1" fill="#c0c0c0"/><rect x="14" y="3" width="1" height="1" fill="#808080"/><rect x="1" y="4" width="1" height="1" fill="#808080"/><rect x="2" y="4" width="1" height="1" fill="#ffff99"/><rect x="3" y="4" width="1" height="1" fill="#c0c0c0"/><rect x="4" y="4" width="2" height="1" fill="#ffff99"/><rect x="6" y="4" width="1" height="1" fill="#c0c0c0"/><rect x="7" y="4" width="2" height="1" fill="#ffff99"/><rect x="9" y="4" width="1" height="1" fill="#c0c0c0"/><rect x="10" y="4" width="2" height="1" fill="#ffff99"/><rect x="12" y="4" width="1" height="1" fill="#c0c0c0"/><rect x="13" y="4" width="1" height="1" fill="#ffff99"/><rect x="14" y="4" width="1" height="1" fill="#808080"/><rect x="1" y="5" width="1" height="1" fill="#808080"/><rect x="2" y="5" width="1" height="1" fill="#ffff99"/><rect x="3" y="5" width="1" height="1" fill="#c0c0c0"/><rect x="4" y="5" width="2" height="1" fill="#ffff99"/><rect x="6" y="5" width="1" height="1" fill="#c0c0c0"/><rect x="7" y="5" width="2" height="1" fill="#ffff99"/><rect x="9" y="5" width="1" height="1" fill="#c0c0c0"/><rect x="10" y="5" width="2" height="1" fill="#ffff99"/><rect x="12" y="5" width="1" height="1" fill="#c0c0c0"/><rect x="13" y="5" width="1" height="1" fill="#ffff99"/><rect x="14" y="5" width="1" height="1" fill="#808080"/><rect x="1" y="6" width="1" height="1" fill="#808080"/><rect x="2" y="6" width="12" height="1" fill="#c0c0c0"/><rect x="14" y="6" width="1" height="1" fill="#808080"/><rect x="1" y="7" width="1" height="1" fill="#808080"/><rect x="2" y="7" width="1" height="1" fill="#ffff99"/><rect x="3" y="7" width="1" height="1" fill="#c0c0c0"/><rect x="4" y="7" width="2" height="1" fill="#ffff99"/><rect x="6" y="7" width="1" height="1" fill="#c0c0c0"/><rect x="7" y="7" width="2" height="1" fill="#ffff99"/><rect x="9" y="7" width="1" height="1" fill="#c0c0c0"/><rect x="10" y="7" width="2" height="1" fill="#ffff99"/><rect x="12" y="7" width="1" height="1" fill="#c0c0c0"/><rect x="13" y="7" width="1" height="1" fill="#ffff99"/><rect x="14" y="7" width="1" height="1" fill="#808080"/><rect x="1" y="8" width="1" height="1" fill="#808080"/><rect x="2" y="8" width="1" height="1" fill="#ffff99"/><rect x="3" y="8" width="1" height="1" fill="#c0c0c0"/><rect x="4" y="8" width="2" height="1" fill="#ffff99"/><rect x="6" y="8" width="1" height="1" fill="#c0c0c0"/><rect x="7" y="8" width="2" height="1" fill="#ffff99"/><rect x="9" y="8" width="1" height="1" fill="#c0c0c0"/><rect x="10" y="8" width="2" height="1" fill="#ffff99"/><rect x="12" y="8" width="1" height="1" fill="#c0c0c0"/><rect x="13" y="8" width="1" height="1" fill="#ffff99"/><rect x="14" y="8" width="1" height="1" fill="#808080"/><rect x="1" y="9" width="1" height="1" fill="#808080"/><rect x="2" y="9" width="12" height="1" fill="#c0c0c0"/><rect x="14" y="9" width="1" height="1" fill="#808080"/><rect x="1" y="10" width="1" height="1" fill="#808080"/><rect x="2" y="10" width="1" height="1" fill="#ffff99"/><rect x="3" y="10" width="1" height="1" fill="#c0c0c0"/><rect x="4" y="10" width="2" height="1" fill="#ffff99"/><rect x="6" y="10" width="1" height="1" fill="#c0c0c0"/><rect x="7" y="10" width="2" height="1" fill="#ffff99"/><rect x="9" y="10" width="1" height="1" fill="#c0c0c0"/><rect x="10" y="10" width="2" height="1" fill="#ffff99"/><rect x="12" y="10" width="1" height="1" fill="#c0c0c0"/><rect x="13" y="10" width="1" height="1" fill="#ffff99"/><rect x="14" y="10" width="1" height="1" fill="#808080"/><rect x="1" y="11" width="1" height="1" fill="#808080"/><rect x="2" y="11" width="1" height="1" fill="#ffff99"/><rect x="3" y="11" width="1" height="1" fill="#c0c0c0"/><rect x="4" y="11" width="2" height="1" fill="#ffff99"/><rect x="6" y="11" width="1" height="1" fill="#c0c0c0"/><rect x="7" y="11" width="2" height="1" fill="#ffff99"/><rect x="9" y="11" width="1" height="1" fill="#c0c0c0"/><rect x="10" y="11" width="2" height="1" fill="#ffff99"/><rect x="12" y="11" width="1" height="1" fill="#c0c0c0"/><rect x="13" y="11" width="1" height="1" fill="#ffff99"/><rect x="14" y="11" width="1" height="1" fill="#808080"/><rect x="1" y="12" width="1" height="1" fill="#808080"/><rect x="2" y="12" width="12" height="1" fill="#c0c0c0"/><rect x="14" y="12" width="1" height="1" fill="#808080"/><rect x="2" y="13" width="1" height="1" fill="#808080"/><rect x="3" y="13" width="1" height="1" fill="#c0c0c0"/><rect x="4" y="13" width="2" height="1" fill="#ffff99"/><rect x="6" y="13" width="1" height="1" fill="#c0c0c0"/><rect x="7" y="13" width="2" height="1" fill="#ffff99"/><rect x="9" y="13" width="1" height="1" fill="#c0c0c0"/><rect x="10" y="13" width="2" height="1" fill="#ffff99"/><rect x="12" y="13" width="1" height="1" fill="#c0c0c0"/><rect x="13" y="13" width="1" height="1" fill="#808080"/><rect x="3" y="14" width="10" height="1" fill="#808080"/><polyline points="2,10.5 3.8,10.5 5.5,8.6 7.5,10.6 8.6,9 9.8,5.8 11.5,3.6 12.6,5.5 13,8.8 14.2,10.2" stroke="#ff0000" stroke-width="1.25" fill="none" shape-rendering="auto"/></svg>
<div class="t" style="left:102px;top:368px;">Коррекция для холодного двигателя</div>
<div class="dh" style="left:69px;top:392px;width:11px;"></div>
<svg class="ic" style="left:80px;top:384px;" width="16" height="16" viewBox="0 0 16 16" shape-rendering="crispEdges"><rect x="3" y="1" width="10" height="1" fill="#808080"/><rect x="2" y="2" width="12" height="1" fill="#ffff99"/><rect x="1" y="3" width="1" height="1" fill="#808080"/><rect x="2" y="3" width="3" height="1" fill="#ffff99"/><rect x="5" y="3" width="1" height="1" fill="#000080"/><rect x="6" y="3" width="4" height="1" fill="#ffff99"/><rect x="10" y="3" width="2" height="1" fill="#000080"/><rect x="12" y="3" width="2" height="1" fill="#ffff99"/><rect x="14" y="3" width="1" height="1" fill="#c8c8d8"/><rect x="1" y="4" width="1" height="1" fill="#808080"/><rect x="2" y="4" width="2" height="1" fill="#ffff99"/><rect x="4" y="4" width="2" height="1" fill="#000080"/><rect x="6" y="4" width="3" height="1" fill="#ffff99"/><rect x="9" y="4" width="1" height="1" fill="#000080"/><rect x="10" y="4" width="2" height="1" fill="#ffff99"/><rect x="12" y="4" width="1" height="1" fill="#000080"/><rect x="13" y="4" width="1" height="1" fill="#ffff99"/><rect x="14" y="4" width="1" height="1" fill="#c8c8d8"/><rect x="1" y="5" width="1" height="1" fill="#808080"/><rect x="2" y="5" width="1" height="1" fill="#ffff99"/><rect x="3" y="5" width="1" height="1" fill="#000080"/><rect x="4" y="5" width="1" height="1" fill="#ffff99"/><rect x="5" y="5" width="1" height="1" fill="#000080"/><rect x="6" y="5" width="6" height="1" fill="#ffff99"/><rect x="12" y="5" width="1" height="1" fill="#000080"/><rect x="13" y="5" width="1" height="1" fill="#ffff99"/><rect x="14" y="5" width="1" height="1" fill="#c8c8d8"/><rect x="1" y="6" width="1" height="1" fill="#808080"/><rect x="2" y="6" width="3" height="1" fill="#ffff99"/><rect x="5" y="6" width="1" height="1" fill="#000080"/><rect x="6" y="6" width="6" height="1" fill="#ffff99"/><rect x="12" y="6" width="1" height="1" fill="#000080"/><rect x="13" y="6" width="1" height="1" fill="#ffff99"/><rect x="14" y="6" width="1" height="1" fill="#c8c8d8"/><rect x="1" y="7" width="1" height="1" fill="#808080"/><rect x="2" y="7" width="3" height="1" fill="#ffff99"/><rect x="5" y="7" width="1" height="1" fill="#000080"/><rect x="6" y="7" width="5" height="1" fill="#ffff99"/><rect x="11" y="7" width="1" height="1" fill="#000080"/><rect x="12" y="7" width="2" height="1" fill="#ffff99"/><rect x="14" y="7" width="1" height="1" fill="#c8c8d8"/><rect x="1" y="8" width="1" height="1" fill="#808080"/><rect x="2" y="8" width="3" height="1" fill="#ffff99"/><rect x="5" y="8" width="1" height="1" fill="#000080"/><rect x="6" y="8" width="4" height="1" fill="#ffff99"/><rect x="10" y="8" width="1" height="1" fill="#000080"/><rect x="11" y="8" width="3" height="1" fill="#ffff99"/><rect x="14" y="8" width="1" height="1" fill="#c8c8d8"/><rect x="1" y="9" width="1" height="1" fill="#808080"/><rect x="2" y="9" width="3" height="1" fill="#ffff99"/><rect x="5" y="9" width="1" height="1" fill="#000080"/><rect x="6" y="9" width="3" height="1" fill="#ffff99"/><rect x="9" y="9" width="1" height="1" fill="#000080"/><rect x="10" y="9" width="4" height="1" fill="#ffff99"/><rect x="14" y="9" width="1" height="1" fill="#c8c8d8"/><rect x="1" y="10" width="1" height="1" fill="#808080"/><rect x="2" y="10" width="3" height="1" fill="#ffff99"/><rect x="5" y="10" width="1" height="1" fill="#000080"/><rect x="6" y="10" width="1" height="1" fill="#ffff99"/><rect x="7" y="10" width="1" height="1" fill="#000080"/><rect x="8" y="10" width="1" height="1" fill="#ffff99"/><rect x="9" y="10" width="4" height="1" fill="#000080"/><rect x="13" y="10" width="1" height="1" fill="#ffff99"/><rect x="14" y="10" width="1" height="1" fill="#c8c8d8"/><rect x="1" y="11" width="1" height="1" fill="#808080"/><rect x="2" y="11" width="12" height="1" fill="#ffff99"/><rect x="2" y="12" width="12" height="1" fill="#ffff99"/><rect x="3" y="13" width="10" height="1" fill="#c8c8d8"/></svg>
<div class="t" style="left:102px;top:384px;">Ограничение сс. хол. дв. без признака движения</div>
<div class="dh" style="left:69px;top:408px;width:11px;"></div>
<svg class="ic" style="left:80px;top:400px;" width="16" height="16" viewBox="0 0 16 16" shape-rendering="crispEdges"><rect x="3" y="1" width="10" height="1" fill="#808080"/><rect x="2" y="2" width="12" height="1" fill="#ffff99"/><rect x="1" y="3" width="1" height="1" fill="#808080"/><rect x="2" y="3" width="3" height="1" fill="#ffff99"/><rect x="5" y="3" width="1" height="1" fill="#000080"/><rect x="6" y="3" width="4" height="1" fill="#ffff99"/><rect x="10" y="3" width="2" height="1" fill="#000080"/><rect x="12" y="3" width="2" height="1" fill="#ffff99"/><rect x="14" y="3" width="1" height="1" fill="#c8c8d8"/><rect x="1" y="4" width="1" height="1" fill="#808080"/><rect x="2" y="4" width="2" height="1" fill="#ffff99"/><rect x="4" y="4" width="2" height="1" fill="#000080"/><rect x="6" y="4" width="3" height="1" fill="#ffff99"/><rect x="9" y="4" width="1" height="1" fill="#000080"/><rect x="10" y="4" width="2" height="1" fill="#ffff99"/><rect x="12" y="4" width="1" height="1" fill="#000080"/><rect x="13" y="4" width="1" height="1" fill="#ffff99"/><rect x="14" y="4" width="1" height="1" fill="#c8c8d8"/><rect x="1" y="5" width="1" height="1" fill="#808080"/><rect x="2" y="5" width="1" height="1" fill="#ffff99"/><rect x="3" y="5" width="1" height="1" fill="#000080"/><rect x="4" y="5" width="1" height="1" fill="#ffff99"/><rect x="5" y="5" width="1" height="1" fill="#000080"/><rect x="6" y="5" width="6" height="1" fill="#ffff99"/><rect x="12" y="5" width="1" height="1" fill="#000080"/><rect x="13" y="5" width="1" height="1" fill="#ffff99"/><rect x="14" y="5" width="1" height="1" fill="#c8c8d8"/><rect x="1" y="6" width="1" height="1" fill="#808080"/><rect x="2" y="6" width="3" height="1" fill="#ffff99"/><rect x="5" y="6" width="1" height="1" fill="#000080"/><rect x="6" y="6" width="6" height="1" fill="#ffff99"/><rect x="12" y="6" width="1" height="1" fill="#000080"/><rect x="13" y="6" width="1" height="1" fill="#ffff99"/><rect x="14" y="6" width="1" height="1" fill="#c8c8d8"/><rect x="1" y="7" width="1" height="1" fill="#808080"/><rect x="2" y="7" width="3" height="1" fill="#ffff99"/><rect x="5" y="7" width="1" height="1" fill="#000080"/><rect x="6" y="7" width="5" height="1" fill="#ffff99"/><rect x="11" y="7" width="1" height="1" fill="#000080"/><rect x="12" y="7" width="2" height="1" fill="#ffff99"/><rect x="14" y="7" width="1" height="1" fill="#c8c8d8"/><rect x="1" y="8" width="1" height="1" fill="#808080"/><rect x="2" y="8" width="3" height="1" fill="#ffff99"/><rect x="5" y="8" width="1" height="1" fill="#000080"/><rect x="6" y="8" width="4" height="1" fill="#ffff99"/><rect x="10" y="8" width="1" height="1" fill="#000080"/><rect x="11" y="8" width="3" height="1" fill="#ffff99"/><rect x="14" y="8" width="1" height="1" fill="#c8c8d8"/><rect x="1" y="9" width="1" height="1" fill="#808080"/><rect x="2" y="9" width="3" height="1" fill="#ffff99"/><rect x="5" y="9" width="1" height="1" fill="#000080"/><rect x="6" y="9" width="3" height="1" fill="#ffff99"/><rect x="9" y="9" width="1" height="1" fill="#000080"/><rect x="10" y="9" width="4" height="1" fill="#ffff99"/><rect x="14" y="9" width="1" height="1" fill="#c8c8d8"/><rect x="1" y="10" width="1" height="1" fill="#808080"/><rect x="2" y="10" width="3" height="1" fill="#ffff99"/><rect x="5" y="10" width="1" height="1" fill="#000080"/><rect x="6" y="10" width="1" height="1" fill="#ffff99"/><rect x="7" y="10" width="1" height="1" fill="#000080"/><rect x="8" y="10" width="1" height="1" fill="#ffff99"/><rect x="9" y="10" width="4" height="1" fill="#000080"/><rect x="13" y="10" width="1" height="1" fill="#ffff99"/><rect x="14" y="10" width="1" height="1" fill="#c8c8d8"/><rect x="1" y="11" width="1" height="1" fill="#808080"/><rect x="2" y="11" width="12" height="1" fill="#ffff99"/><rect x="2" y="12" width="12" height="1" fill="#ffff99"/><rect x="3" y="13" width="10" height="1" fill="#c8c8d8"/></svg>
<div class="t" style="left:102px;top:400px;">Аварийный состав смеси</div>
<div class="dh" style="left:69px;top:424px;width:11px;"></div>
<svg class="ic" style="left:80px;top:416px;" width="16" height="16" viewBox="0 0 16 16" shape-rendering="crispEdges"><rect x="7" y="1" width="5" height="1" fill="#000"/><rect x="2" y="2" width="1" height="1" fill="#fff"/><rect x="7" y="2" width="1" height="1" fill="#000"/><rect x="8" y="2" width="3" height="1" fill="#ffff00"/><rect x="11" y="2" width="1" height="1" fill="#000"/><rect x="1" y="3" width="1" height="1" fill="#000"/><rect x="2" y="3" width="1" height="1" fill="#fff"/><rect x="7" y="3" width="1" height="1" fill="#000"/><rect x="8" y="3" width="3" height="1" fill="#ffff00"/><rect x="11" y="3" width="4" height="1" fill="#000"/><rect x="1" y="4" width="1" height="1" fill="#000"/><rect x="2" y="4" width="1" height="1" fill="#fff"/><rect x="7" y="4" width="1" height="1" fill="#000"/><rect x="8" y="4" width="3" height="1" fill="#ffff00"/><rect x="11" y="4" width="4" height="1" fill="#000"/><rect x="1" y="5" width="1" height="1" fill="#000"/><rect x="2" y="5" width="1" height="1" fill="#fff"/><rect x="3" y="5" width="5" height="1" fill="#000"/><rect x="8" y="5" width="3" height="1" fill="#ffff00"/><rect x="11" y="5" width="1" height="1" fill="#000"/><rect x="12" y="5" width="2" height="1" fill="#ff0000"/><rect x="14" y="5" width="1" height="1" fill="#000"/><rect x="1" y="6" width="1" height="1" fill="#000"/><rect x="2" y="6" width="1" height="1" fill="#fff"/><rect x="3" y="6" width="1" height="1" fill="#000"/><rect x="4" y="6" width="3" height="1" fill="#0000ff"/><rect x="7" y="6" width="1" height="1" fill="#000"/><rect x="8" y="6" width="3" height="1" fill="#ffff00"/><rect x="11" y="6" width="1" height="1" fill="#000"/><rect x="12" y="6" width="2" height="1" fill="#ff0000"/><rect x="14" y="6" width="1" height="1" fill="#000"/><rect x="1" y="7" width="1" height="1" fill="#000"/><rect x="2" y="7" width="1" height="1" fill="#fff"/><rect x="3" y="7" width="1" height="1" fill="#000"/><rect x="4" y="7" width="3" height="1" fill="#0000ff"/><rect x="7" y="7" width="1" height="1" fill="#000"/><rect x="8" y="7" width="3" height="1" fill="#ffff00"/><rect x="11" y="7" width="1" height="1" fill="#000"/><rect x="12" y="7" width="2" height="1" fill="#ff0000"/><rect x="14" y="7" width="1" height="1" fill="#000"/><rect x="1" y="8" width="1" height="1" fill="#000"/><rect x="2" y="8" width="1" height="1" fill="#fff"/><rect x="3" y="8" width="1" height="1" fill="#000"/><rect x="4" y="8" width="3" height="1" fill="#0000ff"/><rect x="7" y="8" width="1" height="1" fill="#000"/><rect x="8" y="8" width="3" height="1" fill="#ffff00"/><rect x="11" y="8" width="1" height="1" fill="#000"/><rect x="12" y="8" width="2" height="1" fill="#ff0000"/><rect x="14" y="8" width="1" height="1" fill="#000"/><rect x="1" y="9" width="1" height="1" fill="#000"/><rect x="2" y="9" width="1" height="1" fill="#fff"/><rect x="3" y="9" width="1" height="1" fill="#000"/><rect x="4" y="9" width="3" height="1" fill="#0000ff"/><rect x="7" y="9" width="1" height="1" fill="#000"/><rect x="8" y="9" width="3" height="1" fill="#ffff00"/><rect x="11" y="9" width="1" height="1" fill="#000"/><rect x="12" y="9" width="2" height="1" fill="#ff0000"/><rect x="14" y="9" width="1" height="1" fill="#000"/><rect x="1" y="10" width="1" height="1" fill="#000"/><rect x="2" y="10" width="1" height="1" fill="#fff"/><rect x="3" y="10" width="1" height="1" fill="#000"/><rect x="4" y="10" width="3" height="1" fill="#0000ff"/><rect x="7" y="10" width="1" height="1" fill="#000"/><rect x="8" y="10" width="3" height="1" fill="#ffff00"/><rect x="11" y="10" width="1" height="1" fill="#000"/><rect x="12" y="10" width="2" height="1" fill="#ff0000"/><rect x="14" y="10" width="1" height="1" fill="#000"/><rect x="1" y="11" width="1" height="1" fill="#000"/><rect x="2" y="11" width="1" height="1" fill="#fff"/><rect x="3" y="11" width="1" height="1" fill="#000"/><rect x="4" y="11" width="3" height="1" fill="#0000ff"/><rect x="7" y="11" width="1" height="1" fill="#000"/><rect x="8" y="11" width="3" height="1" fill="#ffff00"/><rect x="11" y="11" width="1" height="1" fill="#000"/><rect x="12" y="11" width="2" height="1" fill="#ff0000"/><rect x="14" y="11" width="1" height="1" fill="#000"/><rect x="1" y="12" width="1" height="1" fill="#000"/><rect x="2" y="12" width="1" height="1" fill="#fff"/><rect x="3" y="12" width="12" height="1" fill="#000"/><rect x="1" y="13" width="1" height="1" fill="#000"/><rect x="2" y="13" width="12" height="1" fill="#fff"/><rect x="1" y="14" width="14" height="1" fill="#000"/></svg>
<div class="t" style="left:102px;top:416px;">Состав смеси прогретого двигателя</div>
<div class="dh" style="left:53px;top:440px;width:7px;"></div>
<div class="a" style="left:44px;top:436px;width:9px;height:9px;background:#808080;"></div>
<div class="a" style="left:45px;top:437px;width:7px;height:7px;background:#fff;"></div>
<div class="a" style="left:46px;top:440px;width:5px;height:1px;background:#000;"></div>
<svg class="ic" style="left:60px;top:432px;" width="16" height="16" viewBox="0 0 16 16" shape-rendering="crispEdges"><rect x="4" y="1" width="3" height="1" fill="#808080"/><rect x="3" y="2" width="1" height="1" fill="#808080"/><rect x="4" y="2" width="3" height="1" fill="#fff"/><rect x="7" y="2" width="1" height="1" fill="#808080"/><rect x="2" y="3" width="1" height="1" fill="#808080"/><rect x="3" y="3" width="2" height="1" fill="#fff"/><rect x="5" y="3" width="1" height="1" fill="#ffff00"/><rect x="6" y="3" width="2" height="1" fill="#fff"/><rect x="8" y="3" width="6" height="1" fill="#808080"/><rect x="2" y="4" width="1" height="1" fill="#808080"/><rect x="3" y="4" width="1" height="1" fill="#fff"/><rect x="4" y="4" width="1" height="1" fill="#ffff00"/><rect x="5" y="4" width="1" height="1" fill="#fff"/><rect x="6" y="4" width="1" height="1" fill="#ffff00"/><rect x="7" y="4" width="7" height="1" fill="#fff"/><rect x="14" y="4" width="1" height="1" fill="#000"/><rect x="2" y="5" width="1" height="1" fill="#808080"/><rect x="3" y="5" width="2" height="1" fill="#fff"/><rect x="5" y="5" width="1" height="1" fill="#ffff00"/><rect x="6" y="5" width="1" height="1" fill="#fff"/><rect x="7" y="5" width="1" height="1" fill="#ffff00"/><rect x="8" y="5" width="1" height="1" fill="#fff"/><rect x="9" y="5" width="1" height="1" fill="#ffff00"/><rect x="10" y="5" width="1" height="1" fill="#fff"/><rect x="11" y="5" width="1" height="1" fill="#ffff00"/><rect x="12" y="5" width="2" height="1" fill="#fff"/><rect x="14" y="5" width="1" height="1" fill="#000"/><rect x="1" y="6" width="10" height="1" fill="#808080"/><rect x="11" y="6" width="1" height="1" fill="#000"/><rect x="12" y="6" width="1" height="1" fill="#ffff00"/><rect x="13" y="6" width="1" height="1" fill="#fff"/><rect x="14" y="6" width="1" height="1" fill="#000"/><rect x="1" y="7" width="1" height="1" fill="#808080"/><rect x="2" y="7" width="1" height="1" fill="#fff"/><rect x="3" y="7" width="1" height="1" fill="#ffff00"/><rect x="4" y="7" width="1" height="1" fill="#fff"/><rect x="5" y="7" width="1" height="1" fill="#ffff00"/><rect x="6" y="7" width="1" height="1" fill="#fff"/><rect x="7" y="7" width="1" height="1" fill="#ffff00"/><rect x="8" y="7" width="1" height="1" fill="#fff"/><rect x="9" y="7" width="1" height="1" fill="#ffff00"/><rect x="10" y="7" width="1" height="1" fill="#fff"/><rect x="11" y="7" width="1" height="1" fill="#000"/><rect x="12" y="7" width="1" height="1" fill="#fff"/><rect x="13" y="7" width="1" height="1" fill="#ffff00"/><rect x="14" y="7" width="1" height="1" fill="#000"/><rect x="1" y="8" width="2" height="1" fill="#808080"/><rect x="3" y="8" width="1" height="1" fill="#fff"/><rect x="4" y="8" width="1" height="1" fill="#ffff00"/><rect x="5" y="8" width="1" height="1" fill="#fff"/><rect x="6" y="8" width="1" height="1" fill="#ffff00"/><rect x="7" y="8" width="1" height="1" fill="#fff"/><rect x="8" y="8" width="1" height="1" fill="#ffff00"/><rect x="9" y="8" width="1" height="1" fill="#fff"/><rect x="10" y="8" width="1" height="1" fill="#ffff00"/><rect x="11" y="8" width="2" height="1" fill="#000"/><rect x="13" y="8" width="1" height="1" fill="#fff"/><rect x="14" y="8" width="1" height="1" fill="#000"/><rect x="2" y="9" width="1" height="1" fill="#808080"/><rect x="3" y="9" width="1" height="1" fill="#ffff00"/><rect x="4" y="9" width="1" height="1" fill="#fff"/><rect x="5" y="9" width="1" height="1" fill="#ffff00"/><rect x="6" y="9" width="1" height="1" fill="#fff"/><rect x="7" y="9" width="1" height="1" fill="#ffff00"/><rect x="8" y="9" width="1" height="1" fill="#fff"/><rect x="9" y="9" width="1" height="1" fill="#ffff00"/><rect x="10" y="9" width="1" height="1" fill="#fff"/><rect x="11" y="9" width="1" height="1" fill="#ffff00"/><rect x="12" y="9" width="1" height="1" fill="#000"/><rect x="13" y="9" width="1" height="1" fill="#ffff00"/><rect x="14" y="9" width="1" height="1" fill="#000"/><rect x="2" y="10" width="1" height="1" fill="#808080"/><rect x="3" y="10" width="1" height="1" fill="#fff"/><rect x="4" y="10" width="1" height="1" fill="#ffff00"/><rect x="5" y="10" width="1" height="1" fill="#fff"/><rect x="6" y="10" width="1" height="1" fill="#ffff00"/><rect x="7" y="10" width="1" height="1" fill="#fff"/><rect x="8" y="10" width="1" height="1" fill="#ffff00"/><rect x="9" y="10" width="1" height="1" fill="#fff"/><rect x="10" y="10" width="1" height="1" fill="#ffff00"/><rect x="11" y="10" width="1" height="1" fill="#fff"/><rect x="12" y="10" width="3" height="1" fill="#000"/><rect x="2" y="11" width="2" height="1" fill="#808080"/><rect x="4" y="11" width="1" height="1" fill="#fff"/><rect x="5" y="11" width="1" height="1" fill="#ffff00"/><rect x="6" y="11" width="1" height="1" fill="#fff"/><rect x="7" y="11" width="1" height="1" fill="#ffff00"/><rect x="8" y="11" width="1" height="1" fill="#fff"/><rect x="9" y="11" width="1" height="1" fill="#ffff00"/><rect x="10" y="11" width="1" height="1" fill="#fff"/><rect x="11" y="11" width="1" height="1" fill="#ffff00"/><rect x="12" y="11" width="1" height="1" fill="#fff"/><rect x="13" y="11" width="2" height="1" fill="#000"/><rect x="3" y="12" width="10" height="1" fill="#808080"/><rect x="13" y="12" width="2" height="1" fill="#000"/><rect x="4" y="13" width="11" height="1" fill="#000"/></svg>
<div class="t" style="left:82px;top:432px;">Коррекция состава смеси после пуска</div>
<div class="dh" style="left:69px;top:456px;width:11px;"></div>
<svg class="ic" style="left:80px;top:448px;" width="16" height="16" viewBox="0 0 16 16" shape-rendering="crispEdges"><rect x="3" y="1" width="10" height="1" fill="#808080"/><rect x="2" y="2" width="1" height="1" fill="#808080"/><rect x="3" y="2" width="1" height="1" fill="#c0c0c0"/><rect x="4" y="2" width="2" height="1" fill="#ffff99"/><rect x="6" y="2" width="1" height="1" fill="#c0c0c0"/><rect x="7" y="2" width="2" height="1" fill="#ffff99"/><rect x="9" y="2" width="1" height="1" fill="#c0c0c0"/><rect x="10" y="2" width="2" height="1" fill="#ffff99"/><rect x="12" y="2" width="1" height="1" fill="#c0c0c0"/><rect x="13" y="2" width="1" height="1" fill="#808080"/><rect x="1" y="3" width="1" height="1" fill="#808080"/><rect x="2" y="3" width="12" height="1" fill="#c0c0c0"/><rect x="14" y="3" width="1" height="1" fill="#808080"/><rect x="1" y="4" width="1" height="1" fill="#808080"/><rect x="2" y="4" width="1" height="1" fill="#ffff99"/><rect x="3" y="4" width="1" height="1" fill="#c0c0c0"/><rect x="4" y="4" width="2" height="1" fill="#ffff99"/><rect x="6" y="4" width="1" height="1" fill="#c0c0c0"/><rect x="7" y="4" width="2" height="1" fill="#ffff99"/><rect x="9" y="4" width="1" height="1" fill="#c0c0c0"/><rect x="10" y="4" width="2" height="1" fill="#ffff99"/><rect x="12" y="4" width="1" height="1" fill="#c0c0c0"/><rect x="13" y="4" width="1" height="1" fill="#ffff99"/><rect x="14" y="4" width="1" height="1" fill="#808080"/><rect x="1" y="5" width="1" height="1" fill="#808080"/><rect x="2" y="5" width="1" height="1" fill="#ffff99"/><rect x="3" y="5" width="1" height="1" fill="#c0c0c0"/><rect x="4" y="5" width="2" height="1" fill="#ffff99"/><rect x="6" y="5" width="1" height="1" fill="#c0c0c0"/><rect x="7" y="5" width="2" height="1" fill="#ffff99"/><rect x="9" y="5" width="1" height="1" fill="#c0c0c0"/><rect x="10" y="5" width="2" height="1" fill="#ffff99"/><rect x="12" y="5" width="1" height="1" fill="#c0c0c0"/><rect x="13" y="5" width="1" height="1" fill="#ffff99"/><rect x="14" y="5" width="1" height="1" fill="#808080"/><rect x="1" y="6" width="1" height="1" fill="#808080"/><rect x="2" y="6" width="12" height="1" fill="#c0c0c0"/><rect x="14" y="6" width="1" height="1" fill="#808080"/><rect x="1" y="7" width="1" height="1" fill="#808080"/><rect x="2" y="7" width="1" height="1" fill="#ffff99"/><rect x="3" y="7" width="1" height="1" fill="#c0c0c0"/><rect x="4" y="7" width="2" height="1" fill="#ffff99"/><rect x="6" y="7" width="1" height="1" fill="#c0c0c0"/><rect x="7" y="7" width="2" height="1" fill="#ffff99"/><rect x="9" y="7" width="1" height="1" fill="#c0c0c0"/><rect x="10" y="7" width="2" height="1" fill="#ffff99"/><rect x="12" y="7" width="1" height="1" fill="#c0c0c0"/><rect x="13" y="7" width="1" height="1" fill="#ffff99"/><rect x="14" y="7" width="1" height="1" fill="#808080"/><rect x="1" y="8" width="1" height="1" fill="#808080"/><rect x="2" y="8" width="1" height="1" fill="#ffff99"/><rect x="3" y="8" width="1" height="1" fill="#c0c0c0"/><rect x="4" y="8" width="2" height="1" fill="#ffff99"/><rect x="6" y="8" width="1" height="1" fill="#c0c0c0"/><rect x="7" y="8" width="2" height="1" fill="#ffff99"/><rect x="9" y="8" width="1" height="1" fill="#c0c0c0"/><rect x="10" y="8" width="2" height="1" fill="#ffff99"/><rect x="12" y="8" width="1" height="1" fill="#c0c0c0"/><rect x="13" y="8" width="1" height="1" fill="#ffff99"/><rect x="14" y="8" width="1" height="1" fill="#808080"/><rect x="1" y="9" width="1" height="1" fill="#808080"/><rect x="2" y="9" width="12" height="1" fill="#c0c0c0"/><rect x="14" y="9" width="1" height="1" fill="#808080"/><rect x="1" y="10" width="1" height="1" fill="#808080"/><rect x="2" y="10" width="1" height="1" fill="#ffff99"/><rect x="3" y="10" width="1" height="1" fill="#c0c0c0"/><rect x="4" y="10" width="2" height="1" fill="#ffff99"/><rect x="6" y="10" width="1" height="1" fill="#c0c0c0"/><rect x="7" y="10" width="2" height="1" fill="#ffff99"/><rect x="9" y="10" width="1" height="1" fill="#c0c0c0"/><rect x="10" y="10" width="2" height="1" fill="#ffff99"/><rect x="12" y="10" width="1" height="1" fill="#c0c0c0"/><rect x="13" y="10" width="1" height="1" fill="#ffff99"/><rect x="14" y="10" width="1" height="1" fill="#808080"/><rect x="1" y="11" width="1" height="1" fill="#808080"/><rect x="2" y="11" width="1" height="1" fill="#ffff99"/><rect x="3" y="11" width="1" height="1" fill="#c0c0c0"/><rect x="4" y="11" width="2" height="1" fill="#ffff99"/><rect x="6" y="11" width="1" height="1" fill="#c0c0c0"/><rect x="7" y="11" width="2" height="1" fill="#ffff99"/><rect x="9" y="11" width="1" height="1" fill="#c0c0c0"/><rect x="10" y="11" width="2" height="1" fill="#ffff99"/><rect x="12" y="11" width="1" height="1" fill="#c0c0c0"/><rect x="13" y="11" width="1" height="1" fill="#ffff99"/><rect x="14" y="11" width="1" height="1" fill="#808080"/><rect x="1" y="12" width="1" height="1" fill="#808080"/><rect x="2" y="12" width="12" height="1" fill="#c0c0c0"/><rect x="14" y="12" width="1" height="1" fill="#808080"/><rect x="2" y="13" width="1" height="1" fill="#808080"/><rect x="3" y="13" width="1" height="1" fill="#c0c0c0"/><rect x="4" y="13" width="2" height="1" fill="#ffff99"/><rect x="6" y="13" width="1" height="1" fill="#c0c0c0"/><rect x="7" y="13" width="2" height="1" fill="#ffff99"/><rect x="9" y="13" width="1" height="1" fill="#c0c0c0"/><rect x="10" y="13" width="2" height="1" fill="#ffff99"/><rect x="12" y="13" width="1" height="1" fill="#c0c0c0"/><rect x="13" y="13" width="1" height="1" fill="#808080"/><rect x="3" y="14" width="10" height="1" fill="#808080"/><polyline points="2,10.5 3.8,10.5 5.5,8.6 7.5,10.6 8.6,9 9.8,5.8 11.5,3.6 12.6,5.5 13,8.8 14.2,10.2" stroke="#ff0000" stroke-width="1.25" fill="none" shape-rendering="auto"/></svg>
<div class="t" style="left:102px;top:448px;">Начальная коррекция состава после пуска</div>
<div class="dh" style="left:69px;top:472px;width:11px;"></div>
<svg class="ic" style="left:80px;top:464px;" width="16" height="16" viewBox="0 0 16 16" shape-rendering="crispEdges"><rect x="3" y="1" width="10" height="1" fill="#808080"/><rect x="2" y="2" width="1" height="1" fill="#808080"/><rect x="3" y="2" width="1" height="1" fill="#c0c0c0"/><rect x="4" y="2" width="2" height="1" fill="#ffff99"/><rect x="6" y="2" width="1" height="1" fill="#c0c0c0"/><rect x="7" y="2" width="2" height="1" fill="#ffff99"/><rect x="9" y="2" width="1" height="1" fill="#c0c0c0"/><rect x="10" y="2" width="2" height="1" fill="#ffff99"/><rect x="12" y="2" width="1" height="1" fill="#c0c0c0"/><rect x="13" y="2" width="1" height="1" fill="#808080"/><rect x="1" y="3" width="1" height="1" fill="#808080"/><rect x="2" y="3" width="12" height="1" fill="#c0c0c0"/><rect x="14" y="3" width="1" height="1" fill="#808080"/><rect x="1" y="4" width="1" height="1" fill="#808080"/><rect x="2" y="4" width="1" height="1" fill="#ffff99"/><rect x="3" y="4" width="1" height="1" fill="#c0c0c0"/><rect x="4" y="4" width="2" height="1" fill="#ffff99"/><rect x="6" y="4" width="1" height="1" fill="#c0c0c0"/><rect x="7" y="4" width="2" height="1" fill="#ffff99"/><rect x="9" y="4" width="1" height="1" fill="#c0c0c0"/><rect x="10" y="4" width="2" height="1" fill="#ffff99"/><rect x="12" y="4" width="1" height="1" fill="#c0c0c0"/><rect x="13" y="4" width="1" height="1" fill="#ffff99"/><rect x="14" y="4" width="1" height="1" fill="#808080"/><rect x="1" y="5" width="1" height="1" fill="#808080"/><rect x="2" y="5" width="1" height="1" fill="#ffff99"/><rect x="3" y="5" width="1" height="1" fill="#c0c0c0"/><rect x="4" y="5" width="2" height="1" fill="#ffff99"/><rect x="6" y="5" width="1" height="1" fill="#c0c0c0"/><rect x="7" y="5" width="2" height="1" fill="#ffff99"/><rect x="9" y="5" width="1" height="1" fill="#c0c0c0"/><rect x="10" y="5" width="2" height="1" fill="#ffff99"/><rect x="12" y="5" width="1" height="1" fill="#c0c0c0"/><rect x="13" y="5" width="1" height="1" fill="#ffff99"/><rect x="14" y="5" width="1" height="1" fill="#808080"/><rect x="1" y="6" width="1" height="1" fill="#808080"/><rect x="2" y="6" width="12" height="1" fill="#c0c0c0"/><rect x="14" y="6" width="1" height="1" fill="#808080"/><rect x="1" y="7" width="1" height="1" fill="#808080"/><rect x="2" y="7" width="1" height="1" fill="#ffff99"/><rect x="3" y="7" width="1" height="1" fill="#c0c0c0"/><rect x="4" y="7" width="2" height="1" fill="#ffff99"/><rect x="6" y="7" width="1" height="1" fill="#c0c0c0"/><rect x="7" y="7" width="2" height="1" fill="#ffff99"/><rect x="9" y="7" width="1" height="1" fill="#c0c0c0"/><rect x="10" y="7" width="2" height="1" fill="#ffff99"/><rect x="12" y="7" width="1" height="1" fill="#c0c0c0"/><rect x="13" y="7" width="1" height="1" fill="#ffff99"/><rect x="14" y="7" width="1" height="1" fill="#808080"/><rect x="1" y="8" width="1" height="1" fill="#808080"/><rect x="2" y="8" width="1" height="1" fill="#ffff99"/><rect x="3" y="8" width="1" height="1" fill="#c0c0c0"/><rect x="4" y="8" width="2" height="1" fill="#ffff99"/><rect x="6" y="8" width="1" height="1" fill="#c0c0c0"/><rect x="7" y="8" width="2" height="1" fill="#ffff99"/><rect x="9" y="8" width="1" height="1" fill="#c0c0c0"/><rect x="10" y="8" width="2" height="1" fill="#ffff99"/><rect x="12" y="8" width="1" height="1" fill="#c0c0c0"/><rect x="13" y="8" width="1" height="1" fill="#ffff99"/><rect x="14" y="8" width="1" height="1" fill="#808080"/><rect x="1" y="9" width="1" height="1" fill="#808080"/><rect x="2" y="9" width="12" height="1" fill="#c0c0c0"/><rect x="14" y="9" width="1" height="1" fill="#808080"/><rect x="1" y="10" width="1" height="1" fill="#808080"/><rect x="2" y="10" width="1" height="1" fill="#ffff99"/><rect x="3" y="10" width="1" height="1" fill="#c0c0c0"/><rect x="4" y="10" width="2" height="1" fill="#ffff99"/><rect x="6" y="10" width="1" height="1" fill="#c0c0c0"/><rect x="7" y="10" width="2" height="1" fill="#ffff99"/><rect x="9" y="10" width="1" height="1" fill="#c0c0c0"/><rect x="10" y="10" width="2" height="1" fill="#ffff99"/><rect x="12" y="10" width="1" height="1" fill="#c0c0c0"/><rect x="13" y="10" width="1" height="1" fill="#ffff99"/><rect x="14" y="10" width="1" height="1" fill="#808080"/><rect x="1" y="11" width="1" height="1" fill="#808080"/><rect x="2" y="11" width="1" height="1" fill="#ffff99"/><rect x="3" y="11" width="1" height="1" fill="#c0c0c0"/><rect x="4" y="11" width="2" height="1" fill="#ffff99"/><rect x="6" y="11" width="1" height="1" fill="#c0c0c0"/><rect x="7" y="11" width="2" height="1" fill="#ffff99"/><rect x="9" y="11" width="1" height="1" fill="#c0c0c0"/><rect x="10" y="11" width="2" height="1" fill="#ffff99"/><rect x="12" y="11" width="1" height="1" fill="#c0c0c0"/><rect x="13" y="11" width="1" height="1" fill="#ffff99"/><rect x="14" y="11" width="1" height="1" fill="#808080"/><rect x="1" y="12" width="1" height="1" fill="#808080"/><rect x="2" y="12" width="12" height="1" fill="#c0c0c0"/><rect x="14" y="12" width="1" height="1" fill="#808080"/><rect x="2" y="13" width="1" height="1" fill="#808080"/><rect x="3" y="13" width="1" height="1" fill="#c0c0c0"/><rect x="4" y="13" width="2" height="1" fill="#ffff99"/><rect x="6" y="13" width="1" height="1" fill="#c0c0c0"/><rect x="7" y="13" width="2" height="1" fill="#ffff99"/><rect x="9" y="13" width="1" height="1" fill="#c0c0c0"/><rect x="10" y="13" width="2" height="1" fill="#ffff99"/><rect x="12" y="13" width="1" height="1" fill="#c0c0c0"/><rect x="13" y="13" width="1" height="1" fill="#808080"/><rect x="3" y="14" width="10" height="1" fill="#808080"/><polyline points="2,10.5 3.8,10.5 5.5,8.6 7.5,10.6 8.6,9 9.8,5.8 11.5,3.6 12.6,5.5 13,8.8 14.2,10.2" stroke="#ff0000" stroke-width="1.25" fill="none" shape-rendering="auto"/></svg>
<div class="t" style="left:102px;top:464px;">Период убывания коррекции состава после пуска</div>
<div class="dh" style="left:69px;top:488px;width:11px;"></div>
<svg class="ic" style="left:80px;top:480px;" width="16" height="16" viewBox="0 0 16 16" shape-rendering="crispEdges"><rect x="3" y="1" width="10" height="1" fill="#808080"/><rect x="2" y="2" width="12" height="1" fill="#ffff99"/><rect x="1" y="3" width="1" height="1" fill="#808080"/><rect x="2" y="3" width="3" height="1" fill="#ffff99"/><rect x="5" y="3" width="1" height="1" fill="#000080"/><rect x="6" y="3" width="4" height="1" fill="#ffff99"/><rect x="10" y="3" width="2" height="1" fill="#000080"/><rect x="12" y="3" width="2" height="1" fill="#ffff99"/><rect x="14" y="3" width="1" height="1" fill="#c8c8d8"/><rect x="1" y="4" width="1" height="1" fill="#808080"/><rect x="2" y="4" width="2" height="1" fill="#ffff99"/><rect x="4" y="4" width="2" height="1" fill="#000080"/><rect x="6" y="4" width="3" height="1" fill="#ffff99"/><rect x="9" y="4" width="1" height="1" fill="#000080"/><rect x="10" y="4" width="2" height="1" fill="#ffff99"/><rect x="12" y="4" width="1" height="1" fill="#000080"/><rect x="13" y="4" width="1" height="1" fill="#ffff99"/><rect x="14" y="4" width="1" height="1" fill="#c8c8d8"/><rect x="1" y="5" width="1" height="1" fill="#808080"/><rect x="2" y="5" width="1" height="1" fill="#ffff99"/><rect x="3" y="5" width="1" height="1" fill="#000080"/><rect x="4" y="5" width="1" height="1" fill="#ffff99"/><rect x="5" y="5" width="1" height="1" fill="#000080"/><rect x="6" y="5" width="6" height="1" fill="#ffff99"/><rect x="12" y="5" width="1" height="1" fill="#000080"/><rect x="13" y="5" width="1" height="1" fill="#ffff99"/><rect x="14" y="5" width="1" height="1" fill="#c8c8d8"/><rect x="1" y="6" width="1" height="1" fill="#808080"/><rect x="2" y="6" width="3" height="1" fill="#ffff99"/><rect x="5" y="6" width="1" height="1" fill="#000080"/><rect x="6" y="6" width="6" height="1" fill="#ffff99"/><rect x="12" y="6" width="1" height="1" fill="#000080"/><rect x="13" y="6" width="1" height="1" fill="#ffff99"/><rect x="14" y="6" width="1" height="1" fill="#c8c8d8"/><rect x="1" y="7" width="1" height="1" fill="#808080"/><rect x="2" y="7" width="3" height="1" fill="#ffff99"/><rect x="5" y="7" width="1" height="1" fill="#000080"/><rect x="6" y="7" width="5" height="1" fill="#ffff99"/><rect x="11" y="7" width="1" height="1" fill="#000080"/><rect x="12" y="7" width="2" height="1" fill="#ffff99"/><rect x="14" y="7" width="1" height="1" fill="#c8c8d8"/><rect x="1" y="8" width="1" height="1" fill="#808080"/><rect x="2" y="8" width="3" height="1" fill="#ffff99"/><rect x="5" y="8" width="1" height="1" fill="#000080"/><rect x="6" y="8" width="4" height="1" fill="#ffff99"/><rect x="10" y="8" width="1" height="1" fill="#000080"/><rect x="11" y="8" width="3" height="1" fill="#ffff99"/><rect x="14" y="8" width="1" height="1" fill="#c8c8d8"/><rect x="1" y="9" width="1" height="1" fill="#808080"/><rect x="2" y="9" width="3" height="1" fill="#ffff99"/><rect x="5" y="9" width="1" height="1" fill="#000080"/><rect x="6" y="9" width="3" height="1" fill="#ffff99"/><rect x="9" y="9" width="1" height="1" fill="#000080"/><rect x="10" y="9" width="4" height="1" fill="#ffff99"/><rect x="14" y="9" width="1" height="1" fill="#c8c8d8"/><rect x="1" y="10" width="1" height="1" fill="#808080"/><rect x="2" y="10" width="3" height="1" fill="#ffff99"/><rect x="5" y="10" width="1" height="1" fill="#000080"/><rect x="6" y="10" width="1" height="1" fill="#ffff99"/><rect x="7" y="10" width="1" height="1" fill="#000080"/><rect x="8" y="10" width="1" height="1" fill="#ffff99"/><rect x="9" y="10" width="4" height="1" fill="#000080"/><rect x="13" y="10" width="1" height="1" fill="#ffff99"/><rect x="14" y="10" width="1" height="1" fill="#c8c8d8"/><rect x="1" y="11" width="1" height="1" fill="#808080"/><rect x="2" y="11" width="12" height="1" fill="#ffff99"/><rect x="2" y="12" width="12" height="1" fill="#ffff99"/><rect x="3" y="13" width="10" height="1" fill="#c8c8d8"/></svg>
<div class="t" style="left:102px;top:480px;">Коэффициент убывания коррекции</div>
<div class="dh" style="left:53px;top:504px;width:7px;"></div>
<div class="a" style="left:44px;top:500px;width:9px;height:9px;background:#808080;"></div>
<div class="a" style="left:45px;top:501px;width:7px;height:7px;background:#fff;"></div>
<div class="a" style="left:46px;top:504px;width:5px;height:1px;background:#000;"></div>
<svg class="ic" style="left:60px;top:496px;" width="16" height="16" viewBox="0 0 16 16" shape-rendering="crispEdges"><rect x="4" y="1" width="3" height="1" fill="#808080"/><rect x="3" y="2" width="1" height="1" fill="#808080"/><rect x="4" y="2" width="3" height="1" fill="#fff"/><rect x="7" y="2" width="1" height="1" fill="#808080"/><rect x="2" y="3" width="1" height="1" fill="#808080"/><rect x="3" y="3" width="2" height="1" fill="#fff"/><rect x="5" y="3" width="1" height="1" fill="#ffff00"/><rect x="6" y="3" width="2" height="1" fill="#fff"/><rect x="8" y="3" width="6" height="1" fill="#808080"/><rect x="2" y="4" width="1" height="1" fill="#808080"/><rect x="3" y="4" width="1" height="1" fill="#fff"/><rect x="4" y="4" width="1" height="1" fill="#ffff00"/><rect x="5" y="4" width="1" height="1" fill="#fff"/><rect x="6" y="4" width="1" height="1" fill="#ffff00"/><rect x="7" y="4" width="7" height="1" fill="#fff"/><rect x="14" y="4" width="1" height="1" fill="#000"/><rect x="2" y="5" width="1" height="1" fill="#808080"/><rect x="3" y="5" width="2" height="1" fill="#fff"/><rect x="5" y="5" width="1" height="1" fill="#ffff00"/><rect x="6" y="5" width="1" height="1" fill="#fff"/><rect x="7" y="5" width="1" height="1" fill="#ffff00"/><rect x="8" y="5" width="1" height="1" fill="#fff"/><rect x="9" y="5" width="1" height="1" fill="#ffff00"/><rect x="10" y="5" width="1" height="1" fill="#fff"/><rect x="11" y="5" width="1" height="1" fill="#ffff00"/><rect x="12" y="5" width="2" height="1" fill="#fff"/><rect x="14" y="5" width="1" height="1" fill="#000"/><rect x="1" y="6" width="10" height="1" fill="#808080"/><rect x="11" y="6" width="1" height="1" fill="#000"/><rect x="12" y="6" width="1" height="1" fill="#ffff00"/><rect x="13" y="6" width="1" height="1" fill="#fff"/><rect x="14" y="6" width="1" height="1" fill="#000"/><rect x="1" y="7" width="1" height="1" fill="#808080"/><rect x="2" y="7" width="1" height="1" fill="#fff"/><rect x="3" y="7" width="1" height="1" fill="#ffff00"/><rect x="4" y="7" width="1" height="1" fill="#fff"/><rect x="5" y="7" width="1" height="1" fill="#ffff00"/><rect x="6" y="7" width="1" height="1" fill="#fff"/><rect x="7" y="7" width="1" height="1" fill="#ffff00"/><rect x="8" y="7" width="1" height="1" fill="#fff"/><rect x="9" y="7" width="1" height="1" fill="#ffff00"/><rect x="10" y="7" width="1" height="1" fill="#fff"/><rect x="11" y="7" width="1" height="1" fill="#000"/><rect x="12" y="7" width="1" height="1" fill="#fff"/><rect x="13" y="7" width="1" height="1" fill="#ffff00"/><rect x="14" y="7" width="1" height="1" fill="#000"/><rect x="1" y="8" width="2" height="1" fill="#808080"/><rect x="3" y="8" width="1" height="1" fill="#fff"/><rect x="4" y="8" width="1" height="1" fill="#ffff00"/><rect x="5" y="8" width="1" height="1" fill="#fff"/><rect x="6" y="8" width="1" height="1" fill="#ffff00"/><rect x="7" y="8" width="1" height="1" fill="#fff"/><rect x="8" y="8" width="1" height="1" fill="#ffff00"/><rect x="9" y="8" width="1" height="1" fill="#fff"/><rect x="10" y="8" width="1" height="1" fill="#ffff00"/><rect x="11" y="8" width="2" height="1" fill="#000"/><rect x="13" y="8" width="1" height="1" fill="#fff"/><rect x="14" y="8" width="1" height="1" fill="#000"/><rect x="2" y="9" width="1" height="1" fill="#808080"/><rect x="3" y="9" width="1" height="1" fill="#ffff00"/><rect x="4" y="9" width="1" height="1" fill="#fff"/><rect x="5" y="9" width="1" height="1" fill="#ffff00"/><rect x="6" y="9" width="1" height="1" fill="#fff"/><rect x="7" y="9" width="1" height="1" fill="#ffff00"/><rect x="8" y="9" width="1" height="1" fill="#fff"/><rect x="9" y="9" width="1" height="1" fill="#ffff00"/><rect x="10" y="9" width="1" height="1" fill="#fff"/><rect x="11" y="9" width="1" height="1" fill="#ffff00"/><rect x="12" y="9" width="1" height="1" fill="#000"/><rect x="13" y="9" width="1" height="1" fill="#ffff00"/><rect x="14" y="9" width="1" height="1" fill="#000"/><rect x="2" y="10" width="1" height="1" fill="#808080"/><rect x="3" y="10" width="1" height="1" fill="#fff"/><rect x="4" y="10" width="1" height="1" fill="#ffff00"/><rect x="5" y="10" width="1" height="1" fill="#fff"/><rect x="6" y="10" width="1" height="1" fill="#ffff00"/><rect x="7" y="10" width="1" height="1" fill="#fff"/><rect x="8" y="10" width="1" height="1" fill="#ffff00"/><rect x="9" y="10" width="1" height="1" fill="#fff"/><rect x="10" y="10" width="1" height="1" fill="#ffff00"/><rect x="11" y="10" width="1" height="1" fill="#fff"/><rect x="12" y="10" width="3" height="1" fill="#000"/><rect x="2" y="11" width="2" height="1" fill="#808080"/><rect x="4" y="11" width="1" height="1" fill="#fff"/><rect x="5" y="11" width="1" height="1" fill="#ffff00"/><rect x="6" y="11" width="1" height="1" fill="#fff"/><rect x="7" y="11" width="1" height="1" fill="#ffff00"/><rect x="8" y="11" width="1" height="1" fill="#fff"/><rect x="9" y="11" width="1" height="1" fill="#ffff00"/><rect x="10" y="11" width="1" height="1" fill="#fff"/><rect x="11" y="11" width="1" height="1" fill="#ffff00"/><rect x="12" y="11" width="1" height="1" fill="#fff"/><rect x="13" y="11" width="2" height="1" fill="#000"/><rect x="3" y="12" width="10" height="1" fill="#808080"/><rect x="13" y="12" width="2" height="1" fill="#000"/><rect x="4" y="13" width="11" height="1" fill="#000"/></svg>
<div class="t" style="left:82px;top:496px;">Состав смеси на пуске</div>
<div class="dh" style="left:69px;top:520px;width:11px;"></div>
<svg class="ic" style="left:80px;top:512px;" width="16" height="16" viewBox="0 0 16 16" shape-rendering="crispEdges"><rect x="3" y="1" width="10" height="1" fill="#808080"/><rect x="2" y="2" width="1" height="1" fill="#808080"/><rect x="3" y="2" width="1" height="1" fill="#c0c0c0"/><rect x="4" y="2" width="2" height="1" fill="#ffff99"/><rect x="6" y="2" width="1" height="1" fill="#c0c0c0"/><rect x="7" y="2" width="2" height="1" fill="#ffff99"/><rect x="9" y="2" width="1" height="1" fill="#c0c0c0"/><rect x="10" y="2" width="2" height="1" fill="#ffff99"/><rect x="12" y="2" width="1" height="1" fill="#c0c0c0"/><rect x="13" y="2" width="1" height="1" fill="#808080"/><rect x="1" y="3" width="1" height="1" fill="#808080"/><rect x="2" y="3" width="12" height="1" fill="#c0c0c0"/><rect x="14" y="3" width="1" height="1" fill="#808080"/><rect x="1" y="4" width="1" height="1" fill="#808080"/><rect x="2" y="4" width="1" height="1" fill="#ffff99"/><rect x="3" y="4" width="1" height="1" fill="#c0c0c0"/><rect x="4" y="4" width="2" height="1" fill="#ffff99"/><rect x="6" y="4" width="1" height="1" fill="#c0c0c0"/><rect x="7" y="4" width="2" height="1" fill="#ffff99"/><rect x="9" y="4" width="1" height="1" fill="#c0c0c0"/><rect x="10" y="4" width="2" height="1" fill="#ffff99"/><rect x="12" y="4" width="1" height="1" fill="#c0c0c0"/><rect x="13" y="4" width="1" height="1" fill="#ffff99"/><rect x="14" y="4" width="1" height="1" fill="#808080"/><rect x="1" y="5" width="1" height="1" fill="#808080"/><rect x="2" y="5" width="1" height="1" fill="#ffff99"/><rect x="3" y="5" width="1" height="1" fill="#c0c0c0"/><rect x="4" y="5" width="2" height="1" fill="#ffff99"/><rect x="6" y="5" width="1" height="1" fill="#c0c0c0"/><rect x="7" y="5" width="2" height="1" fill="#ffff99"/><rect x="9" y="5" width="1" height="1" fill="#c0c0c0"/><rect x="10" y="5" width="2" height="1" fill="#ffff99"/><rect x="12" y="5" width="1" height="1" fill="#c0c0c0"/><rect x="13" y="5" width="1" height="1" fill="#ffff99"/><rect x="14" y="5" width="1" height="1" fill="#808080"/><rect x="1" y="6" width="1" height="1" fill="#808080"/><rect x="2" y="6" width="12" height="1" fill="#c0c0c0"/><rect x="14" y="6" width="1" height="1" fill="#808080"/><rect x="1" y="7" width="1" height="1" fill="#808080"/><rect x="2" y="7" width="1" height="1" fill="#ffff99"/><rect x="3" y="7" width="1" height="1" fill="#c0c0c0"/><rect x="4" y="7" width="2" height="1" fill="#ffff99"/><rect x="6" y="7" width="1" height="1" fill="#c0c0c0"/><rect x="7" y="7" width="2" height="1" fill="#ffff99"/><rect x="9" y="7" width="1" height="1" fill="#c0c0c0"/><rect x="10" y="7" width="2" height="1" fill="#ffff99"/><rect x="12" y="7" width="1" height="1" fill="#c0c0c0"/><rect x="13" y="7" width="1" height="1" fill="#ffff99"/><rect x="14" y="7" width="1" height="1" fill="#808080"/><rect x="1" y="8" width="1" height="1" fill="#808080"/><rect x="2" y="8" width="1" height="1" fill="#ffff99"/><rect x="3" y="8" width="1" height="1" fill="#c0c0c0"/><rect x="4" y="8" width="2" height="1" fill="#ffff99"/><rect x="6" y="8" width="1" height="1" fill="#c0c0c0"/><rect x="7" y="8" width="2" height="1" fill="#ffff99"/><rect x="9" y="8" width="1" height="1" fill="#c0c0c0"/><rect x="10" y="8" width="2" height="1" fill="#ffff99"/><rect x="12" y="8" width="1" height="1" fill="#c0c0c0"/><rect x="13" y="8" width="1" height="1" fill="#ffff99"/><rect x="14" y="8" width="1" height="1" fill="#808080"/><rect x="1" y="9" width="1" height="1" fill="#808080"/><rect x="2" y="9" width="12" height="1" fill="#c0c0c0"/><rect x="14" y="9" width="1" height="1" fill="#808080"/><rect x="1" y="10" width="1" height="1" fill="#808080"/><rect x="2" y="10" width="1" height="1" fill="#ffff99"/><rect x="3" y="10" width="1" height="1" fill="#c0c0c0"/><rect x="4" y="10" width="2" height="1" fill="#ffff99"/><rect x="6" y="10" width="1" height="1" fill="#c0c0c0"/><rect x="7" y="10" width="2" height="1" fill="#ffff99"/><rect x="9" y="10" width="1" height="1" fill="#c0c0c0"/><rect x="10" y="10" width="2" height="1" fill="#ffff99"/><rect x="12" y="10" width="1" height="1" fill="#c0c0c0"/><rect x="13" y="10" width="1" height="1" fill="#ffff99"/><rect x="14" y="10" width="1" height="1" fill="#808080"/><rect x="1" y="11" width="1" height="1" fill="#808080"/><rect x="2" y="11" width="1" height="1" fill="#ffff99"/><rect x="3" y="11" width="1" height="1" fill="#c0c0c0"/><rect x="4" y="11" width="2" height="1" fill="#ffff99"/><rect x="6" y="11" width="1" height="1" fill="#c0c0c0"/><rect x="7" y="11" width="2" height="1" fill="#ffff99"/><rect x="9" y="11" width="1" height="1" fill="#c0c0c0"/><rect x="10" y="11" width="2" height="1" fill="#ffff99"/><rect x="12" y="11" width="1" height="1" fill="#c0c0c0"/><rect x="13" y="11" width="1" height="1" fill="#ffff99"/><rect x="14" y="11" width="1" height="1" fill="#808080"/><rect x="1" y="12" width="1" height="1" fill="#808080"/><rect x="2" y="12" width="12" height="1" fill="#c0c0c0"/><rect x="14" y="12" width="1" height="1" fill="#808080"/><rect x="2" y="13" width="1" height="1" fill="#808080"/><rect x="3" y="13" width="1" height="1" fill="#c0c0c0"/><rect x="4" y="13" width="2" height="1" fill="#ffff99"/><rect x="6" y="13" width="1" height="1" fill="#c0c0c0"/><rect x="7" y="13" width="2" height="1" fill="#ffff99"/><rect x="9" y="13" width="1" height="1" fill="#c0c0c0"/><rect x="10" y="13" width="2" height="1" fill="#ffff99"/><rect x="12" y="13" width="1" height="1" fill="#c0c0c0"/><rect x="13" y="13" width="1" height="1" fill="#808080"/><rect x="3" y="14" width="10" height="1" fill="#808080"/><polyline points="2,10.5 3.8,10.5 5.5,8.6 7.5,10.6 8.6,9 9.8,5.8 11.5,3.6 12.6,5.5 13,8.8 14.2,10.2" stroke="#ff0000" stroke-width="1.25" fill="none" shape-rendering="auto"/></svg>
<div class="t" style="left:102px;top:512px;">Базовый состав смеси</div>
<div class="dh" style="left:69px;top:536px;width:11px;"></div>
<svg class="ic" style="left:80px;top:528px;" width="16" height="16" viewBox="0 0 16 16" shape-rendering="crispEdges"><rect x="3" y="1" width="10" height="1" fill="#808080"/><rect x="2" y="2" width="12" height="1" fill="#ffff99"/><rect x="1" y="3" width="1" height="1" fill="#808080"/><rect x="2" y="3" width="3" height="1" fill="#ffff99"/><rect x="5" y="3" width="1" height="1" fill="#000080"/><rect x="6" y="3" width="4" height="1" fill="#ffff99"/><rect x="10" y="3" width="2" height="1" fill="#000080"/><rect x="12" y="3" width="2" height="1" fill="#ffff99"/><rect x="14" y="3" width="1" height="1" fill="#c8c8d8"/><rect x="1" y="4" width="1" height="1" fill="#808080"/><rect x="2" y="4" width="2" height="1" fill="#ffff99"/><rect x="4" y="4" width="2" height="1" fill="#000080"/><rect x="6" y="4" width="3" height="1" fill="#ffff99"/><rect x="9" y="4" width="1" height="1" fill="#000080"/><rect x="10" y="4" width="2" height="1" fill="#ffff99"/><rect x="12" y="4" width="1" height="1" fill="#000080"/><rect x="13" y="4" width="1" height="1" fill="#ffff99"/><rect x="14" y="4" width="1" height="1" fill="#c8c8d8"/><rect x="1" y="5" width="1" height="1" fill="#808080"/><rect x="2" y="5" width="1" height="1" fill="#ffff99"/><rect x="3" y="5" width="1" height="1" fill="#000080"/><rect x="4" y="5" width="1" height="1" fill="#ffff99"/><rect x="5" y="5" width="1" height="1" fill="#000080"/><rect x="6" y="5" width="6" height="1" fill="#ffff99"/><rect x="12" y="5" width="1" height="1" fill="#000080"/><rect x="13" y="5" width="1" height="1" fill="#ffff99"/><rect x="14" y="5" width="1" height="1" fill="#c8c8d8"/><rect x="1" y="6" width="1" height="1" fill="#808080"/><rect x="2" y="6" width="3" height="1" fill="#ffff99"/><rect x="5" y="6" width="1" height="1" fill="#000080"/><rect x="6" y="6" width="6" height="1" fill="#ffff99"/><rect x="12" y="6" width="1" height="1" fill="#000080"/><rect x="13" y="6" width="1" height="1" fill="#ffff99"/><rect x="14" y="6" width="1" height="1" fill="#c8c8d8"/><rect x="1" y="7" width="1" height="1" fill="#808080"/><rect x="2" y="7" width="3" height="1" fill="#ffff99"/><rect x="5" y="7" width="1" height="1" fill="#000080"/><rect x="6" y="7" width="5" height="1" fill="#ffff99"/><rect x="11" y="7" width="1" height="1" fill="#000080"/><rect x="12" y="7" width="2" height="1" fill="#ffff99"/><rect x="14" y="7" width="1" height="1" fill="#c8c8d8"/><rect x="1" y="8" width="1" height="1" fill="#808080"/><rect x="2" y="8" width="3" height="1" fill="#ffff99"/><rect x="5" y="8" width="1" height="1" fill="#000080"/><rect x="6" y="8" width="4" height="1" fill="#ffff99"/><rect x="10" y="8" width="1" height="1" fill="#000080"/><rect x="11" y="8" width="3" height="1" fill="#ffff99"/><rect x="14" y="8" width="1" height="1" fill="#c8c8d8"/><rect x="1" y="9" width="1" height="1" fill="#808080"/><rect x="2" y="9" width="3" height="1" fill="#ffff99"/><rect x="5" y="9" width="1" height="1" fill="#000080"/><rect x="6" y="9" width="3" height="1" fill="#ffff99"/><rect x="9" y="9" width="1" height="1" fill="#000080"/><rect x="10" y="9" width="4" height="1" fill="#ffff99"/><rect x="14" y="9" width="1" height="1" fill="#c8c8d8"/><rect x="1" y="10" width="1" height="1" fill="#808080"/><rect x="2" y="10" width="3" height="1" fill="#ffff99"/><rect x="5" y="10" width="1" height="1" fill="#000080"/><rect x="6" y="10" width="1" height="1" fill="#ffff99"/><rect x="7" y="10" width="1" height="1" fill="#000080"/><rect x="8" y="10" width="1" height="1" fill="#ffff99"/><rect x="9" y="10" width="4" height="1" fill="#000080"/><rect x="13" y="10" width="1" height="1" fill="#ffff99"/><rect x="14" y="10" width="1" height="1" fill="#c8c8d8"/><rect x="1" y="11" width="1" height="1" fill="#808080"/><rect x="2" y="11" width="12" height="1" fill="#ffff99"/><rect x="2" y="12" width="12" height="1" fill="#ffff99"/><rect x="3" y="13" width="10" height="1" fill="#c8c8d8"/></svg>
<div class="t" style="left:102px;top:528px;">Начальная поправка базового состава</div>
<div class="dh" style="left:69px;top:552px;width:11px;"></div>
<svg class="ic" style="left:80px;top:544px;" width="16" height="16" viewBox="0 0 16 16" shape-rendering="crispEdges"><rect x="3" y="1" width="10" height="1" fill="#808080"/><rect x="2" y="2" width="12" height="1" fill="#ffff99"/><rect x="1" y="3" width="1" height="1" fill="#808080"/><rect x="2" y="3" width="3" height="1" fill="#ffff99"/><rect x="5" y="3" width="1" height="1" fill="#000080"/><rect x="6" y="3" width="4" height="1" fill="#ffff99"/><rect x="10" y="3" width="2" height="1" fill="#000080"/><rect x="12" y="3" width="2" height="1" fill="#ffff99"/><rect x="14" y="3" width="1" height="1" fill="#c8c8d8"/><rect x="1" y="4" width="1" height="1" fill="#808080"/><rect x="2" y="4" width="2" height="1" fill="#ffff99"/><rect x="4" y="4" width="2" height="1" fill="#000080"/><rect x="6" y="4" width="3" height="1" fill="#ffff99"/><rect x="9" y="4" width="1" height="1" fill="#000080"/><rect x="10" y="4" width="2" height="1" fill="#ffff99"/><rect x="12" y="4" width="1" height="1" fill="#000080"/><rect x="13" y="4" width="1" height="1" fill="#ffff99"/><rect x="14" y="4" width="1" height="1" fill="#c8c8d8"/><rect x="1" y="5" width="1" height="1" fill="#808080"/><rect x="2" y="5" width="1" height="1" fill="#ffff99"/><rect x="3" y="5" width="1" height="1" fill="#000080"/><rect x="4" y="5" width="1" height="1" fill="#ffff99"/><rect x="5" y="5" width="1" height="1" fill="#000080"/><rect x="6" y="5" width="6" height="1" fill="#ffff99"/><rect x="12" y="5" width="1" height="1" fill="#000080"/><rect x="13" y="5" width="1" height="1" fill="#ffff99"/><rect x="14" y="5" width="1" height="1" fill="#c8c8d8"/><rect x="1" y="6" width="1" height="1" fill="#808080"/><rect x="2" y="6" width="3" height="1" fill="#ffff99"/><rect x="5" y="6" width="1" height="1" fill="#000080"/><rect x="6" y="6" width="6" height="1" fill="#ffff99"/><rect x="12" y="6" width="1" height="1" fill="#000080"/><rect x="13" y="6" width="1" height="1" fill="#ffff99"/><rect x="14" y="6" width="1" height="1" fill="#c8c8d8"/><rect x="1" y="7" width="1" height="1" fill="#808080"/><rect x="2" y="7" width="3" height="1" fill="#ffff99"/><rect x="5" y="7" width="1" height="1" fill="#000080"/><rect x="6" y="7" width="5" height="1" fill="#ffff99"/><rect x="11" y="7" width="1" height="1" fill="#000080"/><rect x="12" y="7" width="2" height="1" fill="#ffff99"/><rect x="14" y="7" width="1" height="1" fill="#c8c8d8"/><rect x="1" y="8" width="1" height="1" fill="#808080"/><rect x="2" y="8" width="3" height="1" fill="#ffff99"/><rect x="5" y="8" width="1" height="1" fill="#000080"/><rect x="6" y="8" width="4" height="1" fill="#ffff99"/><rect x="10" y="8" width="1" height="1" fill="#000080"/><rect x="11" y="8" width="3" height="1" fill="#ffff99"/><rect x="14" y="8" width="1" height="1" fill="#c8c8d8"/><rect x="1" y="9" width="1" height="1" fill="#808080"/><rect x="2" y="9" width="3" height="1" fill="#ffff99"/><rect x="5" y="9" width="1" height="1" fill="#000080"/><rect x="6" y="9" width="3" height="1" fill="#ffff99"/><rect x="9" y="9" width="1" height="1" fill="#000080"/><rect x="10" y="9" width="4" height="1" fill="#ffff99"/><rect x="14" y="9" width="1" height="1" fill="#c8c8d8"/><rect x="1" y="10" width="1" height="1" fill="#808080"/><rect x="2" y="10" width="3" height="1" fill="#ffff99"/><rect x="5" y="10" width="1" height="1" fill="#000080"/><rect x="6" y="10" width="1" height="1" fill="#ffff99"/><rect x="7" y="10" width="1" height="1" fill="#000080"/><rect x="8" y="10" width="1" height="1" fill="#ffff99"/><rect x="9" y="10" width="4" height="1" fill="#000080"/><rect x="13" y="10" width="1" height="1" fill="#ffff99"/><rect x="14" y="10" width="1" height="1" fill="#c8c8d8"/><rect x="1" y="11" width="1" height="1" fill="#808080"/><rect x="2" y="11" width="12" height="1" fill="#ffff99"/><rect x="2" y="12" width="12" height="1" fill="#ffff99"/><rect x="3" y="13" width="10" height="1" fill="#c8c8d8"/></svg>
<div class="t" style="left:102px;top:544px;">Коэффициент убывания поправки базового состава</div>
<div class="dh" style="left:69px;top:568px;width:11px;"></div>
<svg class="ic" style="left:80px;top:560px;" width="16" height="16" viewBox="0 0 16 16" shape-rendering="crispEdges"><rect x="3" y="1" width="10" height="1" fill="#808080"/><rect x="2" y="2" width="1" height="1" fill="#808080"/><rect x="3" y="2" width="1" height="1" fill="#c0c0c0"/><rect x="4" y="2" width="2" height="1" fill="#ffff99"/><rect x="6" y="2" width="1" height="1" fill="#c0c0c0"/><rect x="7" y="2" width="2" height="1" fill="#ffff99"/><rect x="9" y="2" width="1" height="1" fill="#c0c0c0"/><rect x="10" y="2" width="2" height="1" fill="#ffff99"/><rect x="12" y="2" width="1" height="1" fill="#c0c0c0"/><rect x="13" y="2" width="1" height="1" fill="#808080"/><rect x="1" y="3" width="1" height="1" fill="#808080"/><rect x="2" y="3" width="12" height="1" fill="#c0c0c0"/><rect x="14" y="3" width="1" height="1" fill="#808080"/><rect x="1" y="4" width="1" height="1" fill="#808080"/><rect x="2" y="4" width="1" height="1" fill="#ffff99"/><rect x="3" y="4" width="1" height="1" fill="#c0c0c0"/><rect x="4" y="4" width="2" height="1" fill="#ffff99"/><rect x="6" y="4" width="1" height="1" fill="#c0c0c0"/><rect x="7" y="4" width="2" height="1" fill="#ffff99"/><rect x="9" y="4" width="1" height="1" fill="#c0c0c0"/><rect x="10" y="4" width="2" height="1" fill="#ffff99"/><rect x="12" y="4" width="1" height="1" fill="#c0c0c0"/><rect x="13" y="4" width="1" height="1" fill="#ffff99"/><rect x="14" y="4" width="1" height="1" fill="#808080"/><rect x="1" y="5" width="1" height="1" fill="#808080"/><rect x="2" y="5" width="1" height="1" fill="#ffff99"/><rect x="3" y="5" width="1" height="1" fill="#c0c0c0"/><rect x="4" y="5" width="2" height="1" fill="#ffff99"/><rect x="6" y="5" width="1" height="1" fill="#c0c0c0"/><rect x="7" y="5" width="2" height="1" fill="#ffff99"/><rect x="9" y="5" width="1" height="1" fill="#c0c0c0"/><rect x="10" y="5" width="2" height="1" fill="#ffff99"/><rect x="12" y="5" width="1" height="1" fill="#c0c0c0"/><rect x="13" y="5" width="1" height="1" fill="#ffff99"/><rect x="14" y="5" width="1" height="1" fill="#808080"/><rect x="1" y="6" width="1" height="1" fill="#808080"/><rect x="2" y="6" width="12" height="1" fill="#c0c0c0"/><rect x="14" y="6" width="1" height="1" fill="#808080"/><rect x="1" y="7" width="1" height="1" fill="#808080"/><rect x="2" y="7" width="1" height="1" fill="#ffff99"/><rect x="3" y="7" width="1" height="1" fill="#c0c0c0"/><rect x="4" y="7" width="2" height="1" fill="#ffff99"/><rect x="6" y="7" width="1" height="1" fill="#c0c0c0"/><rect x="7" y="7" width="2" height="1" fill="#ffff99"/><rect x="9" y="7" width="1" height="1" fill="#c0c0c0"/><rect x="10" y="7" width="2" height="1" fill="#ffff99"/><rect x="12" y="7" width="1" height="1" fill="#c0c0c0"/><rect x="13" y="7" width="1" height="1" fill="#ffff99"/><rect x="14" y="7" width="1" height="1" fill="#808080"/><rect x="1" y="8" width="1" height="1" fill="#808080"/><rect x="2" y="8" width="1" height="1" fill="#ffff99"/><rect x="3" y="8" width="1" height="1" fill="#c0c0c0"/><rect x="4" y="8" width="2" height="1" fill="#ffff99"/><rect x="6" y="8" width="1" height="1" fill="#c0c0c0"/><rect x="7" y="8" width="2" height="1" fill="#ffff99"/><rect x="9" y="8" width="1" height="1" fill="#c0c0c0"/><rect x="10" y="8" width="2" height="1" fill="#ffff99"/><rect x="12" y="8" width="1" height="1" fill="#c0c0c0"/><rect x="13" y="8" width="1" height="1" fill="#ffff99"/><rect x="14" y="8" width="1" height="1" fill="#808080"/><rect x="1" y="9" width="1" height="1" fill="#808080"/><rect x="2" y="9" width="12" height="1" fill="#c0c0c0"/><rect x="14" y="9" width="1" height="1" fill="#808080"/><rect x="1" y="10" width="1" height="1" fill="#808080"/><rect x="2" y="10" width="1" height="1" fill="#ffff99"/><rect x="3" y="10" width="1" height="1" fill="#c0c0c0"/><rect x="4" y="10" width="2" height="1" fill="#ffff99"/><rect x="6" y="10" width="1" height="1" fill="#c0c0c0"/><rect x="7" y="10" width="2" height="1" fill="#ffff99"/><rect x="9" y="10" width="1" height="1" fill="#c0c0c0"/><rect x="10" y="10" width="2" height="1" fill="#ffff99"/><rect x="12" y="10" width="1" height="1" fill="#c0c0c0"/><rect x="13" y="10" width="1" height="1" fill="#ffff99"/><rect x="14" y="10" width="1" height="1" fill="#808080"/><rect x="1" y="11" width="1" height="1" fill="#808080"/><rect x="2" y="11" width="1" height="1" fill="#ffff99"/><rect x="3" y="11" width="1" height="1" fill="#c0c0c0"/><rect x="4" y="11" width="2" height="1" fill="#ffff99"/><rect x="6" y="11" width="1" height="1" fill="#c0c0c0"/><rect x="7" y="11" width="2" height="1" fill="#ffff99"/><rect x="9" y="11" width="1" height="1" fill="#c0c0c0"/><rect x="10" y="11" width="2" height="1" fill="#ffff99"/><rect x="12" y="11" width="1" height="1" fill="#c0c0c0"/><rect x="13" y="11" width="1" height="1" fill="#ffff99"/><rect x="14" y="11" width="1" height="1" fill="#808080"/><rect x="1" y="12" width="1" height="1" fill="#808080"/><rect x="2" y="12" width="12" height="1" fill="#c0c0c0"/><rect x="14" y="12" width="1" height="1" fill="#808080"/><rect x="2" y="13" width="1" height="1" fill="#808080"/><rect x="3" y="13" width="1" height="1" fill="#c0c0c0"/><rect x="4" y="13" width="2" height="1" fill="#ffff99"/><rect x="6" y="13" width="1" height="1" fill="#c0c0c0"/><rect x="7" y="13" width="2" height="1" fill="#ffff99"/><rect x="9" y="13" width="1" height="1" fill="#c0c0c0"/><rect x="10" y="13" width="2" height="1" fill="#ffff99"/><rect x="12" y="13" width="1" height="1" fill="#c0c0c0"/><rect x="13" y="13" width="1" height="1" fill="#808080"/><rect x="3" y="14" width="10" height="1" fill="#808080"/><polyline points="2,10.5 3.8,10.5 5.5,8.6 7.5,10.6 8.6,9 9.8,5.8 11.5,3.6 12.6,5.5 13,8.8 14.2,10.2" stroke="#ff0000" stroke-width="1.25" fill="none" shape-rendering="auto"/></svg>
<div class="t" style="left:102px;top:560px;">Задержка убывания поправки</div>
<div class="dh" style="left:69px;top:584px;width:11px;"></div>
<svg class="ic" style="left:80px;top:576px;" width="16" height="16" viewBox="0 0 16 16" shape-rendering="crispEdges"><rect x="3" y="1" width="10" height="1" fill="#808080"/><rect x="2" y="2" width="12" height="1" fill="#ffff99"/><rect x="1" y="3" width="1" height="1" fill="#808080"/><rect x="2" y="3" width="3" height="1" fill="#ffff99"/><rect x="5" y="3" width="1" height="1" fill="#000080"/><rect x="6" y="3" width="4" height="1" fill="#ffff99"/><rect x="10" y="3" width="2" height="1" fill="#000080"/><rect x="12" y="3" width="2" height="1" fill="#ffff99"/><rect x="14" y="3" width="1" height="1" fill="#c8c8d8"/><rect x="1" y="4" width="1" height="1" fill="#808080"/><rect x="2" y="4" width="2" height="1" fill="#ffff99"/><rect x="4" y="4" width="2" height="1" fill="#000080"/><rect x="6" y="4" width="3" height="1" fill="#ffff99"/><rect x="9" y="4" width="1" height="1" fill="#000080"/><rect x="10" y="4" width="2" height="1" fill="#ffff99"/><rect x="12" y="4" width="1" height="1" fill="#000080"/><rect x="13" y="4" width="1" height="1" fill="#ffff99"/><rect x="14" y="4" width="1" height="1" fill="#c8c8d8"/><rect x="1" y="5" width="1" height="1" fill="#808080"/><rect x="2" y="5" width="1" height="1" fill="#ffff99"/><rect x="3" y="5" width="1" height="1" fill="#000080"/><rect x="4" y="5" width="1" height="1" fill="#ffff99"/><rect x="5" y="5" width="1" height="1" fill="#000080"/><rect x="6" y="5" width="6" height="1" fill="#ffff99"/><rect x="12" y="5" width="1" height="1" fill="#000080"/><rect x="13" y="5" width="1" height="1" fill="#ffff99"/><rect x="14" y="5" width="1" height="1" fill="#c8c8d8"/><rect x="1" y="6" width="1" height="1" fill="#808080"/><rect x="2" y="6" width="3" height="1" fill="#ffff99"/><rect x="5" y="6" width="1" height="1" fill="#000080"/><rect x="6" y="6" width="6" height="1" fill="#ffff99"/><rect x="12" y="6" width="1" height="1" fill="#000080"/><rect x="13" y="6" width="1" height="1" fill="#ffff99"/><rect x="14" y="6" width="1" height="1" fill="#c8c8d8"/><rect x="1" y="7" width="1" height="1" fill="#808080"/><rect x="2" y="7" width="3" height="1" fill="#ffff99"/><rect x="5" y="7" width="1" height="1" fill="#000080"/><rect x="6" y="7" width="5" height="1" fill="#ffff99"/><rect x="11" y="7" width="1" height="1" fill="#000080"/><rect x="12" y="7" width="2" height="1" fill="#ffff99"/><rect x="14" y="7" width="1" height="1" fill="#c8c8d8"/><rect x="1" y="8" width="1" height="1" fill="#808080"/><rect x="2" y="8" width="3" height="1" fill="#ffff99"/><rect x="5" y="8" width="1" height="1" fill="#000080"/><rect x="6" y="8" width="4" height="1" fill="#ffff99"/><rect x="10" y="8" width="1" height="1" fill="#000080"/><rect x="11" y="8" width="3" height="1" fill="#ffff99"/><rect x="14" y="8" width="1" height="1" fill="#c8c8d8"/><rect x="1" y="9" width="1" height="1" fill="#808080"/><rect x="2" y="9" width="3" height="1" fill="#ffff99"/><rect x="5" y="9" width="1" height="1" fill="#000080"/><rect x="6" y="9" width="3" height="1" fill="#ffff99"/><rect x="9" y="9" width="1" height="1" fill="#000080"/><rect x="10" y="9" width="4" height="1" fill="#ffff99"/><rect x="14" y="9" width="1" height="1" fill="#c8c8d8"/><rect x="1" y="10" width="1" height="1" fill="#808080"/><rect x="2" y="10" width="3" height="1" fill="#ffff99"/><rect x="5" y="10" width="1" height="1" fill="#000080"/><rect x="6" y="10" width="1" height="1" fill="#ffff99"/><rect x="7" y="10" width="1" height="1" fill="#000080"/><rect x="8" y="10" width="1" height="1" fill="#ffff99"/><rect x="9" y="10" width="4" height="1" fill="#000080"/><rect x="13" y="10" width="1" height="1" fill="#ffff99"/><rect x="14" y="10" width="1" height="1" fill="#c8c8d8"/><rect x="1" y="11" width="1" height="1" fill="#808080"/><rect x="2" y="11" width="12" height="1" fill="#ffff99"/><rect x="2" y="12" width="12" height="1" fill="#ffff99"/><rect x="3" y="13" width="10" height="1" fill="#c8c8d8"/></svg>
<div class="t" style="left:102px;top:576px;">Коэффициент убывания коррекции после пуска</div>
<div class="dh" style="left:69px;top:600px;width:11px;"></div>
<svg class="ic" style="left:80px;top:592px;" width="16" height="16" viewBox="0 0 16 16" shape-rendering="crispEdges"><rect x="3" y="1" width="10" height="1" fill="#808080"/><rect x="2" y="2" width="1" height="1" fill="#808080"/><rect x="3" y="2" width="1" height="1" fill="#c0c0c0"/><rect x="4" y="2" width="2" height="1" fill="#ffff99"/><rect x="6" y="2" width="1" height="1" fill="#c0c0c0"/><rect x="7" y="2" width="2" height="1" fill="#ffff99"/><rect x="9" y="2" width="1" height="1" fill="#c0c0c0"/><rect x="10" y="2" width="2" height="1" fill="#ffff99"/><rect x="12" y="2" width="1" height="1" fill="#c0c0c0"/><rect x="13" y="2" width="1" height="1" fill="#808080"/><rect x="1" y="3" width="1" height="1" fill="#808080"/><rect x="2" y="3" width="12" height="1" fill="#c0c0c0"/><rect x="14" y="3" width="1" height="1" fill="#808080"/><rect x="1" y="4" width="1" height="1" fill="#808080"/><rect x="2" y="4" width="1" height="1" fill="#ffff99"/><rect x="3" y="4" width="1" height="1" fill="#c0c0c0"/><rect x="4" y="4" width="2" height="1" fill="#ffff99"/><rect x="6" y="4" width="1" height="1" fill="#c0c0c0"/><rect x="7" y="4" width="2" height="1" fill="#ffff99"/><rect x="9" y="4" width="1" height="1" fill="#c0c0c0"/><rect x="10" y="4" width="2" height="1" fill="#ffff99"/><rect x="12" y="4" width="1" height="1" fill="#c0c0c0"/><rect x="13" y="4" width="1" height="1" fill="#ffff99"/><rect x="14" y="4" width="1" height="1" fill="#808080"/><rect x="1" y="5" width="1" height="1" fill="#808080"/><rect x="2" y="5" width="1" height="1" fill="#ffff99"/><rect x="3" y="5" width="1" height="1" fill="#c0c0c0"/><rect x="4" y="5" width="2" height="1" fill="#ffff99"/><rect x="6" y="5" width="1" height="1" fill="#c0c0c0"/><rect x="7" y="5" width="2" height="1" fill="#ffff99"/><rect x="9" y="5" width="1" height="1" fill="#c0c0c0"/><rect x="10" y="5" width="2" height="1" fill="#ffff99"/><rect x="12" y="5" width="1" height="1" fill="#c0c0c0"/><rect x="13" y="5" width="1" height="1" fill="#ffff99"/><rect x="14" y="5" width="1" height="1" fill="#808080"/><rect x="1" y="6" width="1" height="1" fill="#808080"/><rect x="2" y="6" width="12" height="1" fill="#c0c0c0"/><rect x="14" y="6" width="1" height="1" fill="#808080"/><rect x="1" y="7" width="1" height="1" fill="#808080"/><rect x="2" y="7" width="1" height="1" fill="#ffff99"/><rect x="3" y="7" width="1" height="1" fill="#c0c0c0"/><rect x="4" y="7" width="2" height="1" fill="#ffff99"/><rect x="6" y="7" width="1" height="1" fill="#c0c0c0"/><rect x="7" y="7" width="2" height="1" fill="#ffff99"/><rect x="9" y="7" width="1" height="1" fill="#c0c0c0"/><rect x="10" y="7" width="2" height="1" fill="#ffff99"/><rect x="12" y="7" width="1" height="1" fill="#c0c0c0"/><rect x="13" y="7" width="1" height="1" fill="#ffff99"/><rect x="14" y="7" width="1" height="1" fill="#808080"/><rect x="1" y="8" width="1" height="1" fill="#808080"/><rect x="2" y="8" width="1" height="1" fill="#ffff99"/><rect x="3" y="8" width="1" height="1" fill="#c0c0c0"/><rect x="4" y="8" width="2" height="1" fill="#ffff99"/><rect x="6" y="8" width="1" height="1" fill="#c0c0c0"/><rect x="7" y="8" width="2" height="1" fill="#ffff99"/><rect x="9" y="8" width="1" height="1" fill="#c0c0c0"/><rect x="10" y="8" width="2" height="1" fill="#ffff99"/><rect x="12" y="8" width="1" height="1" fill="#c0c0c0"/><rect x="13" y="8" width="1" height="1" fill="#ffff99"/><rect x="14" y="8" width="1" height="1" fill="#808080"/><rect x="1" y="9" width="1" height="1" fill="#808080"/><rect x="2" y="9" width="12" height="1" fill="#c0c0c0"/><rect x="14" y="9" width="1" height="1" fill="#808080"/><rect x="1" y="10" width="1" height="1" fill="#808080"/><rect x="2" y="10" width="1" height="1" fill="#ffff99"/><rect x="3" y="10" width="1" height="1" fill="#c0c0c0"/><rect x="4" y="10" width="2" height="1" fill="#ffff99"/><rect x="6" y="10" width="1" height="1" fill="#c0c0c0"/><rect x="7" y="10" width="2" height="1" fill="#ffff99"/><rect x="9" y="10" width="1" height="1" fill="#c0c0c0"/><rect x="10" y="10" width="2" height="1" fill="#ffff99"/><rect x="12" y="10" width="1" height="1" fill="#c0c0c0"/><rect x="13" y="10" width="1" height="1" fill="#ffff99"/><rect x="14" y="10" width="1" height="1" fill="#808080"/><rect x="1" y="11" width="1" height="1" fill="#808080"/><rect x="2" y="11" width="1" height="1" fill="#ffff99"/><rect x="3" y="11" width="1" height="1" fill="#c0c0c0"/><rect x="4" y="11" width="2" height="1" fill="#ffff99"/><rect x="6" y="11" width="1" height="1" fill="#c0c0c0"/><rect x="7" y="11" width="2" height="1" fill="#ffff99"/><rect x="9" y="11" width="1" height="1" fill="#c0c0c0"/><rect x="10" y="11" width="2" height="1" fill="#ffff99"/><rect x="12" y="11" width="1" height="1" fill="#c0c0c0"/><rect x="13" y="11" width="1" height="1" fill="#ffff99"/><rect x="14" y="11" width="1" height="1" fill="#808080"/><rect x="1" y="12" width="1" height="1" fill="#808080"/><rect x="2" y="12" width="12" height="1" fill="#c0c0c0"/><rect x="14" y="12" width="1" height="1" fill="#808080"/><rect x="2" y="13" width="1" height="1" fill="#808080"/><rect x="3" y="13" width="1" height="1" fill="#c0c0c0"/><rect x="4" y="13" width="2" height="1" fill="#ffff99"/><rect x="6" y="13" width="1" height="1" fill="#c0c0c0"/><rect x="7" y="13" width="2" height="1" fill="#ffff99"/><rect x="9" y="13" width="1" height="1" fill="#c0c0c0"/><rect x="10" y="13" width="2" height="1" fill="#ffff99"/><rect x="12" y="13" width="1" height="1" fill="#c0c0c0"/><rect x="13" y="13" width="1" height="1" fill="#808080"/><rect x="3" y="14" width="10" height="1" fill="#808080"/><polyline points="2,10.5 3.8,10.5 5.5,8.6 7.5,10.6 8.6,9 9.8,5.8 11.5,3.6 12.6,5.5 13,8.8 14.2,10.2" stroke="#ff0000" stroke-width="1.25" fill="none" shape-rendering="auto"/></svg>
<div class="t" style="left:102px;top:592px;">Задержка убывания коррекции состава</div>
<div class="dh" style="left:53px;top:616px;width:7px;"></div>
<div class="a" style="left:44px;top:612px;width:9px;height:9px;background:#808080;"></div>
<div class="a" style="left:45px;top:613px;width:7px;height:7px;background:#fff;"></div>
<div class="a" style="left:46px;top:616px;width:5px;height:1px;background:#000;"></div>
<svg class="ic" style="left:60px;top:608px;" width="16" height="16" viewBox="0 0 16 16" shape-rendering="crispEdges"><rect x="4" y="1" width="3" height="1" fill="#808080"/><rect x="3" y="2" width="1" height="1" fill="#808080"/><rect x="4" y="2" width="3" height="1" fill="#fff"/><rect x="7" y="2" width="1" height="1" fill="#808080"/><rect x="2" y="3" width="1" height="1" fill="#808080"/><rect x="3" y="3" width="2" height="1" fill="#fff"/><rect x="5" y="3" width="1" height="1" fill="#ffff00"/><rect x="6" y="3" width="2" height="1" fill="#fff"/><rect x="8" y="3" width="6" height="1" fill="#808080"/><rect x="2" y="4" width="1" height="1" fill="#808080"/><rect x="3" y="4" width="1" height="1" fill="#fff"/><rect x="4" y="4" width="1" height="1" fill="#ffff00"/><rect x="5" y="4" width="1" height="1" fill="#fff"/><rect x="6" y="4" width="1" height="1" fill="#ffff00"/><rect x="7" y="4" width="7" height="1" fill="#fff"/><rect x="14" y="4" width="1" height="1" fill="#000"/><rect x="2" y="5" width="1" height="1" fill="#808080"/><rect x="3" y="5" width="2" height="1" fill="#fff"/><rect x="5" y="5" width="1" height="1" fill="#ffff00"/><rect x="6" y="5" width="1" height="1" fill="#fff"/><rect x="7" y="5" width="1" height="1" fill="#ffff00"/><rect x="8" y="5" width="1" height="1" fill="#fff"/><rect x="9" y="5" width="1" height="1" fill="#ffff00"/><rect x="10" y="5" width="1" height="1" fill="#fff"/><rect x="11" y="5" width="1" height="1" fill="#ffff00"/><rect x="12" y="5" width="2" height="1" fill="#fff"/><rect x="14" y="5" width="1" height="1" fill="#000"/><rect x="1" y="6" width="10" height="1" fill="#808080"/><rect x="11" y="6" width="1" height="1" fill="#000"/><rect x="12" y="6" width="1" height="1" fill="#ffff00"/><rect x="13" y="6" width="1" height="1" fill="#fff"/><rect x="14" y="6" width="1" height="1" fill="#000"/><rect x="1" y="7" width="1" height="1" fill="#808080"/><rect x="2" y="7" width="1" height="1" fill="#fff"/><rect x="3" y="7" width="1" height="1" fill="#ffff00"/><rect x="4" y="7" width="1" height="1" fill="#fff"/><rect x="5" y="7" width="1" height="1" fill="#ffff00"/><rect x="6" y="7" width="1" height="1" fill="#fff"/><rect x="7" y="7" width="1" height="1" fill="#ffff00"/><rect x="8" y="7" width="1" height="1" fill="#fff"/><rect x="9" y="7" width="1" height="1" fill="#ffff00"/><rect x="10" y="7" width="1" height="1" fill="#fff"/><rect x="11" y="7" width="1" height="1" fill="#000"/><rect x="12" y="7" width="1" height="1" fill="#fff"/><rect x="13" y="7" width="1" height="1" fill="#ffff00"/><rect x="14" y="7" width="1" height="1" fill="#000"/><rect x="1" y="8" width="2" height="1" fill="#808080"/><rect x="3" y="8" width="1" height="1" fill="#fff"/><rect x="4" y="8" width="1" height="1" fill="#ffff00"/><rect x="5" y="8" width="1" height="1" fill="#fff"/><rect x="6" y="8" width="1" height="1" fill="#ffff00"/><rect x="7" y="8" width="1" height="1" fill="#fff"/><rect x="8" y="8" width="1" height="1" fill="#ffff00"/><rect x="9" y="8" width="1" height="1" fill="#fff"/><rect x="10" y="8" width="1" height="1" fill="#ffff00"/><rect x="11" y="8" width="2" height="1" fill="#000"/><rect x="13" y="8" width="1" height="1" fill="#fff"/><rect x="14" y="8" width="1" height="1" fill="#000"/><rect x="2" y="9" width="1" height="1" fill="#808080"/><rect x="3" y="9" width="1" height="1" fill="#ffff00"/><rect x="4" y="9" width="1" height="1" fill="#fff"/><rect x="5" y="9" width="1" height="1" fill="#ffff00"/><rect x="6" y="9" width="1" height="1" fill="#fff"/><rect x="7" y="9" width="1" height="1" fill="#ffff00"/><rect x="8" y="9" width="1" height="1" fill="#fff"/><rect x="9" y="9" width="1" height="1" fill="#ffff00"/><rect x="10" y="9" width="1" height="1" fill="#fff"/><rect x="11" y="9" width="1" height="1" fill="#ffff00"/><rect x="12" y="9" width="1" height="1" fill="#000"/><rect x="13" y="9" width="1" height="1" fill="#ffff00"/><rect x="14" y="9" width="1" height="1" fill="#000"/><rect x="2" y="10" width="1" height="1" fill="#808080"/><rect x="3" y="10" width="1" height="1" fill="#fff"/><rect x="4" y="10" width="1" height="1" fill="#ffff00"/><rect x="5" y="10" width="1" height="1" fill="#fff"/><rect x="6" y="10" width="1" height="1" fill="#ffff00"/><rect x="7" y="10" width="1" height="1" fill="#fff"/><rect x="8" y="10" width="1" height="1" fill="#ffff00"/><rect x="9" y="10" width="1" height="1" fill="#fff"/><rect x="10" y="10" width="1" height="1" fill="#ffff00"/><rect x="11" y="10" width="1" height="1" fill="#fff"/><rect x="12" y="10" width="3" height="1" fill="#000"/><rect x="2" y="11" width="2" height="1" fill="#808080"/><rect x="4" y="11" width="1" height="1" fill="#fff"/><rect x="5" y="11" width="1" height="1" fill="#ffff00"/><rect x="6" y="11" width="1" height="1" fill="#fff"/><rect x="7" y="11" width="1" height="1" fill="#ffff00"/><rect x="8" y="11" width="1" height="1" fill="#fff"/><rect x="9" y="11" width="1" height="1" fill="#ffff00"/><rect x="10" y="11" width="1" height="1" fill="#fff"/><rect x="11" y="11" width="1" height="1" fill="#ffff00"/><rect x="12" y="11" width="1" height="1" fill="#fff"/><rect x="13" y="11" width="2" height="1" fill="#000"/><rect x="3" y="12" width="10" height="1" fill="#808080"/><rect x="13" y="12" width="2" height="1" fill="#000"/><rect x="4" y="13" width="11" height="1" fill="#000"/></svg>
<div class="t" style="left:82px;top:608px;">Продувка цилиндров при пуске</div>
<div class="dh" style="left:69px;top:632px;width:11px;"></div>
<svg class="ic" style="left:80px;top:624px;" width="16" height="16" viewBox="0 0 16 16" shape-rendering="crispEdges"><rect x="3" y="1" width="10" height="1" fill="#808080"/><rect x="2" y="2" width="12" height="1" fill="#ffff99"/><rect x="1" y="3" width="1" height="1" fill="#808080"/><rect x="2" y="3" width="3" height="1" fill="#ffff99"/><rect x="5" y="3" width="1" height="1" fill="#000080"/><rect x="6" y="3" width="4" height="1" fill="#ffff99"/><rect x="10" y="3" width="2" height="1" fill="#000080"/><rect x="12" y="3" width="2" height="1" fill="#ffff99"/><rect x="14" y="3" width="1" height="1" fill="#c8c8d8"/><rect x="1" y="4" width="1" height="1" fill="#808080"/><rect x="2" y="4" width="2" height="1" fill="#ffff99"/><rect x="4" y="4" width="2" height="1" fill="#000080"/><rect x="6" y="4" width="3" height="1" fill="#ffff99"/><rect x="9" y="4" width="1" height="1" fill="#000080"/><rect x="10" y="4" width="2" height="1" fill="#ffff99"/><rect x="12" y="4" width="1" height="1" fill="#000080"/><rect x="13" y="4" width="1" height="1" fill="#ffff99"/><rect x="14" y="4" width="1" height="1" fill="#c8c8d8"/><rect x="1" y="5" width="1" height="1" fill="#808080"/><rect x="2" y="5" width="1" height="1" fill="#ffff99"/><rect x="3" y="5" width="1" height="1" fill="#000080"/><rect x="4" y="5" width="1" height="1" fill="#ffff99"/><rect x="5" y="5" width="1" height="1" fill="#000080"/><rect x="6" y="5" width="6" height="1" fill="#ffff99"/><rect x="12" y="5" width="1" height="1" fill="#000080"/><rect x="13" y="5" width="1" height="1" fill="#ffff99"/><rect x="14" y="5" width="1" height="1" fill="#c8c8d8"/><rect x="1" y="6" width="1" height="1" fill="#808080"/><rect x="2" y="6" width="3" height="1" fill="#ffff99"/><rect x="5" y="6" width="1" height="1" fill="#000080"/><rect x="6" y="6" width="6" height="1" fill="#ffff99"/><rect x="12" y="6" width="1" height="1" fill="#000080"/><rect x="13" y="6" width="1" height="1" fill="#ffff99"/><rect x="14" y="6" width="1" height="1" fill="#c8c8d8"/><rect x="1" y="7" width="1" height="1" fill="#808080"/><rect x="2" y="7" width="3" height="1" fill="#ffff99"/><rect x="5" y="7" width="1" height="1" fill="#000080"/><rect x="6" y="7" width="5" height="1" fill="#ffff99"/><rect x="11" y="7" width="1" height="1" fill="#000080"/><rect x="12" y="7" width="2" height="1" fill="#ffff99"/><rect x="14" y="7" width="1" height="1" fill="#c8c8d8"/><rect x="1" y="8" width="1" height="1" fill="#808080"/><rect x="2" y="8" width="3" height="1" fill="#ffff99"/><rect x="5" y="8" width="1" height="1" fill="#000080"/><rect x="6" y="8" width="4" height="1" fill="#ffff99"/><rect x="10" y="8" width="1" height="1" fill="#000080"/><rect x="11" y="8" width="3" height="1" fill="#ffff99"/><rect x="14" y="8" width="1" height="1" fill="#c8c8d8"/><rect x="1" y="9" width="1" height="1" fill="#808080"/><rect x="2" y="9" width="3" height="1" fill="#ffff99"/><rect x="5" y="9" width="1" height="1" fill="#000080"/><rect x="6" y="9" width="3" height="1" fill="#ffff99"/><rect x="9" y="9" width="1" height="1" fill="#000080"/><rect x="10" y="9" width="4" height="1" fill="#ffff99"/><rect x="14" y="9" width="1" height="1" fill="#c8c8d8"/><rect x="1" y="10" width="1" height="1" fill="#808080"/><rect x="2" y="10" width="3" height="1" fill="#ffff99"/><rect x="5" y="10" width="1" height="1" fill="#000080"/><rect x="6" y="10" width="1" height="1" fill="#ffff99"/><rect x="7" y="10" width="1" height="1" fill="#000080"/><rect x="8" y="10" width="1" height="1" fill="#ffff99"/><rect x="9" y="10" width="4" height="1" fill="#000080"/><rect x="13" y="10" width="1" height="1" fill="#ffff99"/><rect x="14" y="10" width="1" height="1" fill="#c8c8d8"/><rect x="1" y="11" width="1" height="1" fill="#808080"/><rect x="2" y="11" width="12" height="1" fill="#ffff99"/><rect x="2" y="12" width="12" height="1" fill="#ffff99"/><rect x="3" y="13" width="10" height="1" fill="#c8c8d8"/></svg>
<div class="t" style="left:102px;top:624px;">Порог продувки по дросселю</div>
</div>
<div class="a" style="left:434px;top:84px;width:16px;height:636px;background:repeating-conic-gradient(#fff 0 25%, #cccccc 0 50%) 0 0/2px 2px;"></div>
<div class="a" style="left:434px;top:84px;width:16px;height:16px;background:#cccccc;"></div>
<div class="a" style="left:434px;top:84px;width:16px;height:1px;background:#cccccc;"></div>
<div class="a" style="left:434px;top:84px;width:1px;height:16px;background:#cccccc;"></div>
<div class="a" style="left:435px;top:85px;width:14px;height:1px;background:#fff;"></div>
<div class="a" style="left:435px;top:85px;width:1px;height:14px;background:#fff;"></div>
<div class="a" style="left:434px;top:99px;width:16px;height:1px;background:#333333;"></div>
<div class="a" style="left:449px;top:84px;width:1px;height:16px;background:#333333;"></div>
<div class="a" style="left:435px;top:98px;width:14px;height:1px;background:#808080;"></div>
<div class="a" style="left:448px;top:85px;width:1px;height:14px;background:#808080;"></div>
<svg class="a" style="left:438px;top:89px" width="8" height="5" viewBox="0 0 8 5" shape-rendering="crispEdges"><rect x="3" y="0" width="1" height="1" fill="#000"/><rect x="2" y="1" width="3" height="1" fill="#000"/><rect x="1" y="2" width="5" height="1" fill="#000"/><rect x="0" y="3" width="7" height="1" fill="#000"/></svg>
<div class="a" style="left:434px;top:704px;width:16px;height:16px;background:#cccccc;"></div>
<div class="a" style="left:434px;top:704px;width:16px;height:1px;background:#cccccc;"></div>
<div class="a" style="left:434px;top:704px;width:1px;height:16px;background:#cccccc;"></div>
<div class="a" style="left:435px;top:705px;width:14px;height:1px;background:#fff;"></div>
<div class="a" style="left:435px;top:705px;width:1px;height:14px;background:#fff;"></div>
<div class="a" style="left:434px;top:719px;width:16px;height:1px;background:#333333;"></div>
<div class="a" style="left:449px;top:704px;width:1px;height:16px;background:#333333;"></div>
<div class="a" style="left:435px;top:718px;width:14px;height:1px;background:#808080;"></div>
<div class="a" style="left:448px;top:705px;width:1px;height:14px;background:#808080;"></div>
<svg class="a" style="left:438px;top:709px" width="8" height="5" viewBox="0 0 8 5" shape-rendering="crispEdges"><rect x="0" y="0" width="7" height="1" fill="#000"/><rect x="1" y="1" width="5" height="1" fill="#000"/><rect x="2" y="2" width="3" height="1" fill="#000"/><rect x="3" y="3" width="1" height="1" fill="#000"/></svg>
<div class="a" style="left:434px;top:249px;width:16px;height:45px;background:#cccccc;"></div>
<div class="a" style="left:434px;top:249px;width:16px;height:1px;background:#cccccc;"></div>
<div class="a" style="left:434px;top:249px;width:1px;height:45px;background:#cccccc;"></div>
<div class="a" style="left:435px;top:250px;width:14px;height:1px;background:#fff;"></div>
<div class="a" style="left:435px;top:250px;width:1px;height:43px;background:#fff;"></div>
<div class="a" style="left:434px;top:293px;width:16px;height:1px;background:#333333;"></div>
<div class="a" style="left:449px;top:249px;width:1px;height:45px;background:#333333;"></div>
<div class="a" style="left:435px;top:292px;width:14px;height:1px;background:#808080;"></div>
<div class="a" style="left:448px;top:250px;width:1px;height:43px;background:#808080;"></div>
<div class="a" style="left:454px;top:82px;width:456px;height:1px;background:#fff;"></div>
<div class="a" style="left:454px;top:82px;width:1px;height:639px;background:#fff;"></div>
<div class="a" style="left:910px;top:82px;width:1px;height:640px;background:#808080;"></div>
<div class="a" style="left:454px;top:721px;width:457px;height:1px;background:#808080;"></div>
<svg class="a" style="left:0;top:0" width="915" height="745" viewBox="0 0 915 745" font-family="Liberation Sans" font-size="11">
<path d="M534 495.5H898" stroke="#808080" stroke-width="1" stroke-dasharray="3 3" fill="none" shape-rendering="crispEdges"/>
<path d="M534 477.5H898" stroke="#808080" stroke-width="1" stroke-dasharray="3 3" fill="none" shape-rendering="crispEdges"/>
<path d="M534 458.5H898" stroke="#808080" stroke-width="1" stroke-dasharray="3 3" fill="none" shape-rendering="crispEdges"/>
<path d="M534 440.5H898" stroke="#808080" stroke-width="1" stroke-dasharray="3 3" fill="none" shape-rendering="crispEdges"/>
<path d="M534 422.5H898" stroke="#808080" stroke-width="1" stroke-dasharray="3 3" fill="none" shape-rendering="crispEdges"/>
<path d="M534 403.5H898" stroke="#808080" stroke-width="1" stroke-dasharray="3 3" fill="none" shape-rendering="crispEdges"/>
<path d="M534 385.5H898" stroke="#808080" stroke-width="1" stroke-dasharray="3 3" fill="none" shape-rendering="crispEdges"/>
<path d="M534 367.5H898" stroke="#808080" stroke-width="1" stroke-dasharray="3 3" fill="none" shape-rendering="crispEdges"/>
<path d="M534 348.5H898" stroke="#808080" stroke-width="1" stroke-dasharray="3 3" fill="none" shape-rendering="crispEdges"/>
<path d="M534 330.5H898" stroke="#808080" stroke-width="1" stroke-dasharray="3 3" fill="none" shape-rendering="crispEdges"/>
<path d="M534 311.5H898" stroke="#808080" stroke-width="1" stroke-dasharray="3 3" fill="none" shape-rendering="crispEdges"/>
<path d="M534 293.5H898" stroke="#808080" stroke-width="1" stroke-dasharray="3 3" fill="none" shape-rendering="crispEdges"/>
<path d="M534 275.5H898" stroke="#808080" stroke-width="1" stroke-dasharray="3 3" fill="none" shape-rendering="crispEdges"/>
<path d="M534 256.5H898" stroke="#808080" stroke-width="1" stroke-dasharray="3 3" fill="none" shape-rendering="crispEdges"/>
<path d="M534 238.5H898" stroke="#808080" stroke-width="1" stroke-dasharray="3 3" fill="none" shape-rendering="crispEdges"/>
<path d="M534 219.5H898" stroke="#808080" stroke-width="1" stroke-dasharray="3 3" fill="none" shape-rendering="crispEdges"/>
<path d="M534 201.5H898" stroke="#808080" stroke-width="1" stroke-dasharray="3 3" fill="none" shape-rendering="crispEdges"/>
<path d="M534 182.5H898" stroke="#808080" stroke-width="1" stroke-dasharray="3 3" fill="none" shape-rendering="crispEdges"/>
<path d="M534 164.5H898" stroke="#808080" stroke-width="1" stroke-dasharray="3 3" fill="none" shape-rendering="crispEdges"/>
<path d="M534 146.5H898" stroke="#808080" stroke-width="1" stroke-dasharray="3 3" fill="none" shape-rendering="crispEdges"/>
<path d="M534.5 128V495" stroke="#808080" stroke-width="1" stroke-dasharray="3 3" fill="none" shape-rendering="crispEdges"/>
<path d="M625.5 128V495" stroke="#808080" stroke-width="1" stroke-dasharray="3 3" fill="none" shape-rendering="crispEdges"/>
<path d="M716.5 128V495" stroke="#808080" stroke-width="1" stroke-dasharray="3 3" fill="none" shape-rendering="crispEdges"/>
<path d="M806.5 128V495" stroke="#808080" stroke-width="1" stroke-dasharray="3 3" fill="none" shape-rendering="crispEdges"/>
<path d="M897.5 128V495" stroke="#808080" stroke-width="1" stroke-dasharray="3 3" fill="none" shape-rendering="crispEdges"/>
<path d="M511 520.5L535 495.5" stroke="#808080" stroke-width="1" stroke-dasharray="3 3" fill="none" shape-rendering="crispEdges"/>
<path d="M511 502.5L535 477.5" stroke="#808080" stroke-width="1" stroke-dasharray="3 3" fill="none" shape-rendering="crispEdges"/>
<path d="M511 483.5L535 458.5" stroke="#808080" stroke-width="1" stroke-dasharray="3 3" fill="none" shape-rendering="crispEdges"/>
<path d="M511 465.5L535 440.5" stroke="#808080" stroke-width="1" stroke-dasharray="3 3" fill="none" shape-rendering="crispEdges"/>
<path d="M511 446.5L535 422.5" stroke="#808080" stroke-width="1" stroke-dasharray="3 3" fill="none" shape-rendering="crispEdges"/>
<path d="M511 428.5L535 403.5" stroke="#808080" stroke-width="1" stroke-dasharray="3 3" fill="none" shape-rendering="crispEdges"/>
<path d="M511 410.5L535 385.5" stroke="#808080" stroke-width="1" stroke-dasharray="3 3" fill="none" shape-rendering="crispEdges"/>
<path d="M511 391.5L535 367.5" stroke="#808080" stroke-width="1" stroke-dasharray="3 3" fill="none" shape-rendering="crispEdges"/>
<path d="M511 373.5L535 348.5" stroke="#808080" stroke-width="1" stroke-dasharray="3 3" fill="none" shape-rendering="crispEdges"/>
<path d="M511 354.5L535 330.5" stroke="#808080" stroke-width="1" stroke-dasharray="3 3" fill="none" shape-rendering="crispEdges"/>
<path d="M511 336.5L535 311.5" stroke="#808080" stroke-width="1" stroke-dasharray="3 3" fill="none" shape-rendering="crispEdges"/>
<path d="M511 318.5L535 293.5" stroke="#808080" stroke-width="1" stroke-dasharray="3 3" fill="none" shape-rendering="crispEdges"/>
<path d="M511 299.5L535 275.5" stroke="#808080" stroke-width="1" stroke-dasharray="3 3" fill="none" shape-rendering="crispEdges"/>
<path d="M511 281.5L535 256.5" stroke="#808080" stroke-width="1" stroke-dasharray="3 3" fill="none" shape-rendering="crispEdges"/>
<path d="M511 262.5L535 238.5" stroke="#808080" stroke-width="1" stroke-dasharray="3 3" fill="none" shape-rendering="crispEdges"/>
<path d="M511 244.5L535 219.5" stroke="#808080" stroke-width="1" stroke-dasharray="3 3" fill="none" shape-rendering="crispEdges"/>
<path d="M511 226.5L535 201.5" stroke="#808080" stroke-width="1" stroke-dasharray="3 3" fill="none" shape-rendering="crispEdges"/>
<path d="M511 207.5L535 182.5" stroke="#808080" stroke-width="1" stroke-dasharray="3 3" fill="none" shape-rendering="crispEdges"/>
<path d="M511 189.5L535 164.5" stroke="#808080" stroke-width="1" stroke-dasharray="3 3" fill="none" shape-rendering="crispEdges"/>
<path d="M511 170.5L535 146.5" stroke="#808080" stroke-width="1" stroke-dasharray="3 3" fill="none" shape-rendering="crispEdges"/>
<path d="M600.5 520L625.5 495.5" stroke="#808080" stroke-width="1" stroke-dasharray="3 3" fill="none" shape-rendering="crispEdges"/>
<path d="M691.5 520L716.5 495.5" stroke="#808080" stroke-width="1" stroke-dasharray="3 3" fill="none" shape-rendering="crispEdges"/>
<path d="M781.5 520L806.5 495.5" stroke="#808080" stroke-width="1" stroke-dasharray="3 3" fill="none" shape-rendering="crispEdges"/>
<path d="M872.5 520L897.5 495.5" stroke="#808080" stroke-width="1" stroke-dasharray="3 3" fill="none" shape-rendering="crispEdges"/>
<path d="M505 520.5H511" stroke="#808080" stroke-width="1"/>
<text x="502" y="523.5" text-anchor="end">0</text>
<path d="M505 502.5H511" stroke="#808080" stroke-width="1"/>
<text x="502" y="505.5" text-anchor="end">0.1</text>
<path d="M505 483.5H511" stroke="#808080" stroke-width="1"/>
<text x="502" y="486.5" text-anchor="end">0.2</text>
<path d="M505 465.5H511" stroke="#808080" stroke-width="1"/>
<text x="502" y="468.5" text-anchor="end">0.3</text>
<path d="M505 446.5H511" stroke="#808080" stroke-width="1"/>
<text x="502" y="449.5" text-anchor="end">0.4</text>
<path d="M505 428.5H511" stroke="#808080" stroke-width="1"/>
<text x="502" y="431.5" text-anchor="end">0.5</text>
<path d="M505 410.5H511" stroke="#808080" stroke-width="1"/>
<text x="502" y="413.5" text-anchor="end">0.6</text>
<path d="M505 391.5H511" stroke="#808080" stroke-width="1"/>
<text x="502" y="394.5" text-anchor="end">0.7</text>
<path d="M505 373.5H511" stroke="#808080" stroke-width="1"/>
<text x="502" y="376.5" text-anchor="end">0.8</text>
<path d="M505 354.5H511" stroke="#808080" stroke-width="1"/>
<text x="502" y="357.5" text-anchor="end">0.9</text>
<path d="M505 336.5H511" stroke="#808080" stroke-width="1"/>
<text x="502" y="339.5" text-anchor="end">1</text>
<path d="M505 318.5H511" stroke="#808080" stroke-width="1"/>
<text x="502" y="321.5" text-anchor="end">1.1</text>
<path d="M505 299.5H511" stroke="#808080" stroke-width="1"/>
<text x="502" y="302.5" text-anchor="end">1.2</text>
<path d="M505 281.5H511" stroke="#808080" stroke-width="1"/>
<text x="502" y="284.5" text-anchor="end">1.3</text>
<path d="M505 262.5H511" stroke="#808080" stroke-width="1"/>
<text x="502" y="265.5" text-anchor="end">1.4</text>
<path d="M505 244.5H511" stroke="#808080" stroke-width="1"/>
<text x="502" y="247.5" text-anchor="end">1.5</text>
<path d="M505 226.5H511" stroke="#808080" stroke-width="1"/>
<text x="502" y="229.5" text-anchor="end">1.6</text>
<path d="M505 207.5H511" stroke="#808080" stroke-width="1"/>
<text x="502" y="210.5" text-anchor="end">1.7</text>
<path d="M505 189.5H511" stroke="#808080" stroke-width="1"/>
<text x="502" y="192.5" text-anchor="end">1.8</text>
<path d="M505 170.5H511" stroke="#808080" stroke-width="1"/>
<text x="502" y="173.5" text-anchor="end">1.9</text>
<path d="M510.5 521V523" stroke="#000" stroke-width="1"/>
<path d="M532.5 521V523" stroke="#000" stroke-width="1"/>
<path d="M555.5 521V523" stroke="#000" stroke-width="1"/>
<path d="M577.5 521V523" stroke="#000" stroke-width="1"/>
<path d="M600.5 521V523" stroke="#000" stroke-width="1"/>
<path d="M623.5 521V523" stroke="#000" stroke-width="1"/>
<path d="M645.5 521V523" stroke="#000" stroke-width="1"/>
<path d="M668.5 521V523" stroke="#000" stroke-width="1"/>
<path d="M691.5 521V523" stroke="#000" stroke-width="1"/>
<path d="M713.5 521V523" stroke="#000" stroke-width="1"/>
<path d="M736.5 521V523" stroke="#000" stroke-width="1"/>
<path d="M759.5 521V523" stroke="#000" stroke-width="1"/>
<path d="M781.5 521V523" stroke="#000" stroke-width="1"/>
<path d="M804.5 521V523" stroke="#000" stroke-width="1"/>
<path d="M827.5 521V523" stroke="#000" stroke-width="1"/>
<path d="M849.5 521V523" stroke="#000" stroke-width="1"/>
<path d="M872.5 521V523" stroke="#000" stroke-width="1"/>
<rect x="508" y="153" width="2" height="368" fill="#000"/>
<rect x="508" y="519" width="365" height="2" fill="#000"/>
<text transform="translate(513.5 524) rotate(-90)" text-anchor="end">0</text>
<text transform="translate(604.125 524) rotate(-90)" text-anchor="end">1.25</text>
<text transform="translate(694.75 524) rotate(-90)" text-anchor="end">2.5</text>
<text transform="translate(785.375 524) rotate(-90)" text-anchor="end">3.75</text>
<text transform="translate(876.0 524) rotate(-90)" text-anchor="end">5</text>
<text x="681" y="120" text-anchor="middle" font-weight="bold" font-size="11.5">Коррекция топлива от RCO</text>
<text x="689" y="560" text-anchor="middle" font-weight="bold" font-size="11.3">Напряжение в канале RCO</text>
<text transform="translate(479.5 336.5) rotate(-90)" text-anchor="middle" font-weight="bold" font-size="11.5">Коэффициент коррекции</text>
<path d="M529.5 324.5L892 307.5L897.5 302.3L535.0 319.3Z" fill="#9999cc" stroke="#000" stroke-width="1.5" stroke-linejoin="bevel"/>
<path d="M620.125 320.25L625.625 315.05" stroke="#000" stroke-width="1"/>
<path d="M710.75 316.0L716.25 310.8" stroke="#000" stroke-width="1"/>
<path d="M801.375 311.75L806.875 306.55" stroke="#000" stroke-width="1"/>
<path d="M524.5 332.5L887 309.5L892.5 304.3L530.0 327.3Z" fill="#9999cc" stroke="#000" stroke-width="1.5" stroke-linejoin="bevel"/>
<path d="M615.125 326.75L620.625 321.55" stroke="#000" stroke-width="1"/>
<path d="M705.75 321.0L711.25 315.8" stroke="#000" stroke-width="1"/>
<path d="M796.375 315.25L801.875 310.05" stroke="#000" stroke-width="1"/>
<path d="M519.5 343.5L882 309.0L887.5 303.8L525.0 338.3Z" fill="#cc99cc" stroke="#000" stroke-width="1.5" stroke-linejoin="bevel"/>
<path d="M610.125 334.875L615.625 329.675" stroke="#000" stroke-width="1"/>
<path d="M700.75 326.25L706.25 321.05" stroke="#000" stroke-width="1"/>
<path d="M791.375 317.625L796.875 312.425" stroke="#000" stroke-width="1"/>
<path d="M514.5 361.0L877 302.5L882.5 297.3L520.0 355.8Z" fill="#cc66cc" stroke="#000" stroke-width="1.5" stroke-linejoin="bevel"/>
<path d="M605.125 346.375L610.625 341.175" stroke="#000" stroke-width="1"/>
<path d="M695.75 331.75L701.25 326.55" stroke="#000" stroke-width="1"/>
<path d="M786.375 317.125L791.875 311.925" stroke="#000" stroke-width="1"/>
<path d="M509.5 370.5L872 302.0L877.5 296.8L515.0 365.3Z" fill="#cc6699" stroke="#000" stroke-width="1.5" stroke-linejoin="bevel"/>
<path d="M600.125 353.375L605.625 348.175" stroke="#000" stroke-width="1"/>
<path d="M690.75 336.25L696.25 331.05" stroke="#000" stroke-width="1"/>
<path d="M781.375 319.125L786.875 313.925" stroke="#000" stroke-width="1"/>
</svg>
<div class="t" style="left:472px;top:585px;">Абсолютное давление, кПа</div>
<div class="a" style="left:633px;top:600px;width:119px;height:9px;background:#fff;"></div>
<div class="a" style="left:633px;top:600px;width:118px;height:1px;background:#808080;"></div>
<div class="a" style="left:633px;top:600px;width:1px;height:8px;background:#808080;"></div>
<div class="a" style="left:634px;top:601px;width:116px;height:1px;background:#333333;"></div>
<div class="a" style="left:634px;top:601px;width:1px;height:7px;background:#333333;"></div>
<div class="a" style="left:633px;top:608px;width:119px;height:1px;background:#fff;"></div>
<div class="a" style="left:751px;top:600px;width:1px;height:9px;background:#fff;"></div>
<div class="a" style="left:634px;top:607px;width:117px;height:1px;background:#cccccc;"></div>
<div class="a" style="left:750px;top:601px;width:1px;height:7px;background:#cccccc;"></div>
<svg class="a" style="left:632px;top:598px" width="8" height="16" viewBox="0 0 8 16">
<defs><pattern id="thd" width="2" height="2" patternUnits="userSpaceOnUse"><rect width="2" height="2" fill="#fff"/><rect width="1" height="1" fill="#cccccc"/><rect x="1" y="1" width="1" height="1" fill="#cccccc"/></pattern></defs>
<path d="M0.5 0.5H6.5V11.5L3.5 14.5L0.5 11.5Z" fill="url(#thd)" stroke="#fff" stroke-width="1"/>
<path d="M6.5 0.5V11.5L3.5 14.5" stroke="#333333" stroke-width="1" fill="none"/>
</svg>
<div class="a" style="left:635px;top:615px;width:1px;height:2px;background:#000;"></div>
<div class="a" style="left:663px;top:615px;width:1px;height:2px;background:#000;"></div>
<div class="a" style="left:691px;top:615px;width:1px;height:2px;background:#000;"></div>
<div class="a" style="left:719px;top:615px;width:1px;height:2px;background:#000;"></div>
<div class="a" style="left:747px;top:615px;width:1px;height:2px;background:#000;"></div>
<div class="t" style="left:767px;top:599px;font-weight:bold;font-size:12px;">0</div>
<div class="a" style="left:785px;top:600px;width:13px;height:13px;background:#fff;"></div>
<div class="a" style="left:785px;top:600px;width:12px;height:1px;background:#808080;"></div>
<div class="a" style="left:785px;top:600px;width:1px;height:12px;background:#808080;"></div>
<div class="a" style="left:786px;top:601px;width:10px;height:1px;background:#333333;"></div>
<div class="a" style="left:786px;top:601px;width:1px;height:10px;background:#333333;"></div>
<div class="a" style="left:785px;top:612px;width:13px;height:1px;background:#fff;"></div>
<div class="a" style="left:797px;top:600px;width:1px;height:13px;background:#fff;"></div>
<div class="a" style="left:786px;top:611px;width:11px;height:1px;background:#cccccc;"></div>
<div class="a" style="left:796px;top:601px;width:1px;height:11px;background:#cccccc;"></div>
<svg class="a" style="left:788px;top:603px" width="7" height="7" viewBox="0 0 7 7"><path d="M0 2l0 2 2 2 5-5 0-1-5 4z" fill="#000" stroke="#000" stroke-width="0.6"/></svg>
<div class="t" style="left:804px;top:598px;">3D</div>
<div class="a" style="left:455px;top:627px;width:453px;height:1px;background:#fff;"></div>
<div class="a" style="left:456px;top:628px;width:452px;height:1px;background:#808080;"></div>
<div class="a" style="left:456px;top:628px;width:1px;height:91px;background:#808080;"></div>
<div class="a" style="left:908px;top:628px;width:1px;height:92px;background:#fff;"></div>
<div class="a" style="left:456px;top:719px;width:453px;height:1px;background:#fff;"></div>
<div class="a" style="left:909px;top:627px;width:1px;height:94px;background:#808080;"></div>
<div class="a" style="left:455px;top:720px;width:455px;height:1px;background:#808080;"></div>
<div class="a" style="left:554px;top:634px;width:1px;height:80px;background:#808080;"></div>
<div class="a" style="left:555px;top:634px;width:1px;height:80px;background:#fff;"></div>
<div class="a" style="left:659px;top:634px;width:1px;height:80px;background:#808080;"></div>
<div class="a" style="left:660px;top:634px;width:1px;height:80px;background:#fff;"></div>
<div class="a" style="left:859px;top:634px;width:1px;height:80px;background:#808080;"></div>
<div class="a" style="left:860px;top:634px;width:1px;height:80px;background:#fff;"></div>
<div class="t" style="left:465px;top:637px;">Установить в</div>
<div class="t" style="left:569px;top:637px;">Изменить на</div>
<div class="a" style="left:461px;top:663px;width:61px;height:21px;background:#cccccc;"></div>
<div class="a" style="left:461px;top:663px;width:60px;height:1px;background:#808080;"></div>
<div class="a" style="left:461px;top:663px;width:1px;height:20px;background:#808080;"></div>
<div class="a" style="left:462px;top:664px;width:58px;height:1px;background:#333333;"></div>
<div class="a" style="left:462px;top:664px;width:1px;height:18px;background:#333333;"></div>
<div class="a" style="left:461px;top:683px;width:61px;height:1px;background:#fff;"></div>
<div class="a" style="left:521px;top:663px;width:1px;height:21px;background:#fff;"></div>
<div class="t" style="left:464px;top:665px;">0.00</div>
<svg class="a" style="left:502px;top:665px" width="17" height="17" viewBox="0 0 17 17">
<rect x="0.5" y="0.5" width="16" height="16" fill="#cccccc"/>
<path d="M0.5 16.5V0.5H16.5" stroke="#fff" stroke-width="1" fill="none"/>
<path d="M16.5 0.5V16.5H0.5" stroke="#333333" stroke-width="1" fill="none"/>
<path d="M1.5 15.5L15.5 1.5" stroke="#000" stroke-width="1"/>
<path d="M4.5 2.5v6.5M2 5l2.5-2.5 2.5 2.5" stroke="#000" stroke-width="1.9" fill="none"/>
<path d="M12 8v6.5M9.5 12l2.5 2.5 2.5-2.5" stroke="#000" stroke-width="1.9" fill="none"/>
</svg>
<div class="a" style="left:565px;top:659px;width:61px;height:21px;background:#cccccc;"></div>
<div class="a" style="left:565px;top:659px;width:60px;height:1px;background:#808080;"></div>
<div class="a" style="left:565px;top:659px;width:1px;height:20px;background:#808080;"></div>
<div class="a" style="left:566px;top:660px;width:58px;height:1px;background:#333333;"></div>
<div class="a" style="left:566px;top:660px;width:1px;height:18px;background:#333333;"></div>
<div class="a" style="left:565px;top:679px;width:61px;height:1px;background:#fff;"></div>
<div class="a" style="left:625px;top:659px;width:1px;height:21px;background:#fff;"></div>
<div class="t" style="left:568px;top:661px;">0.00</div>
<svg class="a" style="left:606px;top:661px" width="17" height="17" viewBox="0 0 17 17">
<rect x="0.5" y="0.5" width="16" height="16" fill="#cccccc"/>
<path d="M0.5 16.5V0.5H16.5" stroke="#fff" stroke-width="1" fill="none"/>
<path d="M16.5 0.5V16.5H0.5" stroke="#333333" stroke-width="1" fill="none"/>
<path d="M1.5 15.5L15.5 1.5" stroke="#000" stroke-width="1"/>
<path d="M4.5 2.5v6.5M2 5l2.5-2.5 2.5 2.5" stroke="#000" stroke-width="1.9" fill="none"/>
<path d="M12 8v6.5M9.5 12l2.5 2.5 2.5-2.5" stroke="#000" stroke-width="1.9" fill="none"/>
</svg>
<svg class="a" style="left:532px;top:666px" width="15" height="15" viewBox="0 0 15 15">
<defs><linearGradient id="ga532" x1="0" y1="0" x2="1" y2="1"><stop offset="0" stop-color="#66dd66"/><stop offset="0.45" stop-color="#229933"/><stop offset="1" stop-color="#006611"/></linearGradient></defs>
<rect x="0" y="0" width="15" height="15" rx="1.5" fill="url(#ga532)"/>
<path d="M3 7.5h7.5M7 3.8l3.7 3.7L7 11.2" stroke="#fff" stroke-width="2.1" fill="none"/>
</svg>
<svg class="a" style="left:636px;top:662px" width="15" height="15" viewBox="0 0 15 15">
<defs><linearGradient id="ga636" x1="0" y1="0" x2="1" y2="1"><stop offset="0" stop-color="#66dd66"/><stop offset="0.45" stop-color="#229933"/><stop offset="1" stop-color="#006611"/></linearGradient></defs>
<rect x="0" y="0" width="15" height="15" rx="1.5" fill="url(#ga636)"/>
<path d="M3 7.5h7.5M7 3.8l3.7 3.7L7 11.2" stroke="#fff" stroke-width="2.1" fill="none"/>
</svg>
<div class="a" style="left:569px;top:693px;width:13px;height:13px;background:#fff;"></div>
<div class="a" style="left:569px;top:693px;width:12px;height:1px;background:#808080;"></div>
<div class="a" style="left:569px;top:693px;width:1px;height:12px;background:#808080;"></div>
<div class="a" style="left:570px;top:694px;width:10px;height:1px;background:#333333;"></div>
<div class="a" style="left:570px;top:694px;width:1px;height:10px;background:#333333;"></div>
<div class="a" style="left:569px;top:705px;width:13px;height:1px;background:#fff;"></div>
<div class="a" style="left:581px;top:693px;width:1px;height:13px;background:#fff;"></div>
<div class="a" style="left:570px;top:704px;width:11px;height:1px;background:#cccccc;"></div>
<div class="a" style="left:580px;top:694px;width:1px;height:11px;background:#cccccc;"></div>
<div class="t" style="left:588px;top:690px;">процентов</div>
<svg class="a" style="left:665px;top:632px" width="97" height="82" viewBox="0 0 97 82">
<g shape-rendering="crispEdges"><rect x="6" y="6" width="1" height="71" fill="#808080"/><rect x="13" y="6" width="1" height="71" fill="#808080"/><rect x="20" y="6" width="1" height="71" fill="#808080"/><rect x="28" y="6" width="1" height="71" fill="#808080"/><rect x="35" y="6" width="1" height="71" fill="#808080"/><rect x="42" y="6" width="1" height="71" fill="#808080"/><rect x="49" y="6" width="1" height="71" fill="#808080"/><rect x="56" y="6" width="1" height="71" fill="#808080"/><rect x="63" y="6" width="1" height="71" fill="#808080"/><rect x="70" y="6" width="1" height="71" fill="#808080"/><rect x="77" y="6" width="1" height="71" fill="#808080"/><rect x="84" y="6" width="1" height="71" fill="#808080"/><rect x="91" y="6" width="1" height="71" fill="#808080"/><rect x="6" y="6" width="85" height="1" fill="#808080"/><rect x="6" y="16" width="85" height="1" fill="#808080"/><rect x="6" y="26" width="85" height="1" fill="#808080"/><rect x="6" y="36" width="85" height="1" fill="#808080"/><rect x="6" y="46" width="85" height="1" fill="#808080"/><rect x="6" y="56" width="85" height="1" fill="#808080"/><rect x="6" y="66" width="85" height="1" fill="#808080"/><rect x="6" y="76" width="85" height="1" fill="#808080"/></g>
<polyline points="11.0,11.3 29.2,11.3 37.4,12.3 47.4,16.5 57.3,23.1 66.1,31.9 72.1,40.2 77.1,48.5 82.0,59.5 86.5,71.6" stroke="#0000ff" stroke-width="1.05" fill="none"/>
<polyline points="11.0,72.5 28.1,72.5 36.3,71.0 47.4,66.6 57.3,60.0 65.0,52.9 71.6,44.0 77.1,35.2 82.6,23.1 86.5,12.3" stroke="#ff0000" stroke-width="1.05" fill="none"/>
</svg>
<div class="a" style="left:767px;top:637px;width:80px;height:5px;background:#fff;"></div>
<div class="a" style="left:767px;top:637px;width:79px;height:1px;background:#808080;"></div>
<div class="a" style="left:767px;top:637px;width:1px;height:4px;background:#808080;"></div>
<div class="a" style="left:768px;top:638px;width:77px;height:1px;background:#333333;"></div>
<div class="a" style="left:768px;top:638px;width:1px;height:3px;background:#333333;"></div>
<div class="a" style="left:768px;top:640px;width:78px;height:1px;background:#cccccc;"></div>
<div class="a" style="left:767px;top:641px;width:80px;height:1px;background:#fff;"></div>
<div class="a" style="left:846px;top:637px;width:1px;height:5px;background:#fff;"></div>
<svg class="a" style="left:767px;top:637px" width="6" height="10" viewBox="0 0 6 10">
<path d="M0.5 0.5H4.5V7L2.5 9.2L0.5 7Z" fill="#cccccc" stroke="#fff" stroke-width="1"/>
<path d="M4.5 0.5V7L2.5 9.2" stroke="#333333" stroke-width="1" fill="none"/>
</svg>
<svg class="a" style="left:769px;top:647px" width="80" height="4" shape-rendering="crispEdges"><rect x="0" y="0" width="1" height="4" fill="#000"/><rect x="4" y="0" width="1" height="4" fill="#000"/><rect x="8" y="0" width="1" height="4" fill="#000"/><rect x="13" y="0" width="1" height="4" fill="#000"/><rect x="17" y="0" width="1" height="4" fill="#000"/><rect x="21" y="0" width="1" height="4" fill="#000"/><rect x="25" y="0" width="1" height="4" fill="#000"/><rect x="29" y="0" width="1" height="4" fill="#000"/><rect x="34" y="0" width="1" height="4" fill="#000"/><rect x="38" y="0" width="1" height="4" fill="#000"/><rect x="42" y="0" width="1" height="4" fill="#000"/><rect x="46" y="0" width="1" height="4" fill="#000"/><rect x="50" y="0" width="1" height="4" fill="#000"/><rect x="54" y="0" width="1" height="4" fill="#000"/><rect x="59" y="0" width="1" height="4" fill="#000"/><rect x="63" y="0" width="1" height="4" fill="#000"/><rect x="67" y="0" width="1" height="4" fill="#000"/><rect x="71" y="0" width="1" height="4" fill="#000"/><rect x="75" y="0" width="1" height="4" fill="#000"/></svg>
<div class="a" style="left:767px;top:657px;width:80px;height:5px;background:#fff;"></div>
<div class="a" style="left:767px;top:657px;width:79px;height:1px;background:#808080;"></div>
<div class="a" style="left:767px;top:657px;width:1px;height:4px;background:#808080;"></div>
<div class="a" style="left:768px;top:658px;width:77px;height:1px;background:#333333;"></div>
<div class="a" style="left:768px;top:658px;width:1px;height:3px;background:#333333;"></div>
<div class="a" style="left:768px;top:660px;width:78px;height:1px;background:#cccccc;"></div>
<div class="a" style="left:767px;top:661px;width:80px;height:1px;background:#fff;"></div>
<div class="a" style="left:846px;top:657px;width:1px;height:5px;background:#fff;"></div>
<svg class="a" style="left:801px;top:657px" width="6" height="10" viewBox="0 0 6 10">
<path d="M0.5 0.5H4.5V7L2.5 9.2L0.5 7Z" fill="#cccccc" stroke="#fff" stroke-width="1"/>
<path d="M4.5 0.5V7L2.5 9.2" stroke="#333333" stroke-width="1" fill="none"/>
</svg>
<svg class="a" style="left:769px;top:667px" width="80" height="4" shape-rendering="crispEdges"><rect x="0" y="0" width="1" height="4" fill="#000"/><rect x="4" y="0" width="1" height="4" fill="#000"/><rect x="8" y="0" width="1" height="4" fill="#000"/><rect x="13" y="0" width="1" height="4" fill="#000"/><rect x="17" y="0" width="1" height="4" fill="#000"/><rect x="21" y="0" width="1" height="4" fill="#000"/><rect x="25" y="0" width="1" height="4" fill="#000"/><rect x="29" y="0" width="1" height="4" fill="#000"/><rect x="34" y="0" width="1" height="4" fill="#000"/><rect x="38" y="0" width="1" height="4" fill="#000"/><rect x="42" y="0" width="1" height="4" fill="#000"/><rect x="46" y="0" width="1" height="4" fill="#000"/><rect x="50" y="0" width="1" height="4" fill="#000"/><rect x="54" y="0" width="1" height="4" fill="#000"/><rect x="59" y="0" width="1" height="4" fill="#000"/><rect x="63" y="0" width="1" height="4" fill="#000"/><rect x="67" y="0" width="1" height="4" fill="#000"/><rect x="71" y="0" width="1" height="4" fill="#000"/><rect x="75" y="0" width="1" height="4" fill="#000"/></svg>
<svg class="a" style="left:776px;top:679px" width="21" height="21" viewBox="0 0 21 21" shape-rendering="crispEdges">
<rect x="1" y="1" width="19" height="19" fill="#fff"/>
<rect x="1" y="1" width="19" height="2" fill="#a8a8a8"/>
<rect x="1" y="1" width="1" height="19" fill="#a8a8a8"/>
<rect x="19" y="1" width="1" height="19" fill="#a8a8a8"/>
<rect x="1" y="19" width="19" height="1" fill="#a8a8a8"/>
<path d="M4 17L17 4" stroke="#b0b0b0" stroke-width="1" shape-rendering="auto"/>
<rect x="3" y="15" width="3" height="3" fill="#b8b8b8"/><rect x="9" y="9" width="3" height="3" fill="#b8b8b8"/><rect x="14" y="3" width="3" height="3" fill="#b8b8b8"/>
</svg>
<div class="t" style="left:808px;top:675px;color:#fff;">Интер-</div>
<div class="t" style="left:807px;top:674px;color:#808080;">Интер-</div>
<div class="t" style="left:805px;top:689px;color:#fff;">поляция</div>
<div class="t" style="left:804px;top:688px;color:#808080;">поляция</div>
<div class="a" style="left:873px;top:644px;width:13px;height:13px;background:#cccccc;"></div>
<div class="a" style="left:873px;top:644px;width:12px;height:1px;background:#808080;"></div>
<div class="a" style="left:873px;top:644px;width:1px;height:12px;background:#808080;"></div>
<div class="a" style="left:874px;top:645px;width:10px;height:1px;background:#333333;"></div>
<div class="a" style="left:874px;top:645px;width:1px;height:10px;background:#333333;"></div>
<div class="a" style="left:873px;top:656px;width:13px;height:1px;background:#fff;"></div>
<div class="a" style="left:885px;top:644px;width:1px;height:13px;background:#fff;"></div>
<div class="a" style="left:874px;top:655px;width:11px;height:1px;background:#cccccc;"></div>
<div class="a" style="left:884px;top:645px;width:1px;height:11px;background:#cccccc;"></div>
<svg class="a" style="left:876px;top:647px" width="7" height="7" viewBox="0 0 7 7"><path d="M0 2l0 2 2 2 5-5 0-1-5 4z" fill="#808080" stroke="#808080" stroke-width="0.6"/></svg>
<div class="t" style="left:893px;top:643px;color:#fff;">ото</div>
<div class="t" style="left:892px;top:642px;color:#808080;">ото</div>
<div class="a" style="left:4px;top:724px;width:90px;height:1px;background:#808080;"></div>
<div class="a" style="left:4px;top:724px;width:1px;height:15px;background:#808080;"></div>
<div class="a" style="left:4px;top:738px;width:90px;height:1px;background:#fff;"></div>
<div class="a" style="left:93px;top:724px;width:1px;height:15px;background:#fff;"></div>
<div class="a" style="left:96px;top:724px;width:78px;height:1px;background:#808080;"></div>
<div class="a" style="left:96px;top:724px;width:1px;height:15px;background:#808080;"></div>
<div class="a" style="left:96px;top:738px;width:78px;height:1px;background:#fff;"></div>
<div class="a" style="left:173px;top:724px;width:1px;height:15px;background:#fff;"></div>
<div class="a" style="left:176px;top:724px;width:736px;height:1px;background:#808080;"></div>
<div class="a" style="left:176px;top:724px;width:1px;height:15px;background:#808080;"></div>
<div class="a" style="left:176px;top:738px;width:736px;height:1px;background:#fff;"></div>
<div class="a" style="left:911px;top:724px;width:1px;height:15px;background:#fff;"></div>
<div class="t" style="left:6px;top:725px;">GM-ISFI-2S</div>
<div class="t" style="left:98px;top:725px;">неизв. ПО</div>
<svg class="a" style="left:897px;top:726px" width="13" height="13" viewBox="0 0 13 13">
<path d="M12 1L1 12M12 5L5 12M12 9L9 12" stroke="#fff" stroke-width="1"/>
<path d="M12 2L2 12M12 3L3 12M12 6L6 12M12 7L7 12M12 10L10 12M12 11L11 12" stroke="#808080" stroke-width="1"/>
</svg>
<div class="a" style="left:0px;top:738px;width:915px;height:7px;background:#cccccc;"></div>
<div class="a" style="left:0px;top:739px;width:915px;height:1px;background:#fff;"></div>
<div class="a" style="left:2px;top:742px;width:50px;height:1px;background:#fff;"></div>
<div class="a" style="left:2px;top:742px;width:1px;height:3px;background:#fff;"></div>
<div class="a" style="left:52px;top:742px;width:1px;height:3px;background:#333333;"></div>
<div class="a" style="left:56px;top:742px;width:114px;height:1px;background:#fff;"></div>
<div class="a" style="left:56px;top:742px;width:1px;height:3px;background:#fff;"></div>
<div class="a" style="left:170px;top:742px;width:1px;height:3px;background:#333333;"></div>
<div class="a" style="left:175px;top:742px;width:89px;height:1px;background:#fff;"></div>
<div class="a" style="left:175px;top:742px;width:1px;height:3px;background:#fff;"></div>
<div class="a" style="left:264px;top:742px;width:1px;height:3px;background:#333333;"></div>
<div class="a" style="left:268px;top:742px;width:89px;height:1px;background:#fff;"></div>
<div class="a" style="left:268px;top:742px;width:1px;height:3px;background:#fff;"></div>
<div class="a" style="left:357px;top:742px;width:1px;height:3px;background:#333333;"></div>
<div class="a" style="left:361px;top:742px;width:89px;height:1px;background:#fff;"></div>
<div class="a" style="left:361px;top:742px;width:1px;height:3px;background:#fff;"></div>
<div class="a" style="left:450px;top:742px;width:1px;height:3px;background:#333333;"></div>
<div class="a" style="left:453px;top:742px;width:90px;height:1px;background:#fff;"></div>
<div class="a" style="left:453px;top:742px;width:1px;height:3px;background:#fff;"></div>
<div class="a" style="left:543px;top:742px;width:1px;height:3px;background:#333333;"></div>
<div class="a" style="left:640px;top:742px;width:90px;height:1px;background:#fff;"></div>
<div class="a" style="left:640px;top:742px;width:1px;height:3px;background:#fff;"></div>
<div class="a" style="left:730px;top:742px;width:1px;height:3px;background:#333333;"></div>
<div class="a" style="left:734px;top:742px;width:91px;height:1px;background:#fff;"></div>
<div class="a" style="left:734px;top:742px;width:1px;height:3px;background:#fff;"></div>
<div class="a" style="left:825px;top:742px;width:1px;height:3px;background:#333333;"></div>
<div class="a" style="left:547px;top:742px;width:89px;height:1px;background:#333333;"></div>
<div class="a" style="left:547px;top:742px;width:1px;height:3px;background:#333333;"></div>
<div class="a" style="left:875px;top:742px;width:40px;height:1px;background:#808080;"></div>
<div class="a" style="left:875px;top:742px;width:1px;height:3px;background:#808080;"></div>
</body></html>
